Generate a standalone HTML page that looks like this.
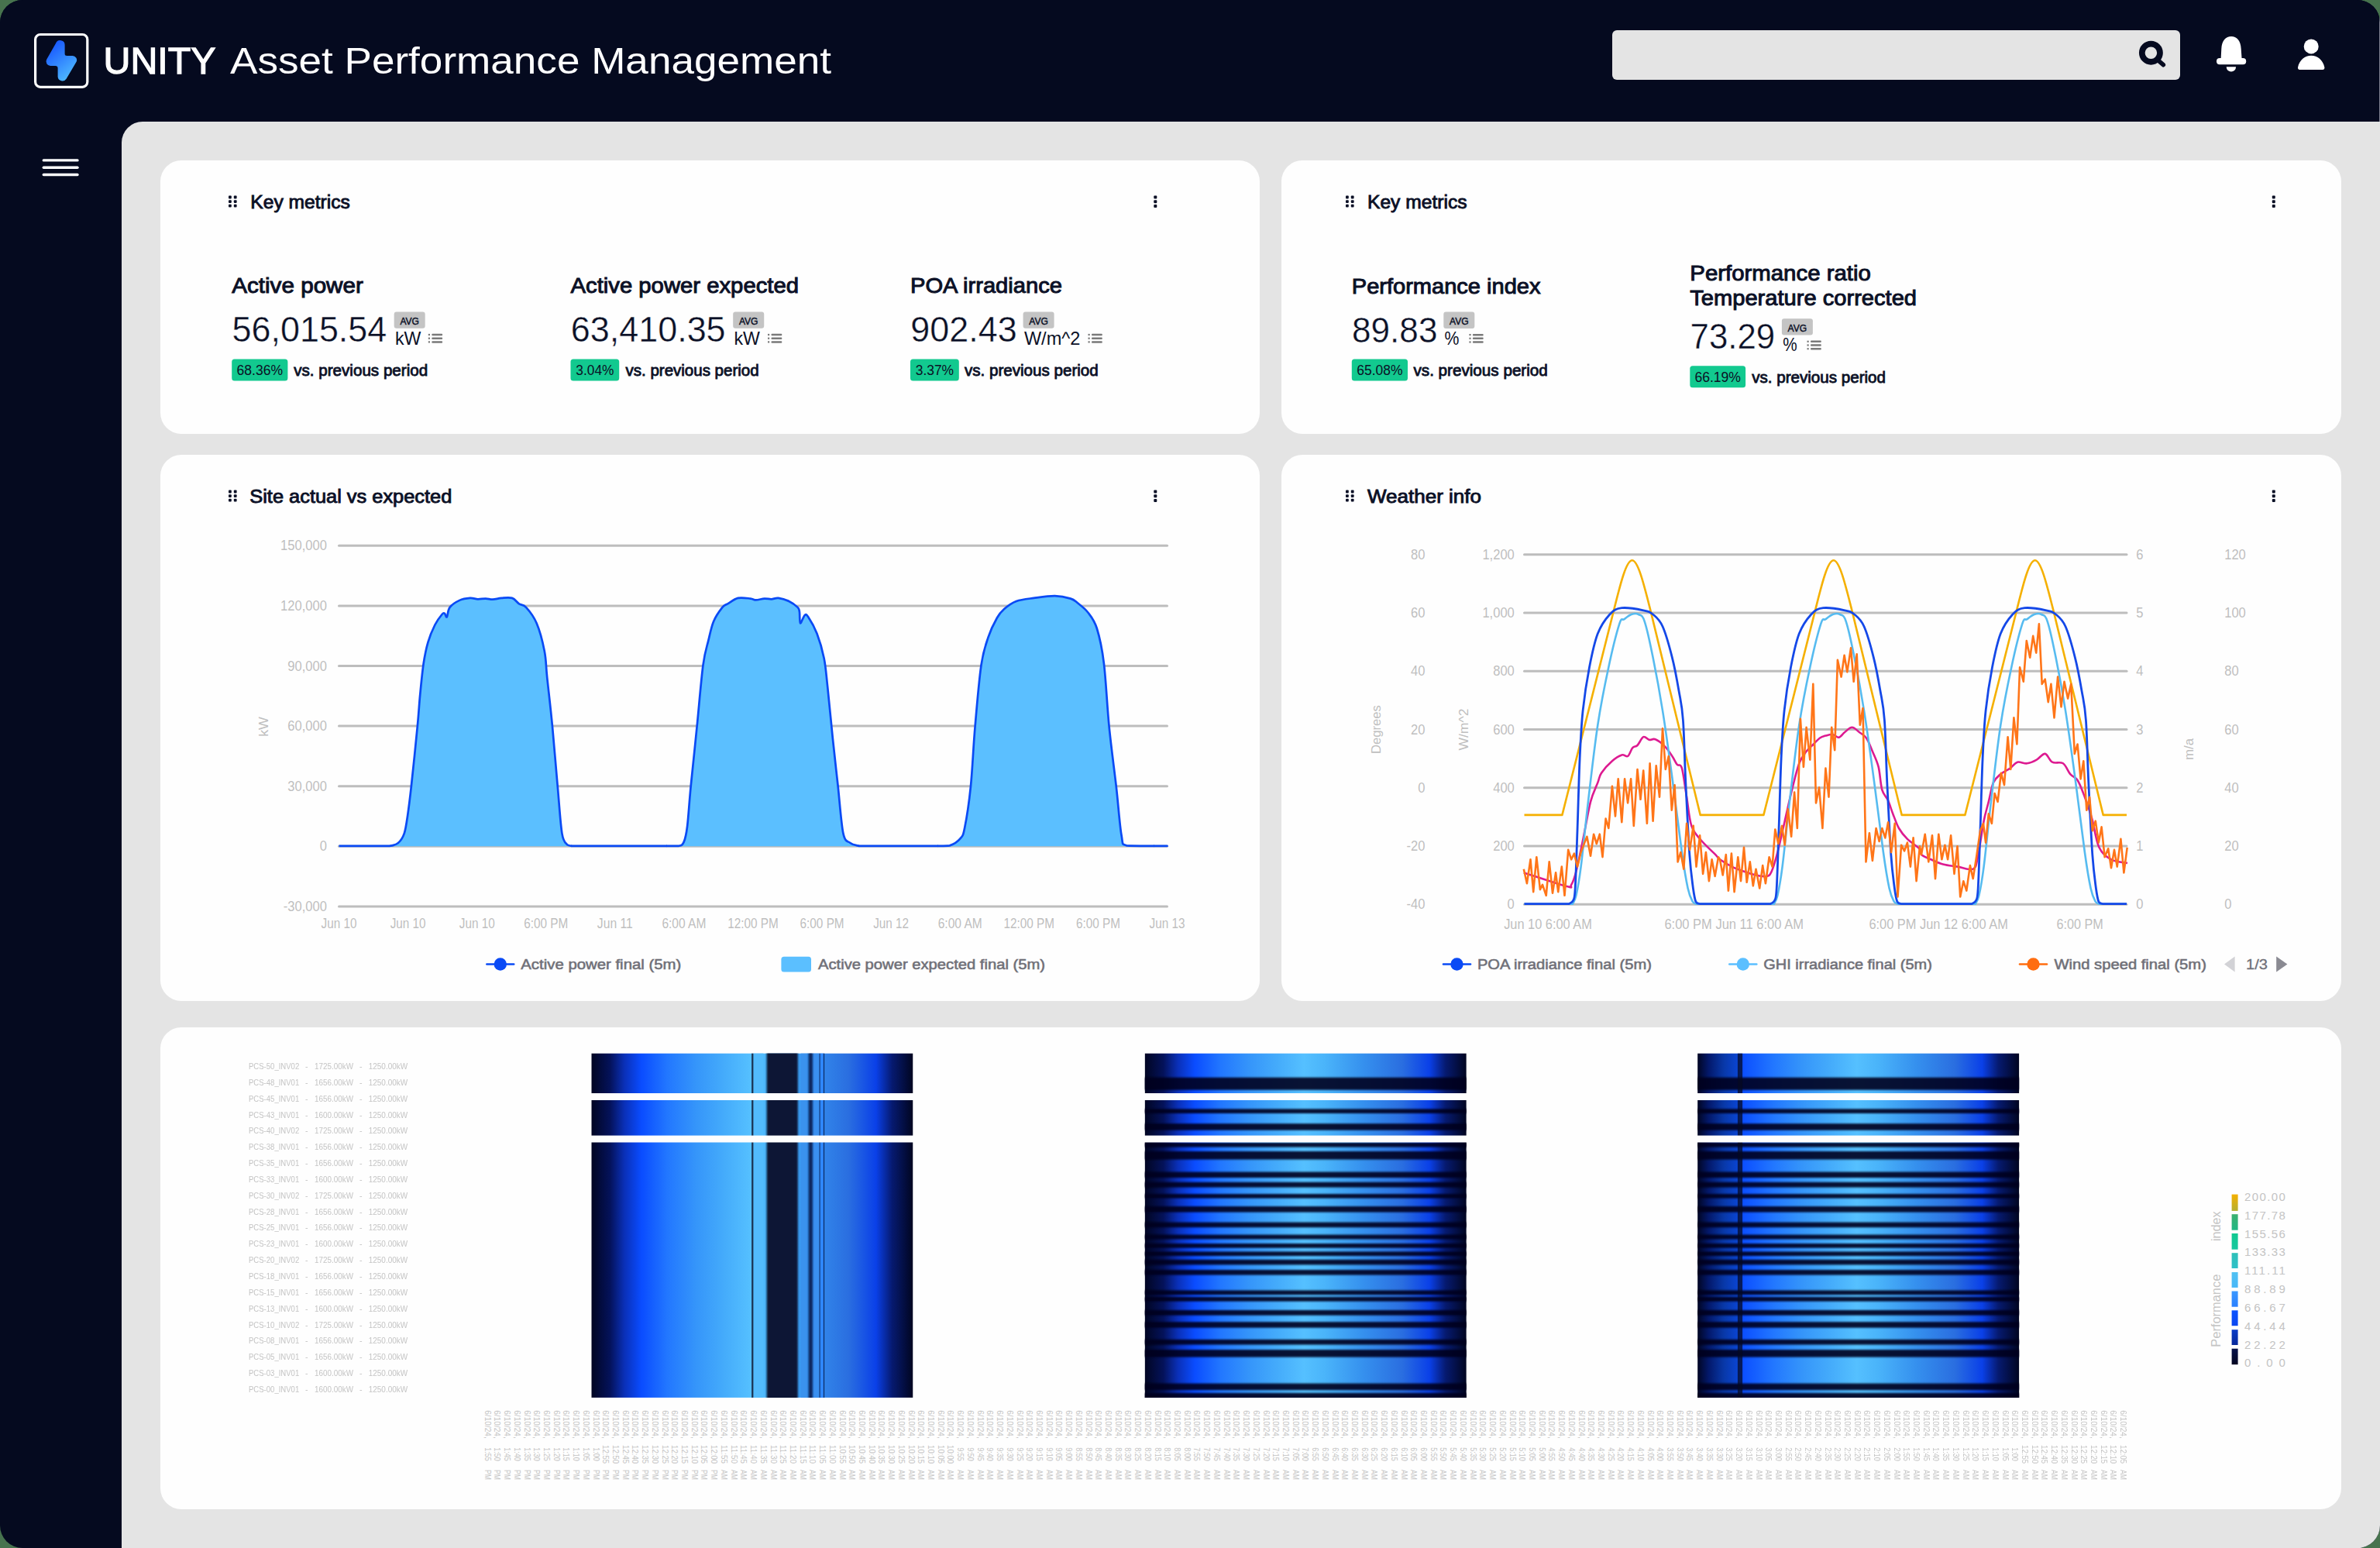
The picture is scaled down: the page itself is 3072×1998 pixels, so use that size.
<!DOCTYPE html>
<html><head><meta charset="utf-8"><title>UNITY Asset Performance Management</title>
<style>
html,body{margin:0;padding:0;width:3072px;height:1998px;overflow:hidden;background:#47734e;font-family:"Liberation Sans", sans-serif;}
.frame{position:absolute;left:0;top:0;width:3072px;height:1998px;border-radius:29px;overflow:hidden;background:#050a1f;}
.topbar{position:absolute;left:0;top:0;width:3071px;height:157px;background:#050a1f;}
.edge{position:absolute;left:3071px;top:0;width:1px;height:157px;background:#7d8090;}
.content{position:absolute;left:157px;top:157px;width:2915px;height:1841px;background:#e4e4e4;border-top-left-radius:27px;}
.card{position:absolute;background:#fefefe;border-radius:27px;}
.search{position:absolute;left:2081px;top:39px;width:733px;height:64px;background:#e4e4e4;border-radius:6px;}
svg.ov{position:absolute;left:0;top:0;}
text{font-family:"Liberation Sans", sans-serif;}
</style></head><body>
<div class="frame">
<div class="topbar"></div><div class="edge"></div>
<div class="content"></div>
<div class="card" style="left:207px;top:207px;width:1419px;height:353px"></div>
<div class="card" style="left:1654px;top:207px;width:1368px;height:353px"></div>
<div class="card" style="left:207px;top:587px;width:1419px;height:705px"></div>
<div class="card" style="left:1654px;top:587px;width:1368px;height:705px"></div>
<div class="card" style="left:207px;top:1326px;width:2815px;height:622px"></div>
<div class="search"></div>

<svg class="ov" width="3072" height="1998" viewBox="0 0 3072 1998">
<defs><linearGradient id="bolt" x1="0.2" y1="0" x2="0.8" y2="1"><stop offset="0" stop-color="#1450ff"/><stop offset="1" stop-color="#52c0ff"/></linearGradient></defs>
<rect x="45.6" y="44.5" width="67.2" height="67.8" rx="6.5" fill="none" stroke="#fff" stroke-width="3.2"/>
<path d="M72,56 A6,6 0 0 1 83.6,58.5 L83.6,69.5 Q83.6,72 86.5,72 L92.5,72 A5.6,5.6 0 0 1 98,80.8 L85.6,101.8 A6,6 0 0 1 74.6,99 L74.6,88 Q74.6,85 71.5,85 L65.5,85 A5.6,5.6 0 0 1 60.3,76.5 Z" fill="url(#bolt)"/>
<text x="133.5" y="95.0" font-size="48.5" fill="#fff" font-weight="400" text-anchor="start" textLength="145.0" lengthAdjust="spacingAndGlyphs" stroke="#fff" stroke-width="1.3">UNITY</text>
<text x="297.0" y="95.0" font-size="48.5" fill="#fff" font-weight="400" text-anchor="start" textLength="776.0" lengthAdjust="spacingAndGlyphs" >Asset Performance Management</text>
<line x1="56.3" y1="206.9" x2="100" y2="206.9" stroke="#fff" stroke-width="3.4" stroke-linecap="round"/>
<line x1="56.3" y1="216.2" x2="100" y2="216.2" stroke="#fff" stroke-width="3.4" stroke-linecap="round"/>
<line x1="56.3" y1="225.5" x2="100" y2="225.5" stroke="#fff" stroke-width="3.4" stroke-linecap="round"/>
<circle cx="2776.4" cy="68.2" r="11.6" fill="none" stroke="#050a1f" stroke-width="7.7"/>
<line x1="2785" y1="77.3" x2="2792.3" y2="83.7" stroke="#050a1f" stroke-width="5.6" stroke-linecap="round"/>
<path d="M2866.6,76 L2867.3,63 C2867.8,52.5 2873,47 2880,47 C2887,47 2892.2,52.5 2892.7,63 L2893.6,76 Z" fill="#fff"/>
<rect x="2861" y="75" width="38.2" height="8.2" rx="4" fill="#fff"/>
<path d="M2873.7,86.3 A6.2,6.2 0 0 0 2886.1,86.3 Z" fill="#fff"/>
<circle cx="2983.2" cy="59.9" r="9.5" fill="#fff"/>
<path d="M2968.5,89.9 C2966.5,89.9 2965.6,88.5 2966.1,86.5 C2968,77.5 2975,71.7 2983.2,71.7 C2991.4,71.7 2998.4,77.5 3000.3,86.5 C3000.8,88.5 2999.9,89.9 2997.9,89.9 Z" fill="#fff"/>
<rect x="295.0" y="252.6" width="3.8" height="3.8" rx="1" fill="#0b1026"/>
<rect x="295.0" y="258.2" width="3.8" height="3.8" rx="1" fill="#0b1026"/>
<rect x="295.0" y="263.8" width="3.8" height="3.8" rx="1" fill="#0b1026"/>
<rect x="301.8" y="252.6" width="3.8" height="3.8" rx="1" fill="#0b1026"/>
<rect x="301.8" y="258.2" width="3.8" height="3.8" rx="1" fill="#0b1026"/>
<rect x="301.8" y="263.8" width="3.8" height="3.8" rx="1" fill="#0b1026"/>
<text x="323.3" y="269.0" font-size="24.4" fill="#0b1026" font-weight="400" text-anchor="start" textLength="128.5" lengthAdjust="spacingAndGlyphs" stroke="#0b1026" stroke-width="0.9">Key metrics</text>
<rect x="1489.3" y="252.5" width="4" height="4" rx="1" fill="#0b1026"/>
<rect x="1489.3" y="258.3" width="4" height="4" rx="1" fill="#0b1026"/>
<rect x="1489.3" y="264.1" width="4" height="4" rx="1" fill="#0b1026"/>
<rect x="1737.0" y="252.6" width="3.8" height="3.8" rx="1" fill="#0b1026"/>
<rect x="1737.0" y="258.2" width="3.8" height="3.8" rx="1" fill="#0b1026"/>
<rect x="1737.0" y="263.8" width="3.8" height="3.8" rx="1" fill="#0b1026"/>
<rect x="1743.8" y="252.6" width="3.8" height="3.8" rx="1" fill="#0b1026"/>
<rect x="1743.8" y="258.2" width="3.8" height="3.8" rx="1" fill="#0b1026"/>
<rect x="1743.8" y="263.8" width="3.8" height="3.8" rx="1" fill="#0b1026"/>
<text x="1765.0" y="269.0" font-size="24.4" fill="#0b1026" font-weight="400" text-anchor="start" textLength="128.5" lengthAdjust="spacingAndGlyphs" stroke="#0b1026" stroke-width="0.9">Key metrics</text>
<rect x="2932.8" y="252.5" width="4" height="4" rx="1" fill="#0b1026"/>
<rect x="2932.8" y="258.3" width="4" height="4" rx="1" fill="#0b1026"/>
<rect x="2932.8" y="264.1" width="4" height="4" rx="1" fill="#0b1026"/>
<rect x="295.0" y="632.6" width="3.8" height="3.8" rx="1" fill="#0b1026"/>
<rect x="295.0" y="638.2" width="3.8" height="3.8" rx="1" fill="#0b1026"/>
<rect x="295.0" y="643.8" width="3.8" height="3.8" rx="1" fill="#0b1026"/>
<rect x="301.8" y="632.6" width="3.8" height="3.8" rx="1" fill="#0b1026"/>
<rect x="301.8" y="638.2" width="3.8" height="3.8" rx="1" fill="#0b1026"/>
<rect x="301.8" y="643.8" width="3.8" height="3.8" rx="1" fill="#0b1026"/>
<text x="322.3" y="649.0" font-size="24.4" fill="#0b1026" font-weight="400" text-anchor="start" textLength="261.0" lengthAdjust="spacingAndGlyphs" stroke="#0b1026" stroke-width="0.9">Site actual vs expected</text>
<rect x="1489.3" y="632.5" width="4" height="4" rx="1" fill="#0b1026"/>
<rect x="1489.3" y="638.3" width="4" height="4" rx="1" fill="#0b1026"/>
<rect x="1489.3" y="644.1" width="4" height="4" rx="1" fill="#0b1026"/>
<rect x="1737.0" y="632.6" width="3.8" height="3.8" rx="1" fill="#0b1026"/>
<rect x="1737.0" y="638.2" width="3.8" height="3.8" rx="1" fill="#0b1026"/>
<rect x="1737.0" y="643.8" width="3.8" height="3.8" rx="1" fill="#0b1026"/>
<rect x="1743.8" y="632.6" width="3.8" height="3.8" rx="1" fill="#0b1026"/>
<rect x="1743.8" y="638.2" width="3.8" height="3.8" rx="1" fill="#0b1026"/>
<rect x="1743.8" y="643.8" width="3.8" height="3.8" rx="1" fill="#0b1026"/>
<text x="1765.0" y="649.0" font-size="24.4" fill="#0b1026" font-weight="400" text-anchor="start" textLength="147.0" lengthAdjust="spacingAndGlyphs" stroke="#0b1026" stroke-width="0.9">Weather info</text>
<rect x="2932.8" y="632.5" width="4" height="4" rx="1" fill="#0b1026"/>
<rect x="2932.8" y="638.3" width="4" height="4" rx="1" fill="#0b1026"/>
<rect x="2932.8" y="644.1" width="4" height="4" rx="1" fill="#0b1026"/>
<text x="299.2" y="378.4" font-size="28.3" fill="#0b1026" font-weight="400" text-anchor="start" textLength="169.7" lengthAdjust="spacingAndGlyphs" stroke="#0b1026" stroke-width="1.0">Active power</text>
<text x="299.5" y="441.4" font-size="46.8" fill="#0b1026" font-weight="400" text-anchor="start" textLength="199.8" lengthAdjust="spacingAndGlyphs" stroke="#fefefe" stroke-width="0.4">56,015.54</text>
<rect x="508.7" y="402.4" width="40" height="21.4" rx="3" fill="#c4c4c4"/>
<text x="528.7" y="419.3" font-size="12.8" fill="#0b1026" font-weight="400" text-anchor="middle" textLength="24.6" lengthAdjust="spacingAndGlyphs" stroke="#0b1026" stroke-width="0.45">AVG</text>
<text x="510.0" y="444.6" font-size="23.8" fill="#0b1026" font-weight="400" text-anchor="start" textLength="33.4" lengthAdjust="spacingAndGlyphs" >kW</text>
<rect x="552.8" y="430.9" width="2.2" height="2.2" fill="#7a7a7a"/>
<rect x="557.3" y="430.8" width="13.8" height="2.5" rx="1" fill="#7a7a7a"/>
<rect x="552.8" y="435.6" width="2.2" height="2.2" fill="#7a7a7a"/>
<rect x="557.3" y="435.5" width="13.8" height="2.5" rx="1" fill="#7a7a7a"/>
<rect x="552.8" y="440.3" width="2.2" height="2.2" fill="#7a7a7a"/>
<rect x="557.3" y="440.2" width="13.8" height="2.5" rx="1" fill="#7a7a7a"/>
<rect x="299.2" y="463.5" width="72.2" height="28" rx="3.5" fill="#12c98f"/>
<text x="335.3" y="483.9" font-size="17.5" fill="#0b1026" font-weight="400" text-anchor="middle" textLength="59.4" lengthAdjust="spacingAndGlyphs" >68.36%</text>
<text x="379.2" y="484.7" font-size="20.7" fill="#0b1026" font-weight="400" text-anchor="start" textLength="173.0" lengthAdjust="spacingAndGlyphs" stroke="#0b1026" stroke-width="0.85">vs. previous period</text>
<text x="736.5" y="378.4" font-size="28.3" fill="#0b1026" font-weight="400" text-anchor="start" textLength="294.5" lengthAdjust="spacingAndGlyphs" stroke="#0b1026" stroke-width="1.0">Active power expected</text>
<text x="736.8" y="441.4" font-size="46.8" fill="#0b1026" font-weight="400" text-anchor="start" textLength="199.8" lengthAdjust="spacingAndGlyphs" stroke="#fefefe" stroke-width="0.4">63,410.35</text>
<rect x="946.2" y="402.4" width="40" height="21.4" rx="3" fill="#c4c4c4"/>
<text x="966.2" y="419.3" font-size="12.8" fill="#0b1026" font-weight="400" text-anchor="middle" textLength="24.6" lengthAdjust="spacingAndGlyphs" stroke="#0b1026" stroke-width="0.45">AVG</text>
<text x="947.5" y="444.6" font-size="23.8" fill="#0b1026" font-weight="400" text-anchor="start" textLength="33.4" lengthAdjust="spacingAndGlyphs" >kW</text>
<rect x="991.0" y="430.9" width="2.2" height="2.2" fill="#7a7a7a"/>
<rect x="995.5" y="430.8" width="13.8" height="2.5" rx="1" fill="#7a7a7a"/>
<rect x="991.0" y="435.6" width="2.2" height="2.2" fill="#7a7a7a"/>
<rect x="995.5" y="435.5" width="13.8" height="2.5" rx="1" fill="#7a7a7a"/>
<rect x="991.0" y="440.3" width="2.2" height="2.2" fill="#7a7a7a"/>
<rect x="995.5" y="440.2" width="13.8" height="2.5" rx="1" fill="#7a7a7a"/>
<rect x="736.5" y="463.5" width="62.7" height="28" rx="3.5" fill="#12c98f"/>
<text x="767.9" y="483.9" font-size="17.5" fill="#0b1026" font-weight="400" text-anchor="middle" textLength="49.1" lengthAdjust="spacingAndGlyphs" >3.04%</text>
<text x="807.5" y="484.7" font-size="20.7" fill="#0b1026" font-weight="400" text-anchor="start" textLength="172.1" lengthAdjust="spacingAndGlyphs" stroke="#0b1026" stroke-width="0.85">vs. previous period</text>
<text x="1175.0" y="378.4" font-size="28.3" fill="#0b1026" font-weight="400" text-anchor="start" textLength="196.0" lengthAdjust="spacingAndGlyphs" stroke="#0b1026" stroke-width="1.0">POA irradiance</text>
<text x="1175.3" y="441.4" font-size="46.8" fill="#0b1026" font-weight="400" text-anchor="start" textLength="137.3" lengthAdjust="spacingAndGlyphs" stroke="#fefefe" stroke-width="0.4">902.43</text>
<rect x="1320.6" y="402.4" width="40" height="21.4" rx="3" fill="#c4c4c4"/>
<text x="1340.6" y="419.3" font-size="12.8" fill="#0b1026" font-weight="400" text-anchor="middle" textLength="24.6" lengthAdjust="spacingAndGlyphs" stroke="#0b1026" stroke-width="0.45">AVG</text>
<text x="1321.9" y="444.6" font-size="23.8" fill="#0b1026" font-weight="400" text-anchor="start" textLength="72.5" lengthAdjust="spacingAndGlyphs" >W/m^2</text>
<rect x="1404.5" y="430.9" width="2.2" height="2.2" fill="#7a7a7a"/>
<rect x="1409.0" y="430.8" width="13.8" height="2.5" rx="1" fill="#7a7a7a"/>
<rect x="1404.5" y="435.6" width="2.2" height="2.2" fill="#7a7a7a"/>
<rect x="1409.0" y="435.5" width="13.8" height="2.5" rx="1" fill="#7a7a7a"/>
<rect x="1404.5" y="440.3" width="2.2" height="2.2" fill="#7a7a7a"/>
<rect x="1409.0" y="440.2" width="13.8" height="2.5" rx="1" fill="#7a7a7a"/>
<rect x="1175.0" y="463.5" width="62.8" height="28" rx="3.5" fill="#12c98f"/>
<text x="1206.4" y="483.9" font-size="17.5" fill="#0b1026" font-weight="400" text-anchor="middle" textLength="49.4" lengthAdjust="spacingAndGlyphs" >3.37%</text>
<text x="1245.0" y="484.7" font-size="20.7" fill="#0b1026" font-weight="400" text-anchor="start" textLength="172.7" lengthAdjust="spacingAndGlyphs" stroke="#0b1026" stroke-width="0.85">vs. previous period</text>
<text x="1744.8" y="378.5" font-size="28.3" fill="#0b1026" font-weight="400" text-anchor="start" textLength="243.7" lengthAdjust="spacingAndGlyphs" stroke="#0b1026" stroke-width="1.0">Performance index</text>
<text x="1745.1" y="441.5" font-size="46.8" fill="#0b1026" font-weight="400" text-anchor="start" textLength="110.3" lengthAdjust="spacingAndGlyphs" stroke="#fefefe" stroke-width="0.4">89.83</text>
<rect x="1863.3" y="402.5" width="40" height="21.4" rx="3" fill="#c4c4c4"/>
<text x="1883.3" y="419.4" font-size="12.8" fill="#0b1026" font-weight="400" text-anchor="middle" textLength="24.6" lengthAdjust="spacingAndGlyphs" stroke="#0b1026" stroke-width="0.45">AVG</text>
<text x="1864.6" y="444.7" font-size="23.8" fill="#0b1026" font-weight="400" text-anchor="start" textLength="18.9" lengthAdjust="spacingAndGlyphs" >%</text>
<rect x="1896.4" y="431.0" width="2.2" height="2.2" fill="#7a7a7a"/>
<rect x="1900.9" y="430.9" width="13.8" height="2.5" rx="1" fill="#7a7a7a"/>
<rect x="1896.4" y="435.7" width="2.2" height="2.2" fill="#7a7a7a"/>
<rect x="1900.9" y="435.6" width="13.8" height="2.5" rx="1" fill="#7a7a7a"/>
<rect x="1896.4" y="440.4" width="2.2" height="2.2" fill="#7a7a7a"/>
<rect x="1900.9" y="440.3" width="13.8" height="2.5" rx="1" fill="#7a7a7a"/>
<rect x="1744.8" y="463.6" width="72.2" height="28" rx="3.5" fill="#12c98f"/>
<text x="1780.9" y="484.0" font-size="17.5" fill="#0b1026" font-weight="400" text-anchor="middle" textLength="59.2" lengthAdjust="spacingAndGlyphs" >65.08%</text>
<text x="1824.5" y="484.8" font-size="20.7" fill="#0b1026" font-weight="400" text-anchor="start" textLength="173.3" lengthAdjust="spacingAndGlyphs" stroke="#0b1026" stroke-width="0.85">vs. previous period</text>
<text x="2181.3" y="361.6" font-size="28.3" fill="#0b1026" font-weight="400" text-anchor="start" textLength="233.5" lengthAdjust="spacingAndGlyphs" stroke="#0b1026" stroke-width="1.0">Performance ratio</text>
<text x="2181.3" y="394.3" font-size="28.3" fill="#0b1026" font-weight="400" text-anchor="start" textLength="292.7" lengthAdjust="spacingAndGlyphs" stroke="#0b1026" stroke-width="1.0">Temperature corrected</text>
<text x="2181.6" y="450.2" font-size="46.8" fill="#0b1026" font-weight="400" text-anchor="start" textLength="109.6" lengthAdjust="spacingAndGlyphs" stroke="#fefefe" stroke-width="0.4">73.29</text>
<rect x="2299.9" y="411.2" width="40" height="21.4" rx="3" fill="#c4c4c4"/>
<text x="2319.9" y="428.1" font-size="12.8" fill="#0b1026" font-weight="400" text-anchor="middle" textLength="24.6" lengthAdjust="spacingAndGlyphs" stroke="#0b1026" stroke-width="0.45">AVG</text>
<text x="2301.2" y="453.4" font-size="23.8" fill="#0b1026" font-weight="400" text-anchor="start" textLength="18.4" lengthAdjust="spacingAndGlyphs" >%</text>
<rect x="2332.5" y="439.7" width="2.2" height="2.2" fill="#7a7a7a"/>
<rect x="2337.0" y="439.6" width="13.8" height="2.5" rx="1" fill="#7a7a7a"/>
<rect x="2332.5" y="444.4" width="2.2" height="2.2" fill="#7a7a7a"/>
<rect x="2337.0" y="444.3" width="13.8" height="2.5" rx="1" fill="#7a7a7a"/>
<rect x="2332.5" y="449.1" width="2.2" height="2.2" fill="#7a7a7a"/>
<rect x="2337.0" y="449.0" width="13.8" height="2.5" rx="1" fill="#7a7a7a"/>
<rect x="2181.3" y="472.3" width="71.8" height="28" rx="3.5" fill="#12c98f"/>
<text x="2217.2" y="492.7" font-size="17.5" fill="#0b1026" font-weight="400" text-anchor="middle" textLength="59.6" lengthAdjust="spacingAndGlyphs" >66.19%</text>
<text x="2261.2" y="493.5" font-size="20.7" fill="#0b1026" font-weight="400" text-anchor="start" textLength="172.8" lengthAdjust="spacingAndGlyphs" stroke="#0b1026" stroke-width="0.85">vs. previous period</text>
<line x1="437.5" y1="704.3" x2="1506.5" y2="704.3" stroke="#bdbdbd" stroke-width="3" stroke-linecap="round"/>
<line x1="437.5" y1="781.9" x2="1506.5" y2="781.9" stroke="#bdbdbd" stroke-width="3" stroke-linecap="round"/>
<line x1="437.5" y1="859.5" x2="1506.5" y2="859.5" stroke="#bdbdbd" stroke-width="3" stroke-linecap="round"/>
<line x1="437.5" y1="937.1" x2="1506.5" y2="937.1" stroke="#bdbdbd" stroke-width="3" stroke-linecap="round"/>
<line x1="437.5" y1="1014.7" x2="1506.5" y2="1014.7" stroke="#bdbdbd" stroke-width="3" stroke-linecap="round"/>
<line x1="437.5" y1="1092.3" x2="1506.5" y2="1092.3" stroke="#bdbdbd" stroke-width="3" stroke-linecap="round"/>
<line x1="437.5" y1="1169.9" x2="1506.5" y2="1169.9" stroke="#bdbdbd" stroke-width="3" stroke-linecap="round"/>
<text x="421.9" y="710.4" font-size="17.9" fill="#bfbfbf" font-weight="400" text-anchor="end" textLength="59.8" lengthAdjust="spacingAndGlyphs" >150,000</text>
<text x="421.9" y="788.0" font-size="17.9" fill="#bfbfbf" font-weight="400" text-anchor="end" textLength="59.8" lengthAdjust="spacingAndGlyphs" >120,000</text>
<text x="421.9" y="865.6" font-size="17.9" fill="#bfbfbf" font-weight="400" text-anchor="end" textLength="50.6" lengthAdjust="spacingAndGlyphs" >90,000</text>
<text x="421.9" y="943.2" font-size="17.9" fill="#bfbfbf" font-weight="400" text-anchor="end" textLength="50.6" lengthAdjust="spacingAndGlyphs" >60,000</text>
<text x="421.9" y="1020.8" font-size="17.9" fill="#bfbfbf" font-weight="400" text-anchor="end" textLength="50.6" lengthAdjust="spacingAndGlyphs" >30,000</text>
<text x="421.9" y="1098.4" font-size="17.9" fill="#bfbfbf" font-weight="400" text-anchor="end" textLength="9.2" lengthAdjust="spacingAndGlyphs" >0</text>
<text x="421.9" y="1176.0" font-size="17.9" fill="#bfbfbf" font-weight="400" text-anchor="end" textLength="56.1" lengthAdjust="spacingAndGlyphs" >-30,000</text>
<text x="437.5" y="1198.1" font-size="18" fill="#bfbfbf" font-weight="400" text-anchor="middle" textLength="45.9" lengthAdjust="spacingAndGlyphs" >Jun 10</text>
<text x="526.6" y="1198.1" font-size="18" fill="#bfbfbf" font-weight="400" text-anchor="middle" textLength="45.9" lengthAdjust="spacingAndGlyphs" >Jun 10</text>
<text x="615.7" y="1198.1" font-size="18" fill="#bfbfbf" font-weight="400" text-anchor="middle" textLength="45.9" lengthAdjust="spacingAndGlyphs" >Jun 10</text>
<text x="704.7" y="1198.1" font-size="18" fill="#bfbfbf" font-weight="400" text-anchor="middle" textLength="57.0" lengthAdjust="spacingAndGlyphs" >6:00 PM</text>
<text x="793.8" y="1198.1" font-size="18" fill="#bfbfbf" font-weight="400" text-anchor="middle" textLength="45.9" lengthAdjust="spacingAndGlyphs" >Jun 11</text>
<text x="882.9" y="1198.1" font-size="18" fill="#bfbfbf" font-weight="400" text-anchor="middle" textLength="57.0" lengthAdjust="spacingAndGlyphs" >6:00 AM</text>
<text x="972.0" y="1198.1" font-size="18" fill="#bfbfbf" font-weight="400" text-anchor="middle" textLength="65.5" lengthAdjust="spacingAndGlyphs" >12:00 PM</text>
<text x="1061.1" y="1198.1" font-size="18" fill="#bfbfbf" font-weight="400" text-anchor="middle" textLength="57.0" lengthAdjust="spacingAndGlyphs" >6:00 PM</text>
<text x="1150.1" y="1198.1" font-size="18" fill="#bfbfbf" font-weight="400" text-anchor="middle" textLength="45.9" lengthAdjust="spacingAndGlyphs" >Jun 12</text>
<text x="1239.2" y="1198.1" font-size="18" fill="#bfbfbf" font-weight="400" text-anchor="middle" textLength="57.0" lengthAdjust="spacingAndGlyphs" >6:00 AM</text>
<text x="1328.3" y="1198.1" font-size="18" fill="#bfbfbf" font-weight="400" text-anchor="middle" textLength="65.5" lengthAdjust="spacingAndGlyphs" >12:00 PM</text>
<text x="1417.4" y="1198.1" font-size="18" fill="#bfbfbf" font-weight="400" text-anchor="middle" textLength="57.0" lengthAdjust="spacingAndGlyphs" >6:00 PM</text>
<text x="1506.5" y="1198.1" font-size="18" fill="#bfbfbf" font-weight="400" text-anchor="middle" textLength="45.9" lengthAdjust="spacingAndGlyphs" >Jun 13</text>
<text x="0" y="0" font-size="17" fill="#bfbfbf" text-anchor="middle" transform="translate(345.5,938) rotate(-90)" textLength="25.6" lengthAdjust="spacingAndGlyphs">kW</text>
<path d="M480.0,1091.9 C483.8,1091.9 497.0,1091.9 502.6,1091.9 C508.2,1091.2 510.7,1090.7 513.9,1088.0 C517.1,1085.3 519.7,1081.8 521.8,1075.6 C523.9,1069.4 524.9,1060.9 526.4,1050.7 C527.9,1040.5 528.8,1033.3 530.9,1014.5 C533.0,995.7 536.9,957.3 538.8,937.7 C540.7,918.1 540.9,910.6 542.2,897.0 C543.5,883.4 545.0,867.6 546.7,856.3 C548.4,845.0 550.0,837.4 552.4,829.1 C554.8,820.8 558.4,812.5 561.4,806.5 C564.4,800.5 568.4,795.5 570.5,793.0 C572.6,790.5 572.9,791.2 573.9,791.8 C574.9,792.3 575.7,797.6 576.8,796.3 C577.9,795.0 577.9,787.5 580.6,783.9 C583.3,780.3 588.8,776.9 593.1,774.9 C597.5,772.9 602.8,772.2 606.7,771.9 C610.7,771.6 613.4,773.2 616.8,773.3 C620.2,773.4 623.8,772.5 627.0,772.6 C630.2,772.7 632.7,773.8 636.1,773.7 C639.5,773.6 643.2,772.2 647.4,771.9 C651.5,771.6 657.2,770.6 661.0,771.9 C664.8,773.1 667.0,777.4 670.0,779.4 C673.0,781.4 675.2,779.8 679.0,783.9 C682.8,788.0 688.6,794.9 692.6,804.3 C696.6,813.7 700.5,828.7 702.8,840.4 C705.1,852.1 704.5,858.2 706.2,874.4 C707.9,890.6 710.8,914.4 713.0,937.7 C715.2,961.1 717.6,991.5 719.7,1014.5 C721.8,1037.5 723.3,1063.0 725.4,1075.6 C727.5,1088.2 730.1,1087.6 732.2,1090.3 C734.3,1091.9 736.9,1091.6 737.8,1091.9 L737.8,1092.3 L480,1092.3 Z" fill="#5bbfff"/>
<path d="M860.0,1091.9 C862.6,1091.9 872.0,1091.9 875.8,1091.9 C879.6,1091.1 880.7,1091.1 882.6,1086.9 C884.5,1082.7 885.6,1078.6 887.1,1066.5 C888.6,1054.4 889.6,1036.0 891.7,1014.5 C893.8,993.0 897.0,963.7 899.6,937.7 C902.2,911.7 905.0,877.0 907.5,858.5 C910.0,840.0 912.0,836.3 914.3,826.9 C916.6,817.5 918.1,809.2 921.1,802.0 C924.1,794.8 929.4,787.7 932.4,783.9 C935.4,780.1 935.8,781.4 939.2,779.4 C942.6,777.4 947.8,773.0 952.7,771.9 C957.6,770.8 964.8,772.2 968.6,772.6 C972.5,773.0 972.8,774.4 975.8,774.4 C978.8,774.4 983.4,772.8 986.7,772.6 C990.0,772.4 992.7,773.4 995.7,773.3 C998.7,773.2 1001.0,771.4 1004.8,771.9 C1008.6,772.4 1014.2,774.0 1018.3,776.0 C1022.4,778.0 1027.3,781.6 1029.6,783.9 C1031.9,786.2 1031.3,786.2 1031.9,789.6 C1032.5,793.0 1031.9,803.5 1033.0,804.3 C1034.1,805.0 1037.0,795.4 1038.7,794.1 C1040.4,792.8 1040.6,792.3 1043.2,796.3 C1045.8,800.2 1051.1,808.9 1054.5,817.8 C1057.9,826.7 1061.3,838.2 1063.6,849.5 C1065.9,860.8 1066.2,868.4 1068.1,885.7 C1070.0,903.0 1072.7,932.0 1074.9,953.5 C1077.2,975.0 1079.3,994.1 1081.6,1014.5 C1083.8,1034.8 1085.8,1063.3 1088.4,1075.6 C1091.1,1087.8 1094.1,1085.3 1097.5,1088.0 C1100.9,1090.7 1106.9,1091.2 1108.8,1091.9 L1108.8,1092.3 L860,1092.3 Z" fill="#5bbfff"/>
<path d="M1210.0,1091.9 C1212.6,1091.8 1220.9,1091.9 1225.8,1091.4 C1230.7,1089.8 1236.2,1086.2 1239.4,1082.4 C1242.6,1078.6 1242.8,1080.1 1245.1,1068.8 C1247.4,1057.5 1250.8,1036.3 1253.0,1014.5 C1255.2,992.6 1256.3,963.7 1258.6,937.7 C1260.8,911.7 1263.7,877.7 1266.5,858.5 C1269.3,839.3 1272.2,832.6 1275.6,822.4 C1279.0,812.2 1283.5,803.5 1286.9,797.5 C1290.3,791.5 1291.8,789.8 1295.9,786.2 C1300.1,782.6 1305.4,778.4 1311.8,776.0 C1318.2,773.6 1326.1,773.0 1334.4,771.9 C1342.7,770.8 1353.6,769.1 1361.5,769.2 C1369.4,769.3 1377.0,771.1 1381.9,772.6 C1386.8,774.1 1387.1,775.3 1390.9,778.3 C1394.7,781.3 1400.3,785.2 1404.5,790.7 C1408.7,796.2 1412.4,800.1 1415.8,811.0 C1419.2,821.9 1422.3,835.2 1424.9,856.3 C1427.5,877.4 1429.0,911.3 1431.6,937.7 C1434.2,964.1 1438.0,991.1 1440.7,1014.5 C1443.4,1037.8 1445.2,1065.0 1447.5,1077.8 C1449.8,1090.6 1447.2,1089.1 1454.3,1091.4 C1461.4,1091.9 1484.0,1091.8 1490.0,1091.9 L1490,1092.3 L1210,1092.3 Z" fill="#5bbfff"/>
<path d="M437.5,1091.9 L480,1091.9" stroke="#0a4af5" stroke-width="2.7" fill="none"/>
<path d="M737.8,1091.9 L860,1091.9 M1108.8,1091.9 L1210,1091.9 M1490,1091.9 L1506.5,1091.9" stroke="#0a4af5" stroke-width="2.7" fill="none" stroke-linecap="round"/>
<path d="M480.0,1091.9 C483.8,1091.9 497.0,1091.9 502.6,1091.9 C508.2,1091.2 510.7,1090.7 513.9,1088.0 C517.1,1085.3 519.7,1081.8 521.8,1075.6 C523.9,1069.4 524.9,1060.9 526.4,1050.7 C527.9,1040.5 528.8,1033.3 530.9,1014.5 C533.0,995.7 536.9,957.3 538.8,937.7 C540.7,918.1 540.9,910.6 542.2,897.0 C543.5,883.4 545.0,867.6 546.7,856.3 C548.4,845.0 550.0,837.4 552.4,829.1 C554.8,820.8 558.4,812.5 561.4,806.5 C564.4,800.5 568.4,795.5 570.5,793.0 C572.6,790.5 572.9,791.2 573.9,791.8 C574.9,792.3 575.7,797.6 576.8,796.3 C577.9,795.0 577.9,787.5 580.6,783.9 C583.3,780.3 588.8,776.9 593.1,774.9 C597.5,772.9 602.8,772.2 606.7,771.9 C610.7,771.6 613.4,773.2 616.8,773.3 C620.2,773.4 623.8,772.5 627.0,772.6 C630.2,772.7 632.7,773.8 636.1,773.7 C639.5,773.6 643.2,772.2 647.4,771.9 C651.5,771.6 657.2,770.6 661.0,771.9 C664.8,773.1 667.0,777.4 670.0,779.4 C673.0,781.4 675.2,779.8 679.0,783.9 C682.8,788.0 688.6,794.9 692.6,804.3 C696.6,813.7 700.5,828.7 702.8,840.4 C705.1,852.1 704.5,858.2 706.2,874.4 C707.9,890.6 710.8,914.4 713.0,937.7 C715.2,961.1 717.6,991.5 719.7,1014.5 C721.8,1037.5 723.3,1063.0 725.4,1075.6 C727.5,1088.2 730.1,1087.6 732.2,1090.3 C734.3,1091.9 736.9,1091.6 737.8,1091.9" stroke="#0a4af5" stroke-width="2.7" fill="none" stroke-linejoin="round"/>
<path d="M860.0,1091.9 C862.6,1091.9 872.0,1091.9 875.8,1091.9 C879.6,1091.1 880.7,1091.1 882.6,1086.9 C884.5,1082.7 885.6,1078.6 887.1,1066.5 C888.6,1054.4 889.6,1036.0 891.7,1014.5 C893.8,993.0 897.0,963.7 899.6,937.7 C902.2,911.7 905.0,877.0 907.5,858.5 C910.0,840.0 912.0,836.3 914.3,826.9 C916.6,817.5 918.1,809.2 921.1,802.0 C924.1,794.8 929.4,787.7 932.4,783.9 C935.4,780.1 935.8,781.4 939.2,779.4 C942.6,777.4 947.8,773.0 952.7,771.9 C957.6,770.8 964.8,772.2 968.6,772.6 C972.5,773.0 972.8,774.4 975.8,774.4 C978.8,774.4 983.4,772.8 986.7,772.6 C990.0,772.4 992.7,773.4 995.7,773.3 C998.7,773.2 1001.0,771.4 1004.8,771.9 C1008.6,772.4 1014.2,774.0 1018.3,776.0 C1022.4,778.0 1027.3,781.6 1029.6,783.9 C1031.9,786.2 1031.3,786.2 1031.9,789.6 C1032.5,793.0 1031.9,803.5 1033.0,804.3 C1034.1,805.0 1037.0,795.4 1038.7,794.1 C1040.4,792.8 1040.6,792.3 1043.2,796.3 C1045.8,800.2 1051.1,808.9 1054.5,817.8 C1057.9,826.7 1061.3,838.2 1063.6,849.5 C1065.9,860.8 1066.2,868.4 1068.1,885.7 C1070.0,903.0 1072.7,932.0 1074.9,953.5 C1077.2,975.0 1079.3,994.1 1081.6,1014.5 C1083.8,1034.8 1085.8,1063.3 1088.4,1075.6 C1091.1,1087.8 1094.1,1085.3 1097.5,1088.0 C1100.9,1090.7 1106.9,1091.2 1108.8,1091.9" stroke="#0a4af5" stroke-width="2.7" fill="none" stroke-linejoin="round"/>
<path d="M1210.0,1091.9 C1212.6,1091.8 1220.9,1091.9 1225.8,1091.4 C1230.7,1089.8 1236.2,1086.2 1239.4,1082.4 C1242.6,1078.6 1242.8,1080.1 1245.1,1068.8 C1247.4,1057.5 1250.8,1036.3 1253.0,1014.5 C1255.2,992.6 1256.3,963.7 1258.6,937.7 C1260.8,911.7 1263.7,877.7 1266.5,858.5 C1269.3,839.3 1272.2,832.6 1275.6,822.4 C1279.0,812.2 1283.5,803.5 1286.9,797.5 C1290.3,791.5 1291.8,789.8 1295.9,786.2 C1300.1,782.6 1305.4,778.4 1311.8,776.0 C1318.2,773.6 1326.1,773.0 1334.4,771.9 C1342.7,770.8 1353.6,769.1 1361.5,769.2 C1369.4,769.3 1377.0,771.1 1381.9,772.6 C1386.8,774.1 1387.1,775.3 1390.9,778.3 C1394.7,781.3 1400.3,785.2 1404.5,790.7 C1408.7,796.2 1412.4,800.1 1415.8,811.0 C1419.2,821.9 1422.3,835.2 1424.9,856.3 C1427.5,877.4 1429.0,911.3 1431.6,937.7 C1434.2,964.1 1438.0,991.1 1440.7,1014.5 C1443.4,1037.8 1445.2,1065.0 1447.5,1077.8 C1449.8,1090.6 1447.2,1089.1 1454.3,1091.4 C1461.4,1091.9 1484.0,1091.8 1490.0,1091.9" stroke="#0a4af5" stroke-width="2.7" fill="none" stroke-linejoin="round"/>
<line x1="628.4" y1="1244.5" x2="663.2" y2="1244.5" stroke="#0a4af5" stroke-width="2.6" stroke-linecap="round"/>
<circle cx="645.8" cy="1244.5" r="8.2" fill="#0a4af5"/>
<text x="672.3" y="1251.0" font-size="18" fill="#707078" font-weight="400" text-anchor="start" textLength="207.0" lengthAdjust="spacingAndGlyphs" stroke="#707078" stroke-width="0.55">Active power final (5m)</text>
<rect x="1008.4" y="1234.8" width="38.6" height="19.8" rx="3.5" fill="#5bbfff"/>
<text x="1056.0" y="1251.0" font-size="18" fill="#707078" font-weight="400" text-anchor="start" textLength="293.0" lengthAdjust="spacingAndGlyphs" stroke="#707078" stroke-width="0.55">Active power expected final (5m)</text>
<line x1="1967.5" y1="715.7" x2="2745" y2="715.7" stroke="#bdbdbd" stroke-width="3" stroke-linecap="round"/>
<line x1="1967.5" y1="791.0" x2="2745" y2="791.0" stroke="#bdbdbd" stroke-width="3" stroke-linecap="round"/>
<line x1="1967.5" y1="866.2" x2="2745" y2="866.2" stroke="#bdbdbd" stroke-width="3" stroke-linecap="round"/>
<line x1="1967.5" y1="941.5" x2="2745" y2="941.5" stroke="#bdbdbd" stroke-width="3" stroke-linecap="round"/>
<line x1="1967.5" y1="1016.7" x2="2745" y2="1016.7" stroke="#bdbdbd" stroke-width="3" stroke-linecap="round"/>
<line x1="1967.5" y1="1092.0" x2="2745" y2="1092.0" stroke="#bdbdbd" stroke-width="3" stroke-linecap="round"/>
<line x1="1967.5" y1="1167.2" x2="2745" y2="1167.2" stroke="#bdbdbd" stroke-width="3" stroke-linecap="round"/>
<text x="1839.4" y="721.8" font-size="17.9" fill="#bfbfbf" font-weight="400" text-anchor="end" textLength="18.4" lengthAdjust="spacingAndGlyphs" >80</text>
<text x="1954.8" y="721.8" font-size="17.9" fill="#bfbfbf" font-weight="400" text-anchor="end" textLength="41.4" lengthAdjust="spacingAndGlyphs" >1,200</text>
<text x="2757.2" y="721.8" font-size="17.9" fill="#bfbfbf" font-weight="400" text-anchor="start" textLength="9.2" lengthAdjust="spacingAndGlyphs" >6</text>
<text x="2871.2" y="721.8" font-size="17.9" fill="#bfbfbf" font-weight="400" text-anchor="start" textLength="27.6" lengthAdjust="spacingAndGlyphs" >120</text>
<text x="1839.4" y="797.1" font-size="17.9" fill="#bfbfbf" font-weight="400" text-anchor="end" textLength="18.4" lengthAdjust="spacingAndGlyphs" >60</text>
<text x="1954.8" y="797.1" font-size="17.9" fill="#bfbfbf" font-weight="400" text-anchor="end" textLength="41.4" lengthAdjust="spacingAndGlyphs" >1,000</text>
<text x="2757.2" y="797.1" font-size="17.9" fill="#bfbfbf" font-weight="400" text-anchor="start" textLength="9.2" lengthAdjust="spacingAndGlyphs" >5</text>
<text x="2871.2" y="797.1" font-size="17.9" fill="#bfbfbf" font-weight="400" text-anchor="start" textLength="27.6" lengthAdjust="spacingAndGlyphs" >100</text>
<text x="1839.4" y="872.3" font-size="17.9" fill="#bfbfbf" font-weight="400" text-anchor="end" textLength="18.4" lengthAdjust="spacingAndGlyphs" >40</text>
<text x="1954.8" y="872.3" font-size="17.9" fill="#bfbfbf" font-weight="400" text-anchor="end" textLength="27.6" lengthAdjust="spacingAndGlyphs" >800</text>
<text x="2757.2" y="872.3" font-size="17.9" fill="#bfbfbf" font-weight="400" text-anchor="start" textLength="9.2" lengthAdjust="spacingAndGlyphs" >4</text>
<text x="2871.2" y="872.3" font-size="17.9" fill="#bfbfbf" font-weight="400" text-anchor="start" textLength="18.4" lengthAdjust="spacingAndGlyphs" >80</text>
<text x="1839.4" y="947.6" font-size="17.9" fill="#bfbfbf" font-weight="400" text-anchor="end" textLength="18.4" lengthAdjust="spacingAndGlyphs" >20</text>
<text x="1954.8" y="947.6" font-size="17.9" fill="#bfbfbf" font-weight="400" text-anchor="end" textLength="27.6" lengthAdjust="spacingAndGlyphs" >600</text>
<text x="2757.2" y="947.6" font-size="17.9" fill="#bfbfbf" font-weight="400" text-anchor="start" textLength="9.2" lengthAdjust="spacingAndGlyphs" >3</text>
<text x="2871.2" y="947.6" font-size="17.9" fill="#bfbfbf" font-weight="400" text-anchor="start" textLength="18.4" lengthAdjust="spacingAndGlyphs" >60</text>
<text x="1839.4" y="1022.8" font-size="17.9" fill="#bfbfbf" font-weight="400" text-anchor="end" textLength="9.2" lengthAdjust="spacingAndGlyphs" >0</text>
<text x="1954.8" y="1022.8" font-size="17.9" fill="#bfbfbf" font-weight="400" text-anchor="end" textLength="27.6" lengthAdjust="spacingAndGlyphs" >400</text>
<text x="2757.2" y="1022.8" font-size="17.9" fill="#bfbfbf" font-weight="400" text-anchor="start" textLength="9.2" lengthAdjust="spacingAndGlyphs" >2</text>
<text x="2871.2" y="1022.8" font-size="17.9" fill="#bfbfbf" font-weight="400" text-anchor="start" textLength="18.4" lengthAdjust="spacingAndGlyphs" >40</text>
<text x="1839.4" y="1098.0" font-size="17.9" fill="#bfbfbf" font-weight="400" text-anchor="end" textLength="23.9" lengthAdjust="spacingAndGlyphs" >-20</text>
<text x="1954.8" y="1098.0" font-size="17.9" fill="#bfbfbf" font-weight="400" text-anchor="end" textLength="27.6" lengthAdjust="spacingAndGlyphs" >200</text>
<text x="2757.2" y="1098.0" font-size="17.9" fill="#bfbfbf" font-weight="400" text-anchor="start" textLength="9.2" lengthAdjust="spacingAndGlyphs" >1</text>
<text x="2871.2" y="1098.0" font-size="17.9" fill="#bfbfbf" font-weight="400" text-anchor="start" textLength="18.4" lengthAdjust="spacingAndGlyphs" >20</text>
<text x="1839.4" y="1173.3" font-size="17.9" fill="#bfbfbf" font-weight="400" text-anchor="end" textLength="23.9" lengthAdjust="spacingAndGlyphs" >-40</text>
<text x="1954.8" y="1173.3" font-size="17.9" fill="#bfbfbf" font-weight="400" text-anchor="end" textLength="9.2" lengthAdjust="spacingAndGlyphs" >0</text>
<text x="2757.2" y="1173.3" font-size="17.9" fill="#bfbfbf" font-weight="400" text-anchor="start" textLength="9.2" lengthAdjust="spacingAndGlyphs" >0</text>
<text x="2871.2" y="1173.3" font-size="17.9" fill="#bfbfbf" font-weight="400" text-anchor="start" textLength="9.2" lengthAdjust="spacingAndGlyphs" >0</text>
<text x="0" y="0" font-size="17" fill="#bfbfbf" text-anchor="middle" transform="translate(1781.5,941.6) rotate(-90)" textLength="63.0" lengthAdjust="spacingAndGlyphs">Degrees</text>
<text x="0" y="0" font-size="17" fill="#bfbfbf" text-anchor="middle" transform="translate(1894.5,941.6) rotate(-90)" textLength="54.0" lengthAdjust="spacingAndGlyphs">W/m^2</text>
<text x="0" y="0" font-size="17" fill="#bfbfbf" text-anchor="middle" transform="translate(2830.5,967) rotate(-90)" textLength="28.0" lengthAdjust="spacingAndGlyphs">m/a</text>
<text x="1941.2" y="1198.8" font-size="18" fill="#bfbfbf" font-weight="400" text-anchor="start" textLength="113.7" lengthAdjust="spacingAndGlyphs" >Jun 10 6:00 AM</text>
<text x="2148.4" y="1198.8" font-size="18" fill="#bfbfbf" font-weight="400" text-anchor="start" textLength="179.5" lengthAdjust="spacingAndGlyphs" >6:00 PM Jun 11 6:00 AM</text>
<text x="2412.4" y="1198.8" font-size="18" fill="#bfbfbf" font-weight="400" text-anchor="start" textLength="179.4" lengthAdjust="spacingAndGlyphs" >6:00 PM Jun 12 6:00 AM</text>
<text x="2654.4" y="1198.8" font-size="18" fill="#bfbfbf" font-weight="400" text-anchor="start" textLength="60.3" lengthAdjust="spacingAndGlyphs" >6:00 PM</text>
<path d="M1967.5,1051.9 L2016.4,1051.9 L2082.5,789.9 C2090.5,758.0 2098.6,723.3 2106.7,723.3 C2114.7,723.3 2122.8,758.0 2130.9,789.9 L2194.7,1051.9 L2276.4,1051.9 L2342.5,789.9 C2350.5,758.0 2358.6,723.3 2366.7,723.3 C2374.7,723.3 2382.8,758.0 2390.9,789.9 L2454.7,1051.9 L2536.4,1051.9 L2602.5,789.9 C2610.5,758.0 2618.6,723.3 2626.7,723.3 C2634.7,723.3 2642.8,758.0 2650.9,789.9 L2714.7,1051.9 L2745,1051.9" stroke="#f5b000" stroke-width="2.6" fill="none" stroke-linejoin="round"/>
<path d="M1966.8,1126.4 C1976.0,1129.3 2011.8,1141.4 2022.0,1144.0 C2032.2,1146.6 2026.1,1145.1 2028.2,1141.9 C2030.3,1138.7 2031.8,1134.9 2034.4,1124.8 C2037.0,1114.7 2040.6,1096.4 2043.7,1081.4 C2046.8,1066.4 2049.9,1046.8 2053.0,1034.9 C2056.1,1023.0 2060.0,1016.3 2062.3,1010.1 C2064.7,1003.9 2063.9,1002.3 2067.0,997.7 C2070.1,993.0 2076.5,986.0 2080.9,982.2 C2085.3,978.3 2090.0,975.5 2093.3,974.4 C2096.7,973.4 2098.8,977.5 2101.1,976.0 C2103.4,974.4 2105.2,967.4 2107.3,965.1 C2109.4,962.8 2111.2,964.3 2113.5,962.0 C2115.8,959.7 2118.7,952.4 2121.2,951.2 C2123.8,950.0 2126.4,954.4 2129.0,954.9 C2131.6,955.4 2133.4,952.8 2136.7,954.3 C2140.1,955.7 2145.5,959.9 2149.1,963.6 C2152.8,967.2 2155.9,972.1 2158.4,976.0 C2161.0,979.8 2162.6,984.2 2164.7,986.8 C2166.7,989.4 2168.8,984.5 2170.9,991.5 C2172.9,998.4 2175.0,1016.3 2177.1,1028.7 C2179.1,1041.1 2180.2,1056.6 2183.3,1065.9 C2186.4,1075.2 2190.5,1078.3 2195.7,1084.5 C2200.8,1090.7 2210.2,1099.0 2214.3,1103.1 C2218.3,1107.2 2216.5,1106.7 2220.0,1109.3 C2223.5,1111.9 2230.3,1116.0 2235.5,1118.6 C2240.7,1121.2 2245.8,1123.0 2251.0,1124.8 C2256.2,1126.6 2261.6,1128.4 2266.5,1129.5 C2271.4,1130.5 2277.1,1131.8 2280.5,1131.0 C2283.8,1130.2 2284.3,1130.0 2286.7,1124.8 C2289.0,1119.6 2291.6,1110.9 2294.4,1100.0 C2297.3,1089.1 2300.6,1073.1 2303.7,1059.7 C2306.8,1046.3 2309.9,1031.8 2313.0,1019.4 C2316.1,1007.0 2319.2,993.5 2322.3,985.3 C2325.4,977.0 2328.5,973.9 2331.6,969.8 C2334.7,965.6 2338.1,963.3 2340.9,960.5 C2343.8,957.6 2346.1,954.5 2348.7,952.7 C2351.3,950.9 2353.6,950.4 2356.4,949.6 C2359.3,948.8 2362.9,947.7 2365.7,948.1 C2368.6,948.4 2370.9,952.3 2373.5,951.8 C2376.1,951.3 2378.4,947.1 2381.2,945.0 C2384.1,942.8 2387.4,938.8 2390.5,938.8 C2393.6,938.8 2396.7,942.6 2399.8,945.0 C2402.9,947.3 2406.3,948.6 2409.1,952.7 C2412.0,956.8 2414.3,963.6 2416.9,969.8 C2419.5,976.0 2422.6,981.7 2424.7,989.9 C2426.7,998.2 2427.2,1012.1 2429.3,1019.4 C2431.4,1026.6 2434.7,1028.2 2437.1,1033.3 C2439.4,1038.5 2440.9,1044.4 2443.3,1050.4 C2445.6,1056.3 2447.9,1063.6 2451.0,1069.0 C2454.1,1074.4 2457.5,1078.6 2461.9,1082.9 C2466.3,1087.3 2474.3,1092.0 2477.4,1095.3 C2480.4,1098.7 2477.5,1100.8 2480.0,1103.1 C2482.5,1105.4 2487.8,1107.2 2492.4,1109.3 C2497.1,1111.4 2502.2,1114.0 2507.9,1115.5 C2513.6,1117.1 2520.1,1117.6 2526.5,1118.6 C2533.0,1119.6 2542.3,1123.8 2546.7,1121.7 C2551.1,1119.6 2550.5,1116.5 2552.9,1106.2 C2555.2,1095.9 2558.3,1071.6 2560.6,1059.7 C2562.9,1047.8 2564.8,1043.2 2566.8,1034.9 C2568.9,1026.6 2570.4,1016.0 2573.0,1010.1 C2575.6,1004.1 2578.7,1002.3 2582.3,999.2 C2585.9,996.1 2591.1,994.1 2594.7,991.5 C2598.3,988.9 2600.4,984.8 2604.0,983.7 C2607.6,982.7 2612.3,985.8 2616.4,985.3 C2620.6,984.8 2625.0,982.7 2628.8,980.6 C2632.7,978.6 2636.3,972.4 2639.7,972.9 C2643.0,973.4 2645.1,981.7 2649.0,983.7 C2652.9,985.8 2659.1,982.7 2662.9,985.3 C2666.8,987.9 2669.1,995.6 2672.2,999.2 C2675.3,1002.8 2678.4,1002.1 2681.6,1007.0 C2684.7,1011.9 2687.8,1020.4 2690.9,1028.7 C2694.0,1037.0 2697.1,1045.7 2700.2,1056.6 C2703.3,1067.4 2705.3,1085.0 2709.5,1093.8 C2713.6,1102.6 2718.9,1105.9 2725.0,1109.3 C2731.1,1112.7 2742.5,1113.2 2746.0,1114.0" stroke="#dd1a90" stroke-width="2.6" fill="none"/>
<path d="M1967.5,1166.7 L2029.8,1166.7 C2030.5,1164.9 2032.6,1163.8 2034.4,1155.8 C2036.2,1147.8 2038.0,1138.8 2040.6,1118.6 C2043.2,1098.4 2046.3,1065.4 2049.9,1034.9 C2053.5,1004.4 2057.9,964.6 2062.3,935.7 C2066.7,906.7 2071.6,882.9 2076.3,861.2 C2080.9,839.5 2086.9,815.8 2090.2,805.4 C2093.6,795.1 2093.9,801.3 2096.4,799.2 C2099.0,797.2 2102.6,794.1 2105.7,793.0 C2108.8,792.0 2112.2,791.5 2115.0,793.0 C2117.9,794.6 2119.7,793.0 2122.8,802.3 C2125.9,811.6 2129.8,829.7 2133.6,848.8 C2137.5,868.0 2141.9,891.2 2146.0,917.1 C2150.2,942.9 2154.3,973.4 2158.4,1003.9 C2162.6,1034.4 2167.5,1076.2 2170.9,1100.0 C2174.2,1123.8 2176.3,1135.9 2178.6,1146.5 C2180.9,1157.1 2183.0,1160.2 2184.8,1163.6 C2186.6,1166.7 2188.7,1166.1 2189.5,1166.7 L2289.8,1166.7 C2290.5,1164.9 2292.6,1163.8 2294.4,1155.8 C2296.2,1147.8 2298.0,1138.8 2300.6,1118.6 C2303.2,1098.4 2306.3,1065.4 2309.9,1034.9 C2313.5,1004.4 2317.9,964.6 2322.3,935.7 C2326.7,906.7 2331.6,882.9 2336.3,861.2 C2340.9,839.5 2346.9,815.8 2350.2,805.4 C2353.6,795.1 2353.9,801.3 2356.4,799.2 C2359.0,797.2 2362.6,794.1 2365.7,793.0 C2368.8,792.0 2372.2,791.5 2375.0,793.0 C2377.9,794.6 2379.7,793.0 2382.8,802.3 C2385.9,811.6 2389.8,829.7 2393.6,848.8 C2397.5,868.0 2401.9,891.2 2406.0,917.1 C2410.2,942.9 2414.3,973.4 2418.4,1003.9 C2422.6,1034.4 2427.5,1076.2 2430.9,1100.0 C2434.2,1123.8 2436.3,1135.9 2438.6,1146.5 C2440.9,1157.1 2443.0,1160.2 2444.8,1163.6 C2446.6,1166.7 2448.7,1166.1 2449.5,1166.7 L2549.8,1166.7 C2550.5,1164.9 2552.6,1163.8 2554.4,1155.8 C2556.2,1147.8 2558.0,1138.8 2560.6,1118.6 C2563.2,1098.4 2566.3,1065.4 2569.9,1034.9 C2573.5,1004.4 2577.9,964.6 2582.3,935.7 C2586.7,906.7 2591.6,882.9 2596.3,861.2 C2600.9,839.5 2606.9,815.8 2610.2,805.4 C2613.6,795.1 2613.9,801.3 2616.4,799.2 C2619.0,797.2 2622.6,794.1 2625.7,793.0 C2628.8,792.0 2632.2,791.5 2635.0,793.0 C2637.9,794.6 2639.7,793.0 2642.8,802.3 C2645.9,811.6 2649.8,829.7 2653.6,848.8 C2657.5,868.0 2661.9,891.2 2666.0,917.1 C2670.2,942.9 2674.3,973.4 2678.4,1003.9 C2682.6,1034.4 2687.5,1076.2 2690.9,1100.0 C2694.2,1123.8 2696.3,1135.9 2698.6,1146.5 C2700.9,1157.1 2703.0,1160.2 2704.8,1163.6 C2706.6,1166.7 2708.7,1166.1 2709.5,1166.7 L2745,1166.7" stroke="#56bbf0" stroke-width="2.6" fill="none"/>
<path d="M1967.5,1166.7 L2025.1,1166.7 C2026.0,1165.9 2029.4,1165.4 2030.7,1162.0 C2032.0,1158.7 2032.3,1161.5 2033.2,1146.5 C2034.1,1131.5 2035.0,1100.0 2036.0,1072.1 C2037.0,1044.2 2037.9,1004.9 2039.1,979.1 C2040.3,953.2 2041.0,936.7 2043.1,917.1 C2045.2,897.4 2048.3,877.8 2051.5,861.2 C2054.7,844.7 2057.9,829.2 2062.3,817.8 C2066.7,806.5 2072.7,798.6 2077.8,793.0 C2083.0,787.5 2086.1,785.5 2093.3,784.7 C2100.6,783.8 2114.5,786.4 2121.2,787.8 C2128.0,789.1 2129.5,789.6 2133.6,793.0 C2137.8,796.5 2141.9,799.2 2146.0,808.5 C2150.2,817.8 2154.9,834.9 2158.4,848.8 C2162.0,862.8 2164.8,878.8 2167.1,892.2 C2169.5,905.7 2171.0,909.8 2172.4,929.5 C2173.9,949.1 2174.4,981.1 2175.8,1010.1 C2177.2,1039.0 2179.2,1080.4 2180.8,1103.1 C2182.4,1125.8 2184.1,1136.4 2185.4,1146.5 C2186.8,1156.6 2187.4,1160.2 2188.8,1163.6 C2190.3,1166.7 2193.2,1166.1 2194.1,1166.7 L2285.1,1166.7 C2286.0,1165.9 2289.4,1165.4 2290.7,1162.0 C2292.0,1158.7 2292.3,1161.5 2293.2,1146.5 C2294.1,1131.5 2295.0,1100.0 2296.0,1072.1 C2297.0,1044.2 2297.9,1004.9 2299.1,979.1 C2300.3,953.2 2301.0,936.7 2303.1,917.1 C2305.2,897.4 2308.3,877.8 2311.5,861.2 C2314.7,844.7 2317.9,829.2 2322.3,817.8 C2326.7,806.5 2332.7,798.6 2337.8,793.0 C2343.0,787.5 2346.1,785.5 2353.3,784.7 C2360.6,783.8 2374.5,786.4 2381.2,787.8 C2388.0,789.1 2389.5,789.6 2393.6,793.0 C2397.8,796.5 2401.9,799.2 2406.0,808.5 C2410.2,817.8 2414.9,834.9 2418.4,848.8 C2422.0,862.8 2424.8,878.8 2427.1,892.2 C2429.5,905.7 2431.0,909.8 2432.4,929.5 C2433.9,949.1 2434.4,981.1 2435.8,1010.1 C2437.2,1039.0 2439.2,1080.4 2440.8,1103.1 C2442.4,1125.8 2444.1,1136.4 2445.4,1146.5 C2446.8,1156.6 2447.4,1160.2 2448.8,1163.6 C2450.3,1166.7 2453.2,1166.1 2454.1,1166.7 L2545.1,1166.7 C2546.0,1165.9 2549.4,1165.4 2550.7,1162.0 C2552.0,1158.7 2552.3,1161.5 2553.2,1146.5 C2554.1,1131.5 2555.0,1100.0 2556.0,1072.1 C2557.0,1044.2 2557.9,1004.9 2559.1,979.1 C2560.3,953.2 2561.0,936.7 2563.1,917.1 C2565.2,897.4 2568.3,877.8 2571.5,861.2 C2574.7,844.7 2577.9,829.2 2582.3,817.8 C2586.7,806.5 2592.7,798.6 2597.8,793.0 C2603.0,787.5 2606.1,785.5 2613.3,784.7 C2620.6,783.8 2634.5,786.4 2641.2,787.8 C2648.0,789.1 2649.5,789.6 2653.6,793.0 C2657.8,796.5 2661.9,799.2 2666.0,808.5 C2670.2,817.8 2674.9,834.9 2678.4,848.8 C2682.0,862.8 2684.8,878.8 2687.1,892.2 C2689.5,905.7 2691.0,909.8 2692.4,929.5 C2693.9,949.1 2694.4,981.1 2695.8,1010.1 C2697.2,1039.0 2699.2,1080.4 2700.8,1103.1 C2702.4,1125.8 2704.1,1136.4 2705.4,1146.5 C2706.8,1156.6 2707.4,1160.2 2708.8,1163.6 C2710.3,1166.7 2713.2,1166.1 2714.1,1166.7 L2745,1166.7" stroke="#1448e8" stroke-width="2.8" fill="none"/>
<path d="M1966.8,1121.7 L1970.9,1140.3 L1975.5,1109.3 L1979.2,1151.2 L1983.3,1106.2 L1987.9,1148.1 L1991.0,1141.9 L1995.7,1155.8 L1999.7,1112.4 L2004.0,1152.7 L2008.1,1126.4 L2011.2,1151.2 L2015.8,1118.6 L2019.5,1155.8 L2024.2,1096.9 L2028.2,1109.3 L2031.9,1101.6 L2036.0,1118.6 L2040.6,1100.0 L2045.3,1087.6 L2048.4,1079.8 L2053.0,1104.7 L2057.1,1076.7 L2060.8,1089.1 L2064.8,1076.7 L2068.5,1106.2 L2072.6,1056.6 L2076.3,1069.0 L2080.9,1014.7 L2085.0,1053.5 L2088.7,1005.4 L2093.3,1061.2 L2097.1,1005.4 L2101.1,1036.4 L2105.1,1005.4 L2108.8,1065.9 L2113.5,993.0 L2117.5,1031.8 L2121.2,994.6 L2125.9,1062.8 L2129.6,985.3 L2133.6,1059.7 L2137.7,988.4 L2142.0,1028.7 L2146.0,940.3 L2149.8,993.0 L2153.8,976.0 L2157.8,1045.7 L2161.6,1013.2 L2165.6,1112.4 L2169.3,1100.0 L2173.3,1121.7 L2177.1,1062.8 L2181.1,1096.9 L2185.7,1065.9 L2189.5,1118.6 L2194.1,1078.3 L2198.1,1127.9 L2201.9,1100.0 L2205.9,1137.2 L2209.6,1109.3 L2213.6,1131.0 L2218.0,1106.2 L2220.0,1109.3 L2223.7,1129.5 L2227.8,1103.1 L2230.9,1149.6 L2234.9,1101.6 L2238.6,1151.2 L2243.3,1106.2 L2247.0,1137.2 L2251.0,1093.8 L2254.7,1138.8 L2258.8,1112.4 L2262.8,1143.4 L2266.5,1121.7 L2271.2,1146.5 L2275.2,1117.1 L2278.9,1140.3 L2283.6,1106.2 L2287.6,1118.6 L2291.3,1070.5 L2295.3,1089.1 L2300.0,1065.9 L2303.7,1090.7 L2307.8,1044.2 L2312.1,1079.8 L2316.1,1022.5 L2319.8,1069.0 L2323.9,927.9 L2327.9,989.9 L2331.6,938.8 L2336.3,980.6 L2340.3,882.9 L2344.0,1036.4 L2348.1,1016.3 L2352.4,1069.0 L2356.4,991.5 L2360.5,1028.7 L2364.2,938.8 L2368.2,968.2 L2371.9,851.9 L2376.6,873.6 L2380.6,845.7 L2384.3,867.4 L2389.0,836.4 L2392.7,879.8 L2396.7,844.2 L2400.8,935.7 L2404.5,914.0 L2408.5,1112.4 L2412.9,1075.2 L2416.9,1110.9 L2421.6,1069.0 L2425.6,1086.0 L2429.3,1069.0 L2433.3,1081.4 L2437.1,1061.2 L2441.1,1100.0 L2445.7,1062.8 L2449.5,1157.4 L2454.1,1090.7 L2458.1,1098.4 L2461.9,1087.6 L2465.9,1118.6 L2469.6,1081.4 L2473.6,1137.2 L2478.0,1092.2 L2480.0,1103.1 L2484.7,1076.7 L2489.3,1112.4 L2494.0,1078.3 L2498.0,1134.1 L2502.3,1076.7 L2506.4,1109.3 L2510.4,1090.7 L2514.1,1109.3 L2518.1,1078.3 L2522.5,1127.9 L2526.5,1092.2 L2530.2,1157.4 L2534.3,1137.2 L2538.3,1149.6 L2542.9,1117.1 L2546.7,1134.1 L2551.3,1104.7 L2556.0,1072.1 L2560.0,1062.8 L2563.1,1087.6 L2566.8,1050.4 L2570.9,1062.8 L2574.6,1024.0 L2578.6,1034.9 L2582.9,997.7 L2587.0,1013.2 L2591.6,951.2 L2595.3,993.0 L2599.4,926.4 L2603.4,960.5 L2607.1,861.2 L2611.8,879.8 L2615.8,827.1 L2620.2,848.8 L2624.2,820.9 L2628.2,842.6 L2631.9,805.4 L2635.7,882.9 L2639.7,876.7 L2643.7,906.2 L2647.4,882.9 L2651.5,926.4 L2656.1,873.6 L2660.5,912.4 L2664.5,879.8 L2669.1,901.6 L2673.2,882.9 L2677.8,972.9 L2681.6,960.5 L2685.6,1005.4 L2689.3,982.2 L2693.3,1045.7 L2697.1,1028.7 L2700.8,1072.1 L2704.8,1059.7 L2708.8,1087.6 L2712.6,1067.4 L2716.6,1106.2 L2721.2,1095.3 L2725.0,1120.2 L2729.0,1096.9 L2732.7,1118.6 L2737.4,1082.9 L2741.4,1126.4 L2745.7,1093.8" stroke="#ff7518" stroke-width="2.6" fill="none" stroke-linejoin="round"/>
<line x1="1863" y1="1244.5" x2="1898" y2="1244.5" stroke="#0a4af5" stroke-width="2.6" stroke-linecap="round"/>
<circle cx="1880.5" cy="1244.5" r="8.2" fill="#0a4af5"/>
<text x="1906.9" y="1250.6" font-size="18" fill="#707078" font-weight="400" text-anchor="start" textLength="225.0" lengthAdjust="spacingAndGlyphs" stroke="#707078" stroke-width="0.55">POA irradiance final (5m)</text>
<line x1="2232.3" y1="1244.5" x2="2267.3" y2="1244.5" stroke="#5bbfff" stroke-width="2.6" stroke-linecap="round"/>
<circle cx="2249.8" cy="1244.5" r="8.2" fill="#5bbfff"/>
<text x="2276.3" y="1250.6" font-size="18" fill="#707078" font-weight="400" text-anchor="start" textLength="217.5" lengthAdjust="spacingAndGlyphs" stroke="#707078" stroke-width="0.55">GHI irradiance final (5m)</text>
<line x1="2607" y1="1244.5" x2="2642" y2="1244.5" stroke="#ff6d10" stroke-width="2.6" stroke-linecap="round"/>
<circle cx="2624.5" cy="1244.5" r="8.2" fill="#ff6d10"/>
<text x="2651.5" y="1250.6" font-size="18" fill="#707078" font-weight="400" text-anchor="start" textLength="196.4" lengthAdjust="spacingAndGlyphs" stroke="#707078" stroke-width="0.55">Wind speed final (5m)</text>
<path d="M2884.6,1234.6 L2884.6,1254.4 L2871,1244.5 Z" fill="#d2d2d6"/>
<text x="2913.0" y="1250.6" font-size="18" fill="#707078" font-weight="400" text-anchor="middle" textLength="28.0" lengthAdjust="spacingAndGlyphs" stroke="#707078" stroke-width="0.3">1/3</text>
<path d="M2938.2,1234.6 L2938.2,1254.4 L2952.4,1244.5 Z" fill="#8a8a92"/>
<defs>
<linearGradient id="hg" x1="0" y1="0" x2="1" y2="0"><stop offset="0" stop-color="#010522"/><stop offset="0.058" stop-color="#04125a"/><stop offset="0.103" stop-color="#0a30b8"/><stop offset="0.155" stop-color="#0a4cff"/><stop offset="0.236" stop-color="#2277ff"/><stop offset="0.325" stop-color="#3595fa"/><stop offset="0.415" stop-color="#45acfb"/><stop offset="0.495" stop-color="#55c0ff"/><stop offset="0.56" stop-color="#4ab4fa"/><stop offset="0.68" stop-color="#3590ee"/><stop offset="0.8" stop-color="#2a6ee0"/><stop offset="0.885" stop-color="#0a40e8"/><stop offset="0.935" stop-color="#061a70"/><stop offset="1" stop-color="#010520"/></linearGradient>
<linearGradient id="hg3" x1="0" y1="0" x2="1" y2="0"><stop offset="0" stop-color="#010522"/><stop offset="0.034" stop-color="#03186a"/><stop offset="0.082" stop-color="#0838a8"/><stop offset="0.123" stop-color="#0a44d0"/><stop offset="0.135" stop-color="#0a4cff"/><stop offset="0.236" stop-color="#2277ff"/><stop offset="0.325" stop-color="#3595fa"/><stop offset="0.415" stop-color="#45acfb"/><stop offset="0.495" stop-color="#55c0ff"/><stop offset="0.56" stop-color="#4ab4fa"/><stop offset="0.68" stop-color="#3590ee"/><stop offset="0.8" stop-color="#2a6ee0"/><stop offset="0.885" stop-color="#0a40e8"/><stop offset="0.935" stop-color="#061a70"/><stop offset="1" stop-color="#010520"/></linearGradient>
<filter id="bl" x="-5%" y="-50%" width="110%" height="200%"><feGaussianBlur stdDeviation="0 1.3"/></filter>
<filter id="blx" x="-50%" y="-5%" width="200%" height="110%"><feGaussianBlur stdDeviation="1.2 0"/></filter>
<clipPath id="hc0"><rect x="763.3" y="1359.4" width="415.2" height="444.5"/></clipPath>
<clipPath id="hc1"><rect x="1477.6" y="1359.4" width="415.2" height="444.5"/></clipPath>
<clipPath id="hc2"><rect x="2191.1" y="1359.4" width="415.2" height="444.5"/></clipPath>
</defs>
<g clip-path="url(#hc0)">
<rect x="763.3" y="1359.4" width="415.2" height="444.5" fill="url(#hg)"/>
<rect x="972.4" y="1359.4" width="13" height="444.5" fill="#52bbfc"/>
<rect x="1033.7" y="1359.4" width="9.5" height="444.5" fill="#3a92ee"/>
<rect x="1049.3" y="1359.4" width="8.1" height="444.5" fill="#3a90f0"/>
<rect x="1058.9" y="1359.4" width="4" height="444.5" fill="#2f88ff"/>
<g filter="url(#blx)">
<rect x="989.6" y="1349.4" width="40.19999999999993" height="464.5" fill="#0b1634"/>
<rect x="1043.6" y="1349.4" width="5.400000000000091" height="464.5" fill="#10285e"/>
</g>
<rect x="970.1" y="1359.4" width="2.3" height="444.5" fill="#1b3554"/>
<rect x="1057.4" y="1359.4" width="1.5" height="444.5" fill="#1a4a90"/>
<rect x="1062.9" y="1359.4" width="1.2" height="444.5" fill="#0a2a60"/>
</g>
<g clip-path="url(#hc1)">
<rect x="1477.6" y="1359.4" width="415.2" height="444.5" fill="url(#hg)"/>
<g filter="url(#bl)">
<rect x="1477.6" y="1390.7" width="415.2" height="16.0" fill="#04061c" opacity="0.9"/>
<rect x="1477.6" y="1431.3" width="415.2" height="5.7" fill="#04061c" opacity="0.9"/>
<rect x="1477.6" y="1450.2" width="415.2" height="8.5" fill="#04061c" opacity="0.9"/>
<rect x="1477.6" y="1474.8" width="415.2" height="5.7" fill="#04061c" opacity="0.9"/>
<rect x="1477.6" y="1486.0" width="415.2" height="10.5" fill="#04061c" opacity="0.9"/>
<rect x="1477.6" y="1512.6" width="415.2" height="7.4" fill="#04061c" opacity="0.9"/>
<rect x="1477.6" y="1525.8" width="415.2" height="6.7" fill="#04061c" opacity="0.9"/>
<rect x="1477.6" y="1541.0" width="415.2" height="5.6" fill="#04061c" opacity="0.9"/>
<rect x="1477.6" y="1557.0" width="415.2" height="7.6" fill="#04061c" opacity="0.9"/>
<rect x="1477.6" y="1577.6" width="415.2" height="6.6" fill="#04061c" opacity="0.9"/>
<rect x="1477.6" y="1593.6" width="415.2" height="5.7" fill="#04061c" opacity="0.9"/>
<rect x="1477.6" y="1605.0" width="415.2" height="5.7" fill="#04061c" opacity="0.9"/>
<rect x="1477.6" y="1615.4" width="415.2" height="5.6" fill="#04061c" opacity="0.9"/>
<rect x="1477.6" y="1625.8" width="415.2" height="6.6" fill="#04061c" opacity="0.9"/>
<rect x="1477.6" y="1639.0" width="415.2" height="6.6" fill="#04061c" opacity="0.9"/>
<rect x="1477.6" y="1665.5" width="415.2" height="5.7" fill="#04061c" opacity="0.9"/>
<rect x="1477.6" y="1674.0" width="415.2" height="5.7" fill="#04061c" opacity="0.9"/>
<rect x="1477.6" y="1691.0" width="415.2" height="6.7" fill="#04061c" opacity="0.9"/>
<rect x="1477.6" y="1706.2" width="415.2" height="7.5" fill="#04061c" opacity="0.9"/>
<rect x="1477.6" y="1728.9" width="415.2" height="6.6" fill="#04061c" opacity="0.9"/>
<rect x="1477.6" y="1742.1" width="415.2" height="9.5" fill="#04061c" opacity="0.9"/>
<rect x="1477.6" y="1785.6" width="415.2" height="8.5" fill="#04061c" opacity="0.9"/>
<rect x="1477.6" y="1797.9" width="415.2" height="8.1" fill="#04061c" opacity="0.9"/>
</g>
</g>
<g clip-path="url(#hc2)">
<rect x="2191.1" y="1359.4" width="415.2" height="444.5" fill="url(#hg3)"/>
<g filter="url(#bl)">
<rect x="2191.1" y="1390.7" width="415.2" height="16.0" fill="#04061c" opacity="0.9"/>
<rect x="2191.1" y="1431.3" width="415.2" height="5.7" fill="#04061c" opacity="0.9"/>
<rect x="2191.1" y="1450.2" width="415.2" height="8.5" fill="#04061c" opacity="0.9"/>
<rect x="2191.1" y="1474.8" width="415.2" height="5.7" fill="#04061c" opacity="0.9"/>
<rect x="2191.1" y="1486.0" width="415.2" height="10.5" fill="#04061c" opacity="0.9"/>
<rect x="2191.1" y="1512.6" width="415.2" height="7.4" fill="#04061c" opacity="0.9"/>
<rect x="2191.1" y="1525.8" width="415.2" height="6.7" fill="#04061c" opacity="0.9"/>
<rect x="2191.1" y="1541.0" width="415.2" height="5.6" fill="#04061c" opacity="0.9"/>
<rect x="2191.1" y="1557.0" width="415.2" height="7.6" fill="#04061c" opacity="0.9"/>
<rect x="2191.1" y="1577.6" width="415.2" height="6.6" fill="#04061c" opacity="0.9"/>
<rect x="2191.1" y="1593.6" width="415.2" height="5.7" fill="#04061c" opacity="0.9"/>
<rect x="2191.1" y="1605.0" width="415.2" height="5.7" fill="#04061c" opacity="0.9"/>
<rect x="2191.1" y="1615.4" width="415.2" height="5.6" fill="#04061c" opacity="0.9"/>
<rect x="2191.1" y="1625.8" width="415.2" height="6.6" fill="#04061c" opacity="0.9"/>
<rect x="2191.1" y="1639.0" width="415.2" height="6.6" fill="#04061c" opacity="0.9"/>
<rect x="2191.1" y="1665.5" width="415.2" height="5.7" fill="#04061c" opacity="0.9"/>
<rect x="2191.1" y="1674.0" width="415.2" height="5.7" fill="#04061c" opacity="0.9"/>
<rect x="2191.1" y="1691.0" width="415.2" height="6.7" fill="#04061c" opacity="0.9"/>
<rect x="2191.1" y="1706.2" width="415.2" height="7.5" fill="#04061c" opacity="0.9"/>
<rect x="2191.1" y="1728.9" width="415.2" height="6.6" fill="#04061c" opacity="0.9"/>
<rect x="2191.1" y="1742.1" width="415.2" height="9.5" fill="#04061c" opacity="0.9"/>
<rect x="2191.1" y="1785.6" width="415.2" height="8.5" fill="#04061c" opacity="0.9"/>
<rect x="2191.1" y="1797.9" width="415.2" height="8.1" fill="#04061c" opacity="0.9"/>
</g>
<rect x="2242.9" y="1359.4" width="6.2" height="444.5" fill="#050a20" opacity="0.75"/>
</g>
<rect x="762.3" y="1411" width="417.2" height="9" fill="#fefefe"/>
<rect x="762.3" y="1465.6" width="417.2" height="8.9" fill="#fefefe"/>
<rect x="1476.6" y="1411" width="417.2" height="9" fill="#fefefe"/>
<rect x="1476.6" y="1465.6" width="417.2" height="8.9" fill="#fefefe"/>
<rect x="2190.1" y="1411" width="417.2" height="9" fill="#fefefe"/>
<rect x="2190.1" y="1465.6" width="417.2" height="8.9" fill="#fefefe"/>
<text x="321.0" y="1379.9" font-size="10.7" fill="#c4c4c4" font-weight="400" text-anchor="start" textLength="65.2" lengthAdjust="spacingAndGlyphs" >PCS-50_INV02</text>
<text x="395.7" y="1379.9" font-size="10.7" fill="#c4c4c4" font-weight="400" text-anchor="middle" >-</text>
<text x="406.0" y="1379.9" font-size="10.7" fill="#c4c4c4" font-weight="400" text-anchor="start" textLength="50.0" lengthAdjust="spacingAndGlyphs" >1725.00kW</text>
<text x="465.8" y="1379.9" font-size="10.7" fill="#c4c4c4" font-weight="400" text-anchor="middle" >-</text>
<text x="475.7" y="1379.9" font-size="10.7" fill="#c4c4c4" font-weight="400" text-anchor="start" textLength="50.5" lengthAdjust="spacingAndGlyphs" >1250.00kW</text>
<text x="321.0" y="1400.8" font-size="10.7" fill="#c4c4c4" font-weight="400" text-anchor="start" textLength="65.2" lengthAdjust="spacingAndGlyphs" >PCS-48_INV01</text>
<text x="395.7" y="1400.8" font-size="10.7" fill="#c4c4c4" font-weight="400" text-anchor="middle" >-</text>
<text x="406.0" y="1400.8" font-size="10.7" fill="#c4c4c4" font-weight="400" text-anchor="start" textLength="50.0" lengthAdjust="spacingAndGlyphs" >1656.00kW</text>
<text x="465.8" y="1400.8" font-size="10.7" fill="#c4c4c4" font-weight="400" text-anchor="middle" >-</text>
<text x="475.7" y="1400.8" font-size="10.7" fill="#c4c4c4" font-weight="400" text-anchor="start" textLength="50.5" lengthAdjust="spacingAndGlyphs" >1250.00kW</text>
<text x="321.0" y="1421.6" font-size="10.7" fill="#c4c4c4" font-weight="400" text-anchor="start" textLength="65.2" lengthAdjust="spacingAndGlyphs" >PCS-45_INV01</text>
<text x="395.7" y="1421.6" font-size="10.7" fill="#c4c4c4" font-weight="400" text-anchor="middle" >-</text>
<text x="406.0" y="1421.6" font-size="10.7" fill="#c4c4c4" font-weight="400" text-anchor="start" textLength="50.0" lengthAdjust="spacingAndGlyphs" >1656.00kW</text>
<text x="465.8" y="1421.6" font-size="10.7" fill="#c4c4c4" font-weight="400" text-anchor="middle" >-</text>
<text x="475.7" y="1421.6" font-size="10.7" fill="#c4c4c4" font-weight="400" text-anchor="start" textLength="50.5" lengthAdjust="spacingAndGlyphs" >1250.00kW</text>
<text x="321.0" y="1442.5" font-size="10.7" fill="#c4c4c4" font-weight="400" text-anchor="start" textLength="65.2" lengthAdjust="spacingAndGlyphs" >PCS-43_INV01</text>
<text x="395.7" y="1442.5" font-size="10.7" fill="#c4c4c4" font-weight="400" text-anchor="middle" >-</text>
<text x="406.0" y="1442.5" font-size="10.7" fill="#c4c4c4" font-weight="400" text-anchor="start" textLength="50.0" lengthAdjust="spacingAndGlyphs" >1600.00kW</text>
<text x="465.8" y="1442.5" font-size="10.7" fill="#c4c4c4" font-weight="400" text-anchor="middle" >-</text>
<text x="475.7" y="1442.5" font-size="10.7" fill="#c4c4c4" font-weight="400" text-anchor="start" textLength="50.5" lengthAdjust="spacingAndGlyphs" >1250.00kW</text>
<text x="321.0" y="1463.3" font-size="10.7" fill="#c4c4c4" font-weight="400" text-anchor="start" textLength="65.2" lengthAdjust="spacingAndGlyphs" >PCS-40_INV02</text>
<text x="395.7" y="1463.3" font-size="10.7" fill="#c4c4c4" font-weight="400" text-anchor="middle" >-</text>
<text x="406.0" y="1463.3" font-size="10.7" fill="#c4c4c4" font-weight="400" text-anchor="start" textLength="50.0" lengthAdjust="spacingAndGlyphs" >1725.00kW</text>
<text x="465.8" y="1463.3" font-size="10.7" fill="#c4c4c4" font-weight="400" text-anchor="middle" >-</text>
<text x="475.7" y="1463.3" font-size="10.7" fill="#c4c4c4" font-weight="400" text-anchor="start" textLength="50.5" lengthAdjust="spacingAndGlyphs" >1250.00kW</text>
<text x="321.0" y="1484.2" font-size="10.7" fill="#c4c4c4" font-weight="400" text-anchor="start" textLength="65.2" lengthAdjust="spacingAndGlyphs" >PCS-38_INV01</text>
<text x="395.7" y="1484.2" font-size="10.7" fill="#c4c4c4" font-weight="400" text-anchor="middle" >-</text>
<text x="406.0" y="1484.2" font-size="10.7" fill="#c4c4c4" font-weight="400" text-anchor="start" textLength="50.0" lengthAdjust="spacingAndGlyphs" >1656.00kW</text>
<text x="465.8" y="1484.2" font-size="10.7" fill="#c4c4c4" font-weight="400" text-anchor="middle" >-</text>
<text x="475.7" y="1484.2" font-size="10.7" fill="#c4c4c4" font-weight="400" text-anchor="start" textLength="50.5" lengthAdjust="spacingAndGlyphs" >1250.00kW</text>
<text x="321.0" y="1505.0" font-size="10.7" fill="#c4c4c4" font-weight="400" text-anchor="start" textLength="65.2" lengthAdjust="spacingAndGlyphs" >PCS-35_INV01</text>
<text x="395.7" y="1505.0" font-size="10.7" fill="#c4c4c4" font-weight="400" text-anchor="middle" >-</text>
<text x="406.0" y="1505.0" font-size="10.7" fill="#c4c4c4" font-weight="400" text-anchor="start" textLength="50.0" lengthAdjust="spacingAndGlyphs" >1656.00kW</text>
<text x="465.8" y="1505.0" font-size="10.7" fill="#c4c4c4" font-weight="400" text-anchor="middle" >-</text>
<text x="475.7" y="1505.0" font-size="10.7" fill="#c4c4c4" font-weight="400" text-anchor="start" textLength="50.5" lengthAdjust="spacingAndGlyphs" >1250.00kW</text>
<text x="321.0" y="1525.9" font-size="10.7" fill="#c4c4c4" font-weight="400" text-anchor="start" textLength="65.2" lengthAdjust="spacingAndGlyphs" >PCS-33_INV01</text>
<text x="395.7" y="1525.9" font-size="10.7" fill="#c4c4c4" font-weight="400" text-anchor="middle" >-</text>
<text x="406.0" y="1525.9" font-size="10.7" fill="#c4c4c4" font-weight="400" text-anchor="start" textLength="50.0" lengthAdjust="spacingAndGlyphs" >1600.00kW</text>
<text x="465.8" y="1525.9" font-size="10.7" fill="#c4c4c4" font-weight="400" text-anchor="middle" >-</text>
<text x="475.7" y="1525.9" font-size="10.7" fill="#c4c4c4" font-weight="400" text-anchor="start" textLength="50.5" lengthAdjust="spacingAndGlyphs" >1250.00kW</text>
<text x="321.0" y="1546.7" font-size="10.7" fill="#c4c4c4" font-weight="400" text-anchor="start" textLength="65.2" lengthAdjust="spacingAndGlyphs" >PCS-30_INV02</text>
<text x="395.7" y="1546.7" font-size="10.7" fill="#c4c4c4" font-weight="400" text-anchor="middle" >-</text>
<text x="406.0" y="1546.7" font-size="10.7" fill="#c4c4c4" font-weight="400" text-anchor="start" textLength="50.0" lengthAdjust="spacingAndGlyphs" >1725.00kW</text>
<text x="465.8" y="1546.7" font-size="10.7" fill="#c4c4c4" font-weight="400" text-anchor="middle" >-</text>
<text x="475.7" y="1546.7" font-size="10.7" fill="#c4c4c4" font-weight="400" text-anchor="start" textLength="50.5" lengthAdjust="spacingAndGlyphs" >1250.00kW</text>
<text x="321.0" y="1567.6" font-size="10.7" fill="#c4c4c4" font-weight="400" text-anchor="start" textLength="65.2" lengthAdjust="spacingAndGlyphs" >PCS-28_INV01</text>
<text x="395.7" y="1567.6" font-size="10.7" fill="#c4c4c4" font-weight="400" text-anchor="middle" >-</text>
<text x="406.0" y="1567.6" font-size="10.7" fill="#c4c4c4" font-weight="400" text-anchor="start" textLength="50.0" lengthAdjust="spacingAndGlyphs" >1656.00kW</text>
<text x="465.8" y="1567.6" font-size="10.7" fill="#c4c4c4" font-weight="400" text-anchor="middle" >-</text>
<text x="475.7" y="1567.6" font-size="10.7" fill="#c4c4c4" font-weight="400" text-anchor="start" textLength="50.5" lengthAdjust="spacingAndGlyphs" >1250.00kW</text>
<text x="321.0" y="1588.4" font-size="10.7" fill="#c4c4c4" font-weight="400" text-anchor="start" textLength="65.2" lengthAdjust="spacingAndGlyphs" >PCS-25_INV01</text>
<text x="395.7" y="1588.4" font-size="10.7" fill="#c4c4c4" font-weight="400" text-anchor="middle" >-</text>
<text x="406.0" y="1588.4" font-size="10.7" fill="#c4c4c4" font-weight="400" text-anchor="start" textLength="50.0" lengthAdjust="spacingAndGlyphs" >1656.00kW</text>
<text x="465.8" y="1588.4" font-size="10.7" fill="#c4c4c4" font-weight="400" text-anchor="middle" >-</text>
<text x="475.7" y="1588.4" font-size="10.7" fill="#c4c4c4" font-weight="400" text-anchor="start" textLength="50.5" lengthAdjust="spacingAndGlyphs" >1250.00kW</text>
<text x="321.0" y="1609.2" font-size="10.7" fill="#c4c4c4" font-weight="400" text-anchor="start" textLength="65.2" lengthAdjust="spacingAndGlyphs" >PCS-23_INV01</text>
<text x="395.7" y="1609.2" font-size="10.7" fill="#c4c4c4" font-weight="400" text-anchor="middle" >-</text>
<text x="406.0" y="1609.2" font-size="10.7" fill="#c4c4c4" font-weight="400" text-anchor="start" textLength="50.0" lengthAdjust="spacingAndGlyphs" >1600.00kW</text>
<text x="465.8" y="1609.2" font-size="10.7" fill="#c4c4c4" font-weight="400" text-anchor="middle" >-</text>
<text x="475.7" y="1609.2" font-size="10.7" fill="#c4c4c4" font-weight="400" text-anchor="start" textLength="50.5" lengthAdjust="spacingAndGlyphs" >1250.00kW</text>
<text x="321.0" y="1630.1" font-size="10.7" fill="#c4c4c4" font-weight="400" text-anchor="start" textLength="65.2" lengthAdjust="spacingAndGlyphs" >PCS-20_INV02</text>
<text x="395.7" y="1630.1" font-size="10.7" fill="#c4c4c4" font-weight="400" text-anchor="middle" >-</text>
<text x="406.0" y="1630.1" font-size="10.7" fill="#c4c4c4" font-weight="400" text-anchor="start" textLength="50.0" lengthAdjust="spacingAndGlyphs" >1725.00kW</text>
<text x="465.8" y="1630.1" font-size="10.7" fill="#c4c4c4" font-weight="400" text-anchor="middle" >-</text>
<text x="475.7" y="1630.1" font-size="10.7" fill="#c4c4c4" font-weight="400" text-anchor="start" textLength="50.5" lengthAdjust="spacingAndGlyphs" >1250.00kW</text>
<text x="321.0" y="1651.0" font-size="10.7" fill="#c4c4c4" font-weight="400" text-anchor="start" textLength="65.2" lengthAdjust="spacingAndGlyphs" >PCS-18_INV01</text>
<text x="395.7" y="1651.0" font-size="10.7" fill="#c4c4c4" font-weight="400" text-anchor="middle" >-</text>
<text x="406.0" y="1651.0" font-size="10.7" fill="#c4c4c4" font-weight="400" text-anchor="start" textLength="50.0" lengthAdjust="spacingAndGlyphs" >1656.00kW</text>
<text x="465.8" y="1651.0" font-size="10.7" fill="#c4c4c4" font-weight="400" text-anchor="middle" >-</text>
<text x="475.7" y="1651.0" font-size="10.7" fill="#c4c4c4" font-weight="400" text-anchor="start" textLength="50.5" lengthAdjust="spacingAndGlyphs" >1250.00kW</text>
<text x="321.0" y="1671.8" font-size="10.7" fill="#c4c4c4" font-weight="400" text-anchor="start" textLength="65.2" lengthAdjust="spacingAndGlyphs" >PCS-15_INV01</text>
<text x="395.7" y="1671.8" font-size="10.7" fill="#c4c4c4" font-weight="400" text-anchor="middle" >-</text>
<text x="406.0" y="1671.8" font-size="10.7" fill="#c4c4c4" font-weight="400" text-anchor="start" textLength="50.0" lengthAdjust="spacingAndGlyphs" >1656.00kW</text>
<text x="465.8" y="1671.8" font-size="10.7" fill="#c4c4c4" font-weight="400" text-anchor="middle" >-</text>
<text x="475.7" y="1671.8" font-size="10.7" fill="#c4c4c4" font-weight="400" text-anchor="start" textLength="50.5" lengthAdjust="spacingAndGlyphs" >1250.00kW</text>
<text x="321.0" y="1692.7" font-size="10.7" fill="#c4c4c4" font-weight="400" text-anchor="start" textLength="65.2" lengthAdjust="spacingAndGlyphs" >PCS-13_INV01</text>
<text x="395.7" y="1692.7" font-size="10.7" fill="#c4c4c4" font-weight="400" text-anchor="middle" >-</text>
<text x="406.0" y="1692.7" font-size="10.7" fill="#c4c4c4" font-weight="400" text-anchor="start" textLength="50.0" lengthAdjust="spacingAndGlyphs" >1600.00kW</text>
<text x="465.8" y="1692.7" font-size="10.7" fill="#c4c4c4" font-weight="400" text-anchor="middle" >-</text>
<text x="475.7" y="1692.7" font-size="10.7" fill="#c4c4c4" font-weight="400" text-anchor="start" textLength="50.5" lengthAdjust="spacingAndGlyphs" >1250.00kW</text>
<text x="321.0" y="1713.5" font-size="10.7" fill="#c4c4c4" font-weight="400" text-anchor="start" textLength="65.2" lengthAdjust="spacingAndGlyphs" >PCS-10_INV02</text>
<text x="395.7" y="1713.5" font-size="10.7" fill="#c4c4c4" font-weight="400" text-anchor="middle" >-</text>
<text x="406.0" y="1713.5" font-size="10.7" fill="#c4c4c4" font-weight="400" text-anchor="start" textLength="50.0" lengthAdjust="spacingAndGlyphs" >1725.00kW</text>
<text x="465.8" y="1713.5" font-size="10.7" fill="#c4c4c4" font-weight="400" text-anchor="middle" >-</text>
<text x="475.7" y="1713.5" font-size="10.7" fill="#c4c4c4" font-weight="400" text-anchor="start" textLength="50.5" lengthAdjust="spacingAndGlyphs" >1250.00kW</text>
<text x="321.0" y="1734.4" font-size="10.7" fill="#c4c4c4" font-weight="400" text-anchor="start" textLength="65.2" lengthAdjust="spacingAndGlyphs" >PCS-08_INV01</text>
<text x="395.7" y="1734.4" font-size="10.7" fill="#c4c4c4" font-weight="400" text-anchor="middle" >-</text>
<text x="406.0" y="1734.4" font-size="10.7" fill="#c4c4c4" font-weight="400" text-anchor="start" textLength="50.0" lengthAdjust="spacingAndGlyphs" >1656.00kW</text>
<text x="465.8" y="1734.4" font-size="10.7" fill="#c4c4c4" font-weight="400" text-anchor="middle" >-</text>
<text x="475.7" y="1734.4" font-size="10.7" fill="#c4c4c4" font-weight="400" text-anchor="start" textLength="50.5" lengthAdjust="spacingAndGlyphs" >1250.00kW</text>
<text x="321.0" y="1755.2" font-size="10.7" fill="#c4c4c4" font-weight="400" text-anchor="start" textLength="65.2" lengthAdjust="spacingAndGlyphs" >PCS-05_INV01</text>
<text x="395.7" y="1755.2" font-size="10.7" fill="#c4c4c4" font-weight="400" text-anchor="middle" >-</text>
<text x="406.0" y="1755.2" font-size="10.7" fill="#c4c4c4" font-weight="400" text-anchor="start" textLength="50.0" lengthAdjust="spacingAndGlyphs" >1656.00kW</text>
<text x="465.8" y="1755.2" font-size="10.7" fill="#c4c4c4" font-weight="400" text-anchor="middle" >-</text>
<text x="475.7" y="1755.2" font-size="10.7" fill="#c4c4c4" font-weight="400" text-anchor="start" textLength="50.5" lengthAdjust="spacingAndGlyphs" >1250.00kW</text>
<text x="321.0" y="1776.1" font-size="10.7" fill="#c4c4c4" font-weight="400" text-anchor="start" textLength="65.2" lengthAdjust="spacingAndGlyphs" >PCS-03_INV01</text>
<text x="395.7" y="1776.1" font-size="10.7" fill="#c4c4c4" font-weight="400" text-anchor="middle" >-</text>
<text x="406.0" y="1776.1" font-size="10.7" fill="#c4c4c4" font-weight="400" text-anchor="start" textLength="50.0" lengthAdjust="spacingAndGlyphs" >1600.00kW</text>
<text x="465.8" y="1776.1" font-size="10.7" fill="#c4c4c4" font-weight="400" text-anchor="middle" >-</text>
<text x="475.7" y="1776.1" font-size="10.7" fill="#c4c4c4" font-weight="400" text-anchor="start" textLength="50.5" lengthAdjust="spacingAndGlyphs" >1250.00kW</text>
<text x="321.0" y="1796.9" font-size="10.7" fill="#c4c4c4" font-weight="400" text-anchor="start" textLength="65.2" lengthAdjust="spacingAndGlyphs" >PCS-00_INV01</text>
<text x="395.7" y="1796.9" font-size="10.7" fill="#c4c4c4" font-weight="400" text-anchor="middle" >-</text>
<text x="406.0" y="1796.9" font-size="10.7" fill="#c4c4c4" font-weight="400" text-anchor="start" textLength="50.0" lengthAdjust="spacingAndGlyphs" >1600.00kW</text>
<text x="465.8" y="1796.9" font-size="10.7" fill="#c4c4c4" font-weight="400" text-anchor="middle" >-</text>
<text x="475.7" y="1796.9" font-size="10.7" fill="#c4c4c4" font-weight="400" text-anchor="start" textLength="50.5" lengthAdjust="spacingAndGlyphs" >1250.00kW</text>
<g transform="translate(625.6,0) rotate(90)">
<text x="1820.2" y="0" font-size="11.3" fill="#c4c4c4" textLength="36.6" lengthAdjust="spacingAndGlyphs">6/10/24,</text>
<text x="1877.1" y="0" font-size="11.3" fill="#c4c4c4" text-anchor="middle" textLength="17.6" lengthAdjust="spacingAndGlyphs">1:55</text>
<text x="1897" y="0" font-size="11.3" fill="#c4c4c4" textLength="12.9" lengthAdjust="spacingAndGlyphs">PM</text>
</g>
<g transform="translate(638.3,0) rotate(90)">
<text x="1820.2" y="0" font-size="11.3" fill="#c4c4c4" textLength="36.6" lengthAdjust="spacingAndGlyphs">6/10/24,</text>
<text x="1877.1" y="0" font-size="11.3" fill="#c4c4c4" text-anchor="middle" textLength="17.6" lengthAdjust="spacingAndGlyphs">1:50</text>
<text x="1897" y="0" font-size="11.3" fill="#c4c4c4" textLength="12.9" lengthAdjust="spacingAndGlyphs">PM</text>
</g>
<g transform="translate(651.0,0) rotate(90)">
<text x="1820.2" y="0" font-size="11.3" fill="#c4c4c4" textLength="36.6" lengthAdjust="spacingAndGlyphs">6/10/24,</text>
<text x="1877.1" y="0" font-size="11.3" fill="#c4c4c4" text-anchor="middle" textLength="17.6" lengthAdjust="spacingAndGlyphs">1:45</text>
<text x="1897" y="0" font-size="11.3" fill="#c4c4c4" textLength="12.9" lengthAdjust="spacingAndGlyphs">PM</text>
</g>
<g transform="translate(663.8,0) rotate(90)">
<text x="1820.2" y="0" font-size="11.3" fill="#c4c4c4" textLength="36.6" lengthAdjust="spacingAndGlyphs">6/10/24,</text>
<text x="1877.1" y="0" font-size="11.3" fill="#c4c4c4" text-anchor="middle" textLength="17.6" lengthAdjust="spacingAndGlyphs">1:40</text>
<text x="1897" y="0" font-size="11.3" fill="#c4c4c4" textLength="12.9" lengthAdjust="spacingAndGlyphs">PM</text>
</g>
<g transform="translate(676.5,0) rotate(90)">
<text x="1820.2" y="0" font-size="11.3" fill="#c4c4c4" textLength="36.6" lengthAdjust="spacingAndGlyphs">6/10/24,</text>
<text x="1877.1" y="0" font-size="11.3" fill="#c4c4c4" text-anchor="middle" textLength="17.6" lengthAdjust="spacingAndGlyphs">1:35</text>
<text x="1897" y="0" font-size="11.3" fill="#c4c4c4" textLength="12.9" lengthAdjust="spacingAndGlyphs">PM</text>
</g>
<g transform="translate(689.2,0) rotate(90)">
<text x="1820.2" y="0" font-size="11.3" fill="#c4c4c4" textLength="36.6" lengthAdjust="spacingAndGlyphs">6/10/24,</text>
<text x="1877.1" y="0" font-size="11.3" fill="#c4c4c4" text-anchor="middle" textLength="17.6" lengthAdjust="spacingAndGlyphs">1:30</text>
<text x="1897" y="0" font-size="11.3" fill="#c4c4c4" textLength="12.9" lengthAdjust="spacingAndGlyphs">PM</text>
</g>
<g transform="translate(701.9,0) rotate(90)">
<text x="1820.2" y="0" font-size="11.3" fill="#c4c4c4" textLength="36.6" lengthAdjust="spacingAndGlyphs">6/10/24,</text>
<text x="1877.1" y="0" font-size="11.3" fill="#c4c4c4" text-anchor="middle" textLength="17.6" lengthAdjust="spacingAndGlyphs">1:25</text>
<text x="1897" y="0" font-size="11.3" fill="#c4c4c4" textLength="12.9" lengthAdjust="spacingAndGlyphs">PM</text>
</g>
<g transform="translate(714.6,0) rotate(90)">
<text x="1820.2" y="0" font-size="11.3" fill="#c4c4c4" textLength="36.6" lengthAdjust="spacingAndGlyphs">6/10/24,</text>
<text x="1877.1" y="0" font-size="11.3" fill="#c4c4c4" text-anchor="middle" textLength="17.6" lengthAdjust="spacingAndGlyphs">1:20</text>
<text x="1897" y="0" font-size="11.3" fill="#c4c4c4" textLength="12.9" lengthAdjust="spacingAndGlyphs">PM</text>
</g>
<g transform="translate(727.4,0) rotate(90)">
<text x="1820.2" y="0" font-size="11.3" fill="#c4c4c4" textLength="36.6" lengthAdjust="spacingAndGlyphs">6/10/24,</text>
<text x="1877.1" y="0" font-size="11.3" fill="#c4c4c4" text-anchor="middle" textLength="17.6" lengthAdjust="spacingAndGlyphs">1:15</text>
<text x="1897" y="0" font-size="11.3" fill="#c4c4c4" textLength="12.9" lengthAdjust="spacingAndGlyphs">PM</text>
</g>
<g transform="translate(740.1,0) rotate(90)">
<text x="1820.2" y="0" font-size="11.3" fill="#c4c4c4" textLength="36.6" lengthAdjust="spacingAndGlyphs">6/10/24,</text>
<text x="1877.1" y="0" font-size="11.3" fill="#c4c4c4" text-anchor="middle" textLength="17.6" lengthAdjust="spacingAndGlyphs">1:10</text>
<text x="1897" y="0" font-size="11.3" fill="#c4c4c4" textLength="12.9" lengthAdjust="spacingAndGlyphs">PM</text>
</g>
<g transform="translate(752.8,0) rotate(90)">
<text x="1820.2" y="0" font-size="11.3" fill="#c4c4c4" textLength="36.6" lengthAdjust="spacingAndGlyphs">6/10/24,</text>
<text x="1877.1" y="0" font-size="11.3" fill="#c4c4c4" text-anchor="middle" textLength="17.6" lengthAdjust="spacingAndGlyphs">1:05</text>
<text x="1897" y="0" font-size="11.3" fill="#c4c4c4" textLength="12.9" lengthAdjust="spacingAndGlyphs">PM</text>
</g>
<g transform="translate(765.5,0) rotate(90)">
<text x="1820.2" y="0" font-size="11.3" fill="#c4c4c4" textLength="36.6" lengthAdjust="spacingAndGlyphs">6/10/24,</text>
<text x="1877.1" y="0" font-size="11.3" fill="#c4c4c4" text-anchor="middle" textLength="17.6" lengthAdjust="spacingAndGlyphs">1:00</text>
<text x="1897" y="0" font-size="11.3" fill="#c4c4c4" textLength="12.9" lengthAdjust="spacingAndGlyphs">PM</text>
</g>
<g transform="translate(778.2,0) rotate(90)">
<text x="1820.2" y="0" font-size="11.3" fill="#c4c4c4" textLength="36.6" lengthAdjust="spacingAndGlyphs">6/10/24,</text>
<text x="1877.1" y="0" font-size="11.3" fill="#c4c4c4" text-anchor="middle" textLength="24.1" lengthAdjust="spacingAndGlyphs">12:55</text>
<text x="1897" y="0" font-size="11.3" fill="#c4c4c4" textLength="12.9" lengthAdjust="spacingAndGlyphs">PM</text>
</g>
<g transform="translate(791.0,0) rotate(90)">
<text x="1820.2" y="0" font-size="11.3" fill="#c4c4c4" textLength="36.6" lengthAdjust="spacingAndGlyphs">6/10/24,</text>
<text x="1877.1" y="0" font-size="11.3" fill="#c4c4c4" text-anchor="middle" textLength="24.1" lengthAdjust="spacingAndGlyphs">12:50</text>
<text x="1897" y="0" font-size="11.3" fill="#c4c4c4" textLength="12.9" lengthAdjust="spacingAndGlyphs">PM</text>
</g>
<g transform="translate(803.7,0) rotate(90)">
<text x="1820.2" y="0" font-size="11.3" fill="#c4c4c4" textLength="36.6" lengthAdjust="spacingAndGlyphs">6/10/24,</text>
<text x="1877.1" y="0" font-size="11.3" fill="#c4c4c4" text-anchor="middle" textLength="24.1" lengthAdjust="spacingAndGlyphs">12:45</text>
<text x="1897" y="0" font-size="11.3" fill="#c4c4c4" textLength="12.9" lengthAdjust="spacingAndGlyphs">PM</text>
</g>
<g transform="translate(816.4,0) rotate(90)">
<text x="1820.2" y="0" font-size="11.3" fill="#c4c4c4" textLength="36.6" lengthAdjust="spacingAndGlyphs">6/10/24,</text>
<text x="1877.1" y="0" font-size="11.3" fill="#c4c4c4" text-anchor="middle" textLength="24.1" lengthAdjust="spacingAndGlyphs">12:40</text>
<text x="1897" y="0" font-size="11.3" fill="#c4c4c4" textLength="12.9" lengthAdjust="spacingAndGlyphs">PM</text>
</g>
<g transform="translate(829.1,0) rotate(90)">
<text x="1820.2" y="0" font-size="11.3" fill="#c4c4c4" textLength="36.6" lengthAdjust="spacingAndGlyphs">6/10/24,</text>
<text x="1877.1" y="0" font-size="11.3" fill="#c4c4c4" text-anchor="middle" textLength="24.1" lengthAdjust="spacingAndGlyphs">12:35</text>
<text x="1897" y="0" font-size="11.3" fill="#c4c4c4" textLength="12.9" lengthAdjust="spacingAndGlyphs">PM</text>
</g>
<g transform="translate(841.8,0) rotate(90)">
<text x="1820.2" y="0" font-size="11.3" fill="#c4c4c4" textLength="36.6" lengthAdjust="spacingAndGlyphs">6/10/24,</text>
<text x="1877.1" y="0" font-size="11.3" fill="#c4c4c4" text-anchor="middle" textLength="24.1" lengthAdjust="spacingAndGlyphs">12:30</text>
<text x="1897" y="0" font-size="11.3" fill="#c4c4c4" textLength="12.9" lengthAdjust="spacingAndGlyphs">PM</text>
</g>
<g transform="translate(854.6,0) rotate(90)">
<text x="1820.2" y="0" font-size="11.3" fill="#c4c4c4" textLength="36.6" lengthAdjust="spacingAndGlyphs">6/10/24,</text>
<text x="1877.1" y="0" font-size="11.3" fill="#c4c4c4" text-anchor="middle" textLength="24.1" lengthAdjust="spacingAndGlyphs">12:25</text>
<text x="1897" y="0" font-size="11.3" fill="#c4c4c4" textLength="12.9" lengthAdjust="spacingAndGlyphs">PM</text>
</g>
<g transform="translate(867.3,0) rotate(90)">
<text x="1820.2" y="0" font-size="11.3" fill="#c4c4c4" textLength="36.6" lengthAdjust="spacingAndGlyphs">6/10/24,</text>
<text x="1877.1" y="0" font-size="11.3" fill="#c4c4c4" text-anchor="middle" textLength="24.1" lengthAdjust="spacingAndGlyphs">12:20</text>
<text x="1897" y="0" font-size="11.3" fill="#c4c4c4" textLength="12.9" lengthAdjust="spacingAndGlyphs">PM</text>
</g>
<g transform="translate(880.0,0) rotate(90)">
<text x="1820.2" y="0" font-size="11.3" fill="#c4c4c4" textLength="36.6" lengthAdjust="spacingAndGlyphs">6/10/24,</text>
<text x="1877.1" y="0" font-size="11.3" fill="#c4c4c4" text-anchor="middle" textLength="24.1" lengthAdjust="spacingAndGlyphs">12:15</text>
<text x="1897" y="0" font-size="11.3" fill="#c4c4c4" textLength="12.9" lengthAdjust="spacingAndGlyphs">PM</text>
</g>
<g transform="translate(892.7,0) rotate(90)">
<text x="1820.2" y="0" font-size="11.3" fill="#c4c4c4" textLength="36.6" lengthAdjust="spacingAndGlyphs">6/10/24,</text>
<text x="1877.1" y="0" font-size="11.3" fill="#c4c4c4" text-anchor="middle" textLength="24.1" lengthAdjust="spacingAndGlyphs">12:10</text>
<text x="1897" y="0" font-size="11.3" fill="#c4c4c4" textLength="12.9" lengthAdjust="spacingAndGlyphs">PM</text>
</g>
<g transform="translate(905.4,0) rotate(90)">
<text x="1820.2" y="0" font-size="11.3" fill="#c4c4c4" textLength="36.6" lengthAdjust="spacingAndGlyphs">6/10/24,</text>
<text x="1877.1" y="0" font-size="11.3" fill="#c4c4c4" text-anchor="middle" textLength="24.1" lengthAdjust="spacingAndGlyphs">12:05</text>
<text x="1897" y="0" font-size="11.3" fill="#c4c4c4" textLength="12.9" lengthAdjust="spacingAndGlyphs">PM</text>
</g>
<g transform="translate(918.2,0) rotate(90)">
<text x="1820.2" y="0" font-size="11.3" fill="#c4c4c4" textLength="36.6" lengthAdjust="spacingAndGlyphs">6/10/24,</text>
<text x="1877.1" y="0" font-size="11.3" fill="#c4c4c4" text-anchor="middle" textLength="24.1" lengthAdjust="spacingAndGlyphs">12:00</text>
<text x="1897" y="0" font-size="11.3" fill="#c4c4c4" textLength="12.9" lengthAdjust="spacingAndGlyphs">PM</text>
</g>
<g transform="translate(930.9,0) rotate(90)">
<text x="1820.2" y="0" font-size="11.3" fill="#c4c4c4" textLength="36.6" lengthAdjust="spacingAndGlyphs">6/10/24,</text>
<text x="1877.1" y="0" font-size="11.3" fill="#c4c4c4" text-anchor="middle" textLength="24.1" lengthAdjust="spacingAndGlyphs">11:55</text>
<text x="1897" y="0" font-size="11.3" fill="#c4c4c4" textLength="12.9" lengthAdjust="spacingAndGlyphs">AM</text>
</g>
<g transform="translate(943.6,0) rotate(90)">
<text x="1820.2" y="0" font-size="11.3" fill="#c4c4c4" textLength="36.6" lengthAdjust="spacingAndGlyphs">6/10/24,</text>
<text x="1877.1" y="0" font-size="11.3" fill="#c4c4c4" text-anchor="middle" textLength="24.1" lengthAdjust="spacingAndGlyphs">11:50</text>
<text x="1897" y="0" font-size="11.3" fill="#c4c4c4" textLength="12.9" lengthAdjust="spacingAndGlyphs">AM</text>
</g>
<g transform="translate(956.3,0) rotate(90)">
<text x="1820.2" y="0" font-size="11.3" fill="#c4c4c4" textLength="36.6" lengthAdjust="spacingAndGlyphs">6/10/24,</text>
<text x="1877.1" y="0" font-size="11.3" fill="#c4c4c4" text-anchor="middle" textLength="24.1" lengthAdjust="spacingAndGlyphs">11:45</text>
<text x="1897" y="0" font-size="11.3" fill="#c4c4c4" textLength="12.9" lengthAdjust="spacingAndGlyphs">AM</text>
</g>
<g transform="translate(969.0,0) rotate(90)">
<text x="1820.2" y="0" font-size="11.3" fill="#c4c4c4" textLength="36.6" lengthAdjust="spacingAndGlyphs">6/10/24,</text>
<text x="1877.1" y="0" font-size="11.3" fill="#c4c4c4" text-anchor="middle" textLength="24.1" lengthAdjust="spacingAndGlyphs">11:40</text>
<text x="1897" y="0" font-size="11.3" fill="#c4c4c4" textLength="12.9" lengthAdjust="spacingAndGlyphs">AM</text>
</g>
<g transform="translate(981.8,0) rotate(90)">
<text x="1820.2" y="0" font-size="11.3" fill="#c4c4c4" textLength="36.6" lengthAdjust="spacingAndGlyphs">6/10/24,</text>
<text x="1877.1" y="0" font-size="11.3" fill="#c4c4c4" text-anchor="middle" textLength="24.1" lengthAdjust="spacingAndGlyphs">11:35</text>
<text x="1897" y="0" font-size="11.3" fill="#c4c4c4" textLength="12.9" lengthAdjust="spacingAndGlyphs">AM</text>
</g>
<g transform="translate(994.5,0) rotate(90)">
<text x="1820.2" y="0" font-size="11.3" fill="#c4c4c4" textLength="36.6" lengthAdjust="spacingAndGlyphs">6/10/24,</text>
<text x="1877.1" y="0" font-size="11.3" fill="#c4c4c4" text-anchor="middle" textLength="24.1" lengthAdjust="spacingAndGlyphs">11:30</text>
<text x="1897" y="0" font-size="11.3" fill="#c4c4c4" textLength="12.9" lengthAdjust="spacingAndGlyphs">AM</text>
</g>
<g transform="translate(1007.2,0) rotate(90)">
<text x="1820.2" y="0" font-size="11.3" fill="#c4c4c4" textLength="36.6" lengthAdjust="spacingAndGlyphs">6/10/24,</text>
<text x="1877.1" y="0" font-size="11.3" fill="#c4c4c4" text-anchor="middle" textLength="24.1" lengthAdjust="spacingAndGlyphs">11:25</text>
<text x="1897" y="0" font-size="11.3" fill="#c4c4c4" textLength="12.9" lengthAdjust="spacingAndGlyphs">AM</text>
</g>
<g transform="translate(1019.9,0) rotate(90)">
<text x="1820.2" y="0" font-size="11.3" fill="#c4c4c4" textLength="36.6" lengthAdjust="spacingAndGlyphs">6/10/24,</text>
<text x="1877.1" y="0" font-size="11.3" fill="#c4c4c4" text-anchor="middle" textLength="24.1" lengthAdjust="spacingAndGlyphs">11:20</text>
<text x="1897" y="0" font-size="11.3" fill="#c4c4c4" textLength="12.9" lengthAdjust="spacingAndGlyphs">AM</text>
</g>
<g transform="translate(1032.6,0) rotate(90)">
<text x="1820.2" y="0" font-size="11.3" fill="#c4c4c4" textLength="36.6" lengthAdjust="spacingAndGlyphs">6/10/24,</text>
<text x="1877.1" y="0" font-size="11.3" fill="#c4c4c4" text-anchor="middle" textLength="24.1" lengthAdjust="spacingAndGlyphs">11:15</text>
<text x="1897" y="0" font-size="11.3" fill="#c4c4c4" textLength="12.9" lengthAdjust="spacingAndGlyphs">AM</text>
</g>
<g transform="translate(1045.4,0) rotate(90)">
<text x="1820.2" y="0" font-size="11.3" fill="#c4c4c4" textLength="36.6" lengthAdjust="spacingAndGlyphs">6/10/24,</text>
<text x="1877.1" y="0" font-size="11.3" fill="#c4c4c4" text-anchor="middle" textLength="24.1" lengthAdjust="spacingAndGlyphs">11:10</text>
<text x="1897" y="0" font-size="11.3" fill="#c4c4c4" textLength="12.9" lengthAdjust="spacingAndGlyphs">AM</text>
</g>
<g transform="translate(1058.1,0) rotate(90)">
<text x="1820.2" y="0" font-size="11.3" fill="#c4c4c4" textLength="36.6" lengthAdjust="spacingAndGlyphs">6/10/24,</text>
<text x="1877.1" y="0" font-size="11.3" fill="#c4c4c4" text-anchor="middle" textLength="24.1" lengthAdjust="spacingAndGlyphs">11:05</text>
<text x="1897" y="0" font-size="11.3" fill="#c4c4c4" textLength="12.9" lengthAdjust="spacingAndGlyphs">AM</text>
</g>
<g transform="translate(1070.8,0) rotate(90)">
<text x="1820.2" y="0" font-size="11.3" fill="#c4c4c4" textLength="36.6" lengthAdjust="spacingAndGlyphs">6/10/24,</text>
<text x="1877.1" y="0" font-size="11.3" fill="#c4c4c4" text-anchor="middle" textLength="24.1" lengthAdjust="spacingAndGlyphs">11:00</text>
<text x="1897" y="0" font-size="11.3" fill="#c4c4c4" textLength="12.9" lengthAdjust="spacingAndGlyphs">AM</text>
</g>
<g transform="translate(1083.5,0) rotate(90)">
<text x="1820.2" y="0" font-size="11.3" fill="#c4c4c4" textLength="36.6" lengthAdjust="spacingAndGlyphs">6/10/24,</text>
<text x="1877.1" y="0" font-size="11.3" fill="#c4c4c4" text-anchor="middle" textLength="24.1" lengthAdjust="spacingAndGlyphs">10:55</text>
<text x="1897" y="0" font-size="11.3" fill="#c4c4c4" textLength="12.9" lengthAdjust="spacingAndGlyphs">AM</text>
</g>
<g transform="translate(1096.2,0) rotate(90)">
<text x="1820.2" y="0" font-size="11.3" fill="#c4c4c4" textLength="36.6" lengthAdjust="spacingAndGlyphs">6/10/24,</text>
<text x="1877.1" y="0" font-size="11.3" fill="#c4c4c4" text-anchor="middle" textLength="24.1" lengthAdjust="spacingAndGlyphs">10:50</text>
<text x="1897" y="0" font-size="11.3" fill="#c4c4c4" textLength="12.9" lengthAdjust="spacingAndGlyphs">AM</text>
</g>
<g transform="translate(1109.0,0) rotate(90)">
<text x="1820.2" y="0" font-size="11.3" fill="#c4c4c4" textLength="36.6" lengthAdjust="spacingAndGlyphs">6/10/24,</text>
<text x="1877.1" y="0" font-size="11.3" fill="#c4c4c4" text-anchor="middle" textLength="24.1" lengthAdjust="spacingAndGlyphs">10:45</text>
<text x="1897" y="0" font-size="11.3" fill="#c4c4c4" textLength="12.9" lengthAdjust="spacingAndGlyphs">AM</text>
</g>
<g transform="translate(1121.7,0) rotate(90)">
<text x="1820.2" y="0" font-size="11.3" fill="#c4c4c4" textLength="36.6" lengthAdjust="spacingAndGlyphs">6/10/24,</text>
<text x="1877.1" y="0" font-size="11.3" fill="#c4c4c4" text-anchor="middle" textLength="24.1" lengthAdjust="spacingAndGlyphs">10:40</text>
<text x="1897" y="0" font-size="11.3" fill="#c4c4c4" textLength="12.9" lengthAdjust="spacingAndGlyphs">AM</text>
</g>
<g transform="translate(1134.4,0) rotate(90)">
<text x="1820.2" y="0" font-size="11.3" fill="#c4c4c4" textLength="36.6" lengthAdjust="spacingAndGlyphs">6/10/24,</text>
<text x="1877.1" y="0" font-size="11.3" fill="#c4c4c4" text-anchor="middle" textLength="24.1" lengthAdjust="spacingAndGlyphs">10:35</text>
<text x="1897" y="0" font-size="11.3" fill="#c4c4c4" textLength="12.9" lengthAdjust="spacingAndGlyphs">AM</text>
</g>
<g transform="translate(1147.1,0) rotate(90)">
<text x="1820.2" y="0" font-size="11.3" fill="#c4c4c4" textLength="36.6" lengthAdjust="spacingAndGlyphs">6/10/24,</text>
<text x="1877.1" y="0" font-size="11.3" fill="#c4c4c4" text-anchor="middle" textLength="24.1" lengthAdjust="spacingAndGlyphs">10:30</text>
<text x="1897" y="0" font-size="11.3" fill="#c4c4c4" textLength="12.9" lengthAdjust="spacingAndGlyphs">AM</text>
</g>
<g transform="translate(1159.8,0) rotate(90)">
<text x="1820.2" y="0" font-size="11.3" fill="#c4c4c4" textLength="36.6" lengthAdjust="spacingAndGlyphs">6/10/24,</text>
<text x="1877.1" y="0" font-size="11.3" fill="#c4c4c4" text-anchor="middle" textLength="24.1" lengthAdjust="spacingAndGlyphs">10:25</text>
<text x="1897" y="0" font-size="11.3" fill="#c4c4c4" textLength="12.9" lengthAdjust="spacingAndGlyphs">AM</text>
</g>
<g transform="translate(1172.6,0) rotate(90)">
<text x="1820.2" y="0" font-size="11.3" fill="#c4c4c4" textLength="36.6" lengthAdjust="spacingAndGlyphs">6/10/24,</text>
<text x="1877.1" y="0" font-size="11.3" fill="#c4c4c4" text-anchor="middle" textLength="24.1" lengthAdjust="spacingAndGlyphs">10:20</text>
<text x="1897" y="0" font-size="11.3" fill="#c4c4c4" textLength="12.9" lengthAdjust="spacingAndGlyphs">AM</text>
</g>
<g transform="translate(1185.3,0) rotate(90)">
<text x="1820.2" y="0" font-size="11.3" fill="#c4c4c4" textLength="36.6" lengthAdjust="spacingAndGlyphs">6/10/24,</text>
<text x="1877.1" y="0" font-size="11.3" fill="#c4c4c4" text-anchor="middle" textLength="24.1" lengthAdjust="spacingAndGlyphs">10:15</text>
<text x="1897" y="0" font-size="11.3" fill="#c4c4c4" textLength="12.9" lengthAdjust="spacingAndGlyphs">AM</text>
</g>
<g transform="translate(1198.0,0) rotate(90)">
<text x="1820.2" y="0" font-size="11.3" fill="#c4c4c4" textLength="36.6" lengthAdjust="spacingAndGlyphs">6/10/24,</text>
<text x="1877.1" y="0" font-size="11.3" fill="#c4c4c4" text-anchor="middle" textLength="24.1" lengthAdjust="spacingAndGlyphs">10:10</text>
<text x="1897" y="0" font-size="11.3" fill="#c4c4c4" textLength="12.9" lengthAdjust="spacingAndGlyphs">AM</text>
</g>
<g transform="translate(1210.7,0) rotate(90)">
<text x="1820.2" y="0" font-size="11.3" fill="#c4c4c4" textLength="36.6" lengthAdjust="spacingAndGlyphs">6/10/24,</text>
<text x="1877.1" y="0" font-size="11.3" fill="#c4c4c4" text-anchor="middle" textLength="24.1" lengthAdjust="spacingAndGlyphs">10:05</text>
<text x="1897" y="0" font-size="11.3" fill="#c4c4c4" textLength="12.9" lengthAdjust="spacingAndGlyphs">AM</text>
</g>
<g transform="translate(1223.4,0) rotate(90)">
<text x="1820.2" y="0" font-size="11.3" fill="#c4c4c4" textLength="36.6" lengthAdjust="spacingAndGlyphs">6/10/24,</text>
<text x="1877.1" y="0" font-size="11.3" fill="#c4c4c4" text-anchor="middle" textLength="24.1" lengthAdjust="spacingAndGlyphs">10:00</text>
<text x="1897" y="0" font-size="11.3" fill="#c4c4c4" textLength="12.9" lengthAdjust="spacingAndGlyphs">AM</text>
</g>
<g transform="translate(1236.2,0) rotate(90)">
<text x="1820.2" y="0" font-size="11.3" fill="#c4c4c4" textLength="36.6" lengthAdjust="spacingAndGlyphs">6/10/24,</text>
<text x="1877.1" y="0" font-size="11.3" fill="#c4c4c4" text-anchor="middle" textLength="17.6" lengthAdjust="spacingAndGlyphs">9:55</text>
<text x="1897" y="0" font-size="11.3" fill="#c4c4c4" textLength="12.9" lengthAdjust="spacingAndGlyphs">AM</text>
</g>
<g transform="translate(1248.9,0) rotate(90)">
<text x="1820.2" y="0" font-size="11.3" fill="#c4c4c4" textLength="36.6" lengthAdjust="spacingAndGlyphs">6/10/24,</text>
<text x="1877.1" y="0" font-size="11.3" fill="#c4c4c4" text-anchor="middle" textLength="17.6" lengthAdjust="spacingAndGlyphs">9:50</text>
<text x="1897" y="0" font-size="11.3" fill="#c4c4c4" textLength="12.9" lengthAdjust="spacingAndGlyphs">AM</text>
</g>
<g transform="translate(1261.6,0) rotate(90)">
<text x="1820.2" y="0" font-size="11.3" fill="#c4c4c4" textLength="36.6" lengthAdjust="spacingAndGlyphs">6/10/24,</text>
<text x="1877.1" y="0" font-size="11.3" fill="#c4c4c4" text-anchor="middle" textLength="17.6" lengthAdjust="spacingAndGlyphs">9:45</text>
<text x="1897" y="0" font-size="11.3" fill="#c4c4c4" textLength="12.9" lengthAdjust="spacingAndGlyphs">AM</text>
</g>
<g transform="translate(1274.3,0) rotate(90)">
<text x="1820.2" y="0" font-size="11.3" fill="#c4c4c4" textLength="36.6" lengthAdjust="spacingAndGlyphs">6/10/24,</text>
<text x="1877.1" y="0" font-size="11.3" fill="#c4c4c4" text-anchor="middle" textLength="17.6" lengthAdjust="spacingAndGlyphs">9:40</text>
<text x="1897" y="0" font-size="11.3" fill="#c4c4c4" textLength="12.9" lengthAdjust="spacingAndGlyphs">AM</text>
</g>
<g transform="translate(1287.0,0) rotate(90)">
<text x="1820.2" y="0" font-size="11.3" fill="#c4c4c4" textLength="36.6" lengthAdjust="spacingAndGlyphs">6/10/24,</text>
<text x="1877.1" y="0" font-size="11.3" fill="#c4c4c4" text-anchor="middle" textLength="17.6" lengthAdjust="spacingAndGlyphs">9:35</text>
<text x="1897" y="0" font-size="11.3" fill="#c4c4c4" textLength="12.9" lengthAdjust="spacingAndGlyphs">AM</text>
</g>
<g transform="translate(1299.8,0) rotate(90)">
<text x="1820.2" y="0" font-size="11.3" fill="#c4c4c4" textLength="36.6" lengthAdjust="spacingAndGlyphs">6/10/24,</text>
<text x="1877.1" y="0" font-size="11.3" fill="#c4c4c4" text-anchor="middle" textLength="17.6" lengthAdjust="spacingAndGlyphs">9:30</text>
<text x="1897" y="0" font-size="11.3" fill="#c4c4c4" textLength="12.9" lengthAdjust="spacingAndGlyphs">AM</text>
</g>
<g transform="translate(1312.5,0) rotate(90)">
<text x="1820.2" y="0" font-size="11.3" fill="#c4c4c4" textLength="36.6" lengthAdjust="spacingAndGlyphs">6/10/24,</text>
<text x="1877.1" y="0" font-size="11.3" fill="#c4c4c4" text-anchor="middle" textLength="17.6" lengthAdjust="spacingAndGlyphs">9:25</text>
<text x="1897" y="0" font-size="11.3" fill="#c4c4c4" textLength="12.9" lengthAdjust="spacingAndGlyphs">AM</text>
</g>
<g transform="translate(1325.2,0) rotate(90)">
<text x="1820.2" y="0" font-size="11.3" fill="#c4c4c4" textLength="36.6" lengthAdjust="spacingAndGlyphs">6/10/24,</text>
<text x="1877.1" y="0" font-size="11.3" fill="#c4c4c4" text-anchor="middle" textLength="17.6" lengthAdjust="spacingAndGlyphs">9:20</text>
<text x="1897" y="0" font-size="11.3" fill="#c4c4c4" textLength="12.9" lengthAdjust="spacingAndGlyphs">AM</text>
</g>
<g transform="translate(1337.9,0) rotate(90)">
<text x="1820.2" y="0" font-size="11.3" fill="#c4c4c4" textLength="36.6" lengthAdjust="spacingAndGlyphs">6/10/24,</text>
<text x="1877.1" y="0" font-size="11.3" fill="#c4c4c4" text-anchor="middle" textLength="17.6" lengthAdjust="spacingAndGlyphs">9:15</text>
<text x="1897" y="0" font-size="11.3" fill="#c4c4c4" textLength="12.9" lengthAdjust="spacingAndGlyphs">AM</text>
</g>
<g transform="translate(1350.6,0) rotate(90)">
<text x="1820.2" y="0" font-size="11.3" fill="#c4c4c4" textLength="36.6" lengthAdjust="spacingAndGlyphs">6/10/24,</text>
<text x="1877.1" y="0" font-size="11.3" fill="#c4c4c4" text-anchor="middle" textLength="17.6" lengthAdjust="spacingAndGlyphs">9:10</text>
<text x="1897" y="0" font-size="11.3" fill="#c4c4c4" textLength="12.9" lengthAdjust="spacingAndGlyphs">AM</text>
</g>
<g transform="translate(1363.4,0) rotate(90)">
<text x="1820.2" y="0" font-size="11.3" fill="#c4c4c4" textLength="36.6" lengthAdjust="spacingAndGlyphs">6/10/24,</text>
<text x="1877.1" y="0" font-size="11.3" fill="#c4c4c4" text-anchor="middle" textLength="17.6" lengthAdjust="spacingAndGlyphs">9:05</text>
<text x="1897" y="0" font-size="11.3" fill="#c4c4c4" textLength="12.9" lengthAdjust="spacingAndGlyphs">AM</text>
</g>
<g transform="translate(1376.1,0) rotate(90)">
<text x="1820.2" y="0" font-size="11.3" fill="#c4c4c4" textLength="36.6" lengthAdjust="spacingAndGlyphs">6/10/24,</text>
<text x="1877.1" y="0" font-size="11.3" fill="#c4c4c4" text-anchor="middle" textLength="17.6" lengthAdjust="spacingAndGlyphs">9:00</text>
<text x="1897" y="0" font-size="11.3" fill="#c4c4c4" textLength="12.9" lengthAdjust="spacingAndGlyphs">AM</text>
</g>
<g transform="translate(1388.8,0) rotate(90)">
<text x="1820.2" y="0" font-size="11.3" fill="#c4c4c4" textLength="36.6" lengthAdjust="spacingAndGlyphs">6/10/24,</text>
<text x="1877.1" y="0" font-size="11.3" fill="#c4c4c4" text-anchor="middle" textLength="17.6" lengthAdjust="spacingAndGlyphs">8:55</text>
<text x="1897" y="0" font-size="11.3" fill="#c4c4c4" textLength="12.9" lengthAdjust="spacingAndGlyphs">AM</text>
</g>
<g transform="translate(1401.5,0) rotate(90)">
<text x="1820.2" y="0" font-size="11.3" fill="#c4c4c4" textLength="36.6" lengthAdjust="spacingAndGlyphs">6/10/24,</text>
<text x="1877.1" y="0" font-size="11.3" fill="#c4c4c4" text-anchor="middle" textLength="17.6" lengthAdjust="spacingAndGlyphs">8:50</text>
<text x="1897" y="0" font-size="11.3" fill="#c4c4c4" textLength="12.9" lengthAdjust="spacingAndGlyphs">AM</text>
</g>
<g transform="translate(1414.2,0) rotate(90)">
<text x="1820.2" y="0" font-size="11.3" fill="#c4c4c4" textLength="36.6" lengthAdjust="spacingAndGlyphs">6/10/24,</text>
<text x="1877.1" y="0" font-size="11.3" fill="#c4c4c4" text-anchor="middle" textLength="17.6" lengthAdjust="spacingAndGlyphs">8:45</text>
<text x="1897" y="0" font-size="11.3" fill="#c4c4c4" textLength="12.9" lengthAdjust="spacingAndGlyphs">AM</text>
</g>
<g transform="translate(1427.0,0) rotate(90)">
<text x="1820.2" y="0" font-size="11.3" fill="#c4c4c4" textLength="36.6" lengthAdjust="spacingAndGlyphs">6/10/24,</text>
<text x="1877.1" y="0" font-size="11.3" fill="#c4c4c4" text-anchor="middle" textLength="17.6" lengthAdjust="spacingAndGlyphs">8:40</text>
<text x="1897" y="0" font-size="11.3" fill="#c4c4c4" textLength="12.9" lengthAdjust="spacingAndGlyphs">AM</text>
</g>
<g transform="translate(1439.7,0) rotate(90)">
<text x="1820.2" y="0" font-size="11.3" fill="#c4c4c4" textLength="36.6" lengthAdjust="spacingAndGlyphs">6/10/24,</text>
<text x="1877.1" y="0" font-size="11.3" fill="#c4c4c4" text-anchor="middle" textLength="17.6" lengthAdjust="spacingAndGlyphs">8:35</text>
<text x="1897" y="0" font-size="11.3" fill="#c4c4c4" textLength="12.9" lengthAdjust="spacingAndGlyphs">AM</text>
</g>
<g transform="translate(1452.4,0) rotate(90)">
<text x="1820.2" y="0" font-size="11.3" fill="#c4c4c4" textLength="36.6" lengthAdjust="spacingAndGlyphs">6/10/24,</text>
<text x="1877.1" y="0" font-size="11.3" fill="#c4c4c4" text-anchor="middle" textLength="17.6" lengthAdjust="spacingAndGlyphs">8:30</text>
<text x="1897" y="0" font-size="11.3" fill="#c4c4c4" textLength="12.9" lengthAdjust="spacingAndGlyphs">AM</text>
</g>
<g transform="translate(1465.1,0) rotate(90)">
<text x="1820.2" y="0" font-size="11.3" fill="#c4c4c4" textLength="36.6" lengthAdjust="spacingAndGlyphs">6/10/24,</text>
<text x="1877.1" y="0" font-size="11.3" fill="#c4c4c4" text-anchor="middle" textLength="17.6" lengthAdjust="spacingAndGlyphs">8:25</text>
<text x="1897" y="0" font-size="11.3" fill="#c4c4c4" textLength="12.9" lengthAdjust="spacingAndGlyphs">AM</text>
</g>
<g transform="translate(1477.8,0) rotate(90)">
<text x="1820.2" y="0" font-size="11.3" fill="#c4c4c4" textLength="36.6" lengthAdjust="spacingAndGlyphs">6/10/24,</text>
<text x="1877.1" y="0" font-size="11.3" fill="#c4c4c4" text-anchor="middle" textLength="17.6" lengthAdjust="spacingAndGlyphs">8:20</text>
<text x="1897" y="0" font-size="11.3" fill="#c4c4c4" textLength="12.9" lengthAdjust="spacingAndGlyphs">AM</text>
</g>
<g transform="translate(1490.6,0) rotate(90)">
<text x="1820.2" y="0" font-size="11.3" fill="#c4c4c4" textLength="36.6" lengthAdjust="spacingAndGlyphs">6/10/24,</text>
<text x="1877.1" y="0" font-size="11.3" fill="#c4c4c4" text-anchor="middle" textLength="17.6" lengthAdjust="spacingAndGlyphs">8:15</text>
<text x="1897" y="0" font-size="11.3" fill="#c4c4c4" textLength="12.9" lengthAdjust="spacingAndGlyphs">AM</text>
</g>
<g transform="translate(1503.3,0) rotate(90)">
<text x="1820.2" y="0" font-size="11.3" fill="#c4c4c4" textLength="36.6" lengthAdjust="spacingAndGlyphs">6/10/24,</text>
<text x="1877.1" y="0" font-size="11.3" fill="#c4c4c4" text-anchor="middle" textLength="17.6" lengthAdjust="spacingAndGlyphs">8:10</text>
<text x="1897" y="0" font-size="11.3" fill="#c4c4c4" textLength="12.9" lengthAdjust="spacingAndGlyphs">AM</text>
</g>
<g transform="translate(1516.0,0) rotate(90)">
<text x="1820.2" y="0" font-size="11.3" fill="#c4c4c4" textLength="36.6" lengthAdjust="spacingAndGlyphs">6/10/24,</text>
<text x="1877.1" y="0" font-size="11.3" fill="#c4c4c4" text-anchor="middle" textLength="17.6" lengthAdjust="spacingAndGlyphs">8:05</text>
<text x="1897" y="0" font-size="11.3" fill="#c4c4c4" textLength="12.9" lengthAdjust="spacingAndGlyphs">AM</text>
</g>
<g transform="translate(1528.7,0) rotate(90)">
<text x="1820.2" y="0" font-size="11.3" fill="#c4c4c4" textLength="36.6" lengthAdjust="spacingAndGlyphs">6/10/24,</text>
<text x="1877.1" y="0" font-size="11.3" fill="#c4c4c4" text-anchor="middle" textLength="17.6" lengthAdjust="spacingAndGlyphs">8:00</text>
<text x="1897" y="0" font-size="11.3" fill="#c4c4c4" textLength="12.9" lengthAdjust="spacingAndGlyphs">AM</text>
</g>
<g transform="translate(1541.4,0) rotate(90)">
<text x="1820.2" y="0" font-size="11.3" fill="#c4c4c4" textLength="36.6" lengthAdjust="spacingAndGlyphs">6/10/24,</text>
<text x="1877.1" y="0" font-size="11.3" fill="#c4c4c4" text-anchor="middle" textLength="17.6" lengthAdjust="spacingAndGlyphs">7:55</text>
<text x="1897" y="0" font-size="11.3" fill="#c4c4c4" textLength="12.9" lengthAdjust="spacingAndGlyphs">AM</text>
</g>
<g transform="translate(1554.2,0) rotate(90)">
<text x="1820.2" y="0" font-size="11.3" fill="#c4c4c4" textLength="36.6" lengthAdjust="spacingAndGlyphs">6/10/24,</text>
<text x="1877.1" y="0" font-size="11.3" fill="#c4c4c4" text-anchor="middle" textLength="17.6" lengthAdjust="spacingAndGlyphs">7:50</text>
<text x="1897" y="0" font-size="11.3" fill="#c4c4c4" textLength="12.9" lengthAdjust="spacingAndGlyphs">AM</text>
</g>
<g transform="translate(1566.9,0) rotate(90)">
<text x="1820.2" y="0" font-size="11.3" fill="#c4c4c4" textLength="36.6" lengthAdjust="spacingAndGlyphs">6/10/24,</text>
<text x="1877.1" y="0" font-size="11.3" fill="#c4c4c4" text-anchor="middle" textLength="17.6" lengthAdjust="spacingAndGlyphs">7:45</text>
<text x="1897" y="0" font-size="11.3" fill="#c4c4c4" textLength="12.9" lengthAdjust="spacingAndGlyphs">AM</text>
</g>
<g transform="translate(1579.6,0) rotate(90)">
<text x="1820.2" y="0" font-size="11.3" fill="#c4c4c4" textLength="36.6" lengthAdjust="spacingAndGlyphs">6/10/24,</text>
<text x="1877.1" y="0" font-size="11.3" fill="#c4c4c4" text-anchor="middle" textLength="17.6" lengthAdjust="spacingAndGlyphs">7:40</text>
<text x="1897" y="0" font-size="11.3" fill="#c4c4c4" textLength="12.9" lengthAdjust="spacingAndGlyphs">AM</text>
</g>
<g transform="translate(1592.3,0) rotate(90)">
<text x="1820.2" y="0" font-size="11.3" fill="#c4c4c4" textLength="36.6" lengthAdjust="spacingAndGlyphs">6/10/24,</text>
<text x="1877.1" y="0" font-size="11.3" fill="#c4c4c4" text-anchor="middle" textLength="17.6" lengthAdjust="spacingAndGlyphs">7:35</text>
<text x="1897" y="0" font-size="11.3" fill="#c4c4c4" textLength="12.9" lengthAdjust="spacingAndGlyphs">AM</text>
</g>
<g transform="translate(1605.0,0) rotate(90)">
<text x="1820.2" y="0" font-size="11.3" fill="#c4c4c4" textLength="36.6" lengthAdjust="spacingAndGlyphs">6/10/24,</text>
<text x="1877.1" y="0" font-size="11.3" fill="#c4c4c4" text-anchor="middle" textLength="17.6" lengthAdjust="spacingAndGlyphs">7:30</text>
<text x="1897" y="0" font-size="11.3" fill="#c4c4c4" textLength="12.9" lengthAdjust="spacingAndGlyphs">AM</text>
</g>
<g transform="translate(1617.8,0) rotate(90)">
<text x="1820.2" y="0" font-size="11.3" fill="#c4c4c4" textLength="36.6" lengthAdjust="spacingAndGlyphs">6/10/24,</text>
<text x="1877.1" y="0" font-size="11.3" fill="#c4c4c4" text-anchor="middle" textLength="17.6" lengthAdjust="spacingAndGlyphs">7:25</text>
<text x="1897" y="0" font-size="11.3" fill="#c4c4c4" textLength="12.9" lengthAdjust="spacingAndGlyphs">AM</text>
</g>
<g transform="translate(1630.5,0) rotate(90)">
<text x="1820.2" y="0" font-size="11.3" fill="#c4c4c4" textLength="36.6" lengthAdjust="spacingAndGlyphs">6/10/24,</text>
<text x="1877.1" y="0" font-size="11.3" fill="#c4c4c4" text-anchor="middle" textLength="17.6" lengthAdjust="spacingAndGlyphs">7:20</text>
<text x="1897" y="0" font-size="11.3" fill="#c4c4c4" textLength="12.9" lengthAdjust="spacingAndGlyphs">AM</text>
</g>
<g transform="translate(1643.2,0) rotate(90)">
<text x="1820.2" y="0" font-size="11.3" fill="#c4c4c4" textLength="36.6" lengthAdjust="spacingAndGlyphs">6/10/24,</text>
<text x="1877.1" y="0" font-size="11.3" fill="#c4c4c4" text-anchor="middle" textLength="17.6" lengthAdjust="spacingAndGlyphs">7:15</text>
<text x="1897" y="0" font-size="11.3" fill="#c4c4c4" textLength="12.9" lengthAdjust="spacingAndGlyphs">AM</text>
</g>
<g transform="translate(1655.9,0) rotate(90)">
<text x="1820.2" y="0" font-size="11.3" fill="#c4c4c4" textLength="36.6" lengthAdjust="spacingAndGlyphs">6/10/24,</text>
<text x="1877.1" y="0" font-size="11.3" fill="#c4c4c4" text-anchor="middle" textLength="17.6" lengthAdjust="spacingAndGlyphs">7:10</text>
<text x="1897" y="0" font-size="11.3" fill="#c4c4c4" textLength="12.9" lengthAdjust="spacingAndGlyphs">AM</text>
</g>
<g transform="translate(1668.6,0) rotate(90)">
<text x="1820.2" y="0" font-size="11.3" fill="#c4c4c4" textLength="36.6" lengthAdjust="spacingAndGlyphs">6/10/24,</text>
<text x="1877.1" y="0" font-size="11.3" fill="#c4c4c4" text-anchor="middle" textLength="17.6" lengthAdjust="spacingAndGlyphs">7:05</text>
<text x="1897" y="0" font-size="11.3" fill="#c4c4c4" textLength="12.9" lengthAdjust="spacingAndGlyphs">AM</text>
</g>
<g transform="translate(1681.4,0) rotate(90)">
<text x="1820.2" y="0" font-size="11.3" fill="#c4c4c4" textLength="36.6" lengthAdjust="spacingAndGlyphs">6/10/24,</text>
<text x="1877.1" y="0" font-size="11.3" fill="#c4c4c4" text-anchor="middle" textLength="17.6" lengthAdjust="spacingAndGlyphs">7:00</text>
<text x="1897" y="0" font-size="11.3" fill="#c4c4c4" textLength="12.9" lengthAdjust="spacingAndGlyphs">AM</text>
</g>
<g transform="translate(1694.1,0) rotate(90)">
<text x="1820.2" y="0" font-size="11.3" fill="#c4c4c4" textLength="36.6" lengthAdjust="spacingAndGlyphs">6/10/24,</text>
<text x="1877.1" y="0" font-size="11.3" fill="#c4c4c4" text-anchor="middle" textLength="17.6" lengthAdjust="spacingAndGlyphs">6:55</text>
<text x="1897" y="0" font-size="11.3" fill="#c4c4c4" textLength="12.9" lengthAdjust="spacingAndGlyphs">AM</text>
</g>
<g transform="translate(1706.8,0) rotate(90)">
<text x="1820.2" y="0" font-size="11.3" fill="#c4c4c4" textLength="36.6" lengthAdjust="spacingAndGlyphs">6/10/24,</text>
<text x="1877.1" y="0" font-size="11.3" fill="#c4c4c4" text-anchor="middle" textLength="17.6" lengthAdjust="spacingAndGlyphs">6:50</text>
<text x="1897" y="0" font-size="11.3" fill="#c4c4c4" textLength="12.9" lengthAdjust="spacingAndGlyphs">AM</text>
</g>
<g transform="translate(1719.5,0) rotate(90)">
<text x="1820.2" y="0" font-size="11.3" fill="#c4c4c4" textLength="36.6" lengthAdjust="spacingAndGlyphs">6/10/24,</text>
<text x="1877.1" y="0" font-size="11.3" fill="#c4c4c4" text-anchor="middle" textLength="17.6" lengthAdjust="spacingAndGlyphs">6:45</text>
<text x="1897" y="0" font-size="11.3" fill="#c4c4c4" textLength="12.9" lengthAdjust="spacingAndGlyphs">AM</text>
</g>
<g transform="translate(1732.2,0) rotate(90)">
<text x="1820.2" y="0" font-size="11.3" fill="#c4c4c4" textLength="36.6" lengthAdjust="spacingAndGlyphs">6/10/24,</text>
<text x="1877.1" y="0" font-size="11.3" fill="#c4c4c4" text-anchor="middle" textLength="17.6" lengthAdjust="spacingAndGlyphs">6:40</text>
<text x="1897" y="0" font-size="11.3" fill="#c4c4c4" textLength="12.9" lengthAdjust="spacingAndGlyphs">AM</text>
</g>
<g transform="translate(1745.0,0) rotate(90)">
<text x="1820.2" y="0" font-size="11.3" fill="#c4c4c4" textLength="36.6" lengthAdjust="spacingAndGlyphs">6/10/24,</text>
<text x="1877.1" y="0" font-size="11.3" fill="#c4c4c4" text-anchor="middle" textLength="17.6" lengthAdjust="spacingAndGlyphs">6:35</text>
<text x="1897" y="0" font-size="11.3" fill="#c4c4c4" textLength="12.9" lengthAdjust="spacingAndGlyphs">AM</text>
</g>
<g transform="translate(1757.7,0) rotate(90)">
<text x="1820.2" y="0" font-size="11.3" fill="#c4c4c4" textLength="36.6" lengthAdjust="spacingAndGlyphs">6/10/24,</text>
<text x="1877.1" y="0" font-size="11.3" fill="#c4c4c4" text-anchor="middle" textLength="17.6" lengthAdjust="spacingAndGlyphs">6:30</text>
<text x="1897" y="0" font-size="11.3" fill="#c4c4c4" textLength="12.9" lengthAdjust="spacingAndGlyphs">AM</text>
</g>
<g transform="translate(1770.4,0) rotate(90)">
<text x="1820.2" y="0" font-size="11.3" fill="#c4c4c4" textLength="36.6" lengthAdjust="spacingAndGlyphs">6/10/24,</text>
<text x="1877.1" y="0" font-size="11.3" fill="#c4c4c4" text-anchor="middle" textLength="17.6" lengthAdjust="spacingAndGlyphs">6:25</text>
<text x="1897" y="0" font-size="11.3" fill="#c4c4c4" textLength="12.9" lengthAdjust="spacingAndGlyphs">AM</text>
</g>
<g transform="translate(1783.1,0) rotate(90)">
<text x="1820.2" y="0" font-size="11.3" fill="#c4c4c4" textLength="36.6" lengthAdjust="spacingAndGlyphs">6/10/24,</text>
<text x="1877.1" y="0" font-size="11.3" fill="#c4c4c4" text-anchor="middle" textLength="17.6" lengthAdjust="spacingAndGlyphs">6:20</text>
<text x="1897" y="0" font-size="11.3" fill="#c4c4c4" textLength="12.9" lengthAdjust="spacingAndGlyphs">AM</text>
</g>
<g transform="translate(1795.8,0) rotate(90)">
<text x="1820.2" y="0" font-size="11.3" fill="#c4c4c4" textLength="36.6" lengthAdjust="spacingAndGlyphs">6/10/24,</text>
<text x="1877.1" y="0" font-size="11.3" fill="#c4c4c4" text-anchor="middle" textLength="17.6" lengthAdjust="spacingAndGlyphs">6:15</text>
<text x="1897" y="0" font-size="11.3" fill="#c4c4c4" textLength="12.9" lengthAdjust="spacingAndGlyphs">AM</text>
</g>
<g transform="translate(1808.6,0) rotate(90)">
<text x="1820.2" y="0" font-size="11.3" fill="#c4c4c4" textLength="36.6" lengthAdjust="spacingAndGlyphs">6/10/24,</text>
<text x="1877.1" y="0" font-size="11.3" fill="#c4c4c4" text-anchor="middle" textLength="17.6" lengthAdjust="spacingAndGlyphs">6:10</text>
<text x="1897" y="0" font-size="11.3" fill="#c4c4c4" textLength="12.9" lengthAdjust="spacingAndGlyphs">AM</text>
</g>
<g transform="translate(1821.3,0) rotate(90)">
<text x="1820.2" y="0" font-size="11.3" fill="#c4c4c4" textLength="36.6" lengthAdjust="spacingAndGlyphs">6/10/24,</text>
<text x="1877.1" y="0" font-size="11.3" fill="#c4c4c4" text-anchor="middle" textLength="17.6" lengthAdjust="spacingAndGlyphs">6:05</text>
<text x="1897" y="0" font-size="11.3" fill="#c4c4c4" textLength="12.9" lengthAdjust="spacingAndGlyphs">AM</text>
</g>
<g transform="translate(1834.0,0) rotate(90)">
<text x="1820.2" y="0" font-size="11.3" fill="#c4c4c4" textLength="36.6" lengthAdjust="spacingAndGlyphs">6/10/24,</text>
<text x="1877.1" y="0" font-size="11.3" fill="#c4c4c4" text-anchor="middle" textLength="17.6" lengthAdjust="spacingAndGlyphs">6:00</text>
<text x="1897" y="0" font-size="11.3" fill="#c4c4c4" textLength="12.9" lengthAdjust="spacingAndGlyphs">AM</text>
</g>
<g transform="translate(1846.7,0) rotate(90)">
<text x="1820.2" y="0" font-size="11.3" fill="#c4c4c4" textLength="36.6" lengthAdjust="spacingAndGlyphs">6/10/24,</text>
<text x="1877.1" y="0" font-size="11.3" fill="#c4c4c4" text-anchor="middle" textLength="17.6" lengthAdjust="spacingAndGlyphs">5:55</text>
<text x="1897" y="0" font-size="11.3" fill="#c4c4c4" textLength="12.9" lengthAdjust="spacingAndGlyphs">AM</text>
</g>
<g transform="translate(1859.4,0) rotate(90)">
<text x="1820.2" y="0" font-size="11.3" fill="#c4c4c4" textLength="36.6" lengthAdjust="spacingAndGlyphs">6/10/24,</text>
<text x="1877.1" y="0" font-size="11.3" fill="#c4c4c4" text-anchor="middle" textLength="17.6" lengthAdjust="spacingAndGlyphs">5:50</text>
<text x="1897" y="0" font-size="11.3" fill="#c4c4c4" textLength="12.9" lengthAdjust="spacingAndGlyphs">AM</text>
</g>
<g transform="translate(1872.2,0) rotate(90)">
<text x="1820.2" y="0" font-size="11.3" fill="#c4c4c4" textLength="36.6" lengthAdjust="spacingAndGlyphs">6/10/24,</text>
<text x="1877.1" y="0" font-size="11.3" fill="#c4c4c4" text-anchor="middle" textLength="17.6" lengthAdjust="spacingAndGlyphs">5:45</text>
<text x="1897" y="0" font-size="11.3" fill="#c4c4c4" textLength="12.9" lengthAdjust="spacingAndGlyphs">AM</text>
</g>
<g transform="translate(1884.9,0) rotate(90)">
<text x="1820.2" y="0" font-size="11.3" fill="#c4c4c4" textLength="36.6" lengthAdjust="spacingAndGlyphs">6/10/24,</text>
<text x="1877.1" y="0" font-size="11.3" fill="#c4c4c4" text-anchor="middle" textLength="17.6" lengthAdjust="spacingAndGlyphs">5:40</text>
<text x="1897" y="0" font-size="11.3" fill="#c4c4c4" textLength="12.9" lengthAdjust="spacingAndGlyphs">AM</text>
</g>
<g transform="translate(1897.6,0) rotate(90)">
<text x="1820.2" y="0" font-size="11.3" fill="#c4c4c4" textLength="36.6" lengthAdjust="spacingAndGlyphs">6/10/24,</text>
<text x="1877.1" y="0" font-size="11.3" fill="#c4c4c4" text-anchor="middle" textLength="17.6" lengthAdjust="spacingAndGlyphs">5:35</text>
<text x="1897" y="0" font-size="11.3" fill="#c4c4c4" textLength="12.9" lengthAdjust="spacingAndGlyphs">AM</text>
</g>
<g transform="translate(1910.3,0) rotate(90)">
<text x="1820.2" y="0" font-size="11.3" fill="#c4c4c4" textLength="36.6" lengthAdjust="spacingAndGlyphs">6/10/24,</text>
<text x="1877.1" y="0" font-size="11.3" fill="#c4c4c4" text-anchor="middle" textLength="17.6" lengthAdjust="spacingAndGlyphs">5:30</text>
<text x="1897" y="0" font-size="11.3" fill="#c4c4c4" textLength="12.9" lengthAdjust="spacingAndGlyphs">AM</text>
</g>
<g transform="translate(1923.0,0) rotate(90)">
<text x="1820.2" y="0" font-size="11.3" fill="#c4c4c4" textLength="36.6" lengthAdjust="spacingAndGlyphs">6/10/24,</text>
<text x="1877.1" y="0" font-size="11.3" fill="#c4c4c4" text-anchor="middle" textLength="17.6" lengthAdjust="spacingAndGlyphs">5:25</text>
<text x="1897" y="0" font-size="11.3" fill="#c4c4c4" textLength="12.9" lengthAdjust="spacingAndGlyphs">AM</text>
</g>
<g transform="translate(1935.8,0) rotate(90)">
<text x="1820.2" y="0" font-size="11.3" fill="#c4c4c4" textLength="36.6" lengthAdjust="spacingAndGlyphs">6/10/24,</text>
<text x="1877.1" y="0" font-size="11.3" fill="#c4c4c4" text-anchor="middle" textLength="17.6" lengthAdjust="spacingAndGlyphs">5:20</text>
<text x="1897" y="0" font-size="11.3" fill="#c4c4c4" textLength="12.9" lengthAdjust="spacingAndGlyphs">AM</text>
</g>
<g transform="translate(1948.5,0) rotate(90)">
<text x="1820.2" y="0" font-size="11.3" fill="#c4c4c4" textLength="36.6" lengthAdjust="spacingAndGlyphs">6/10/24,</text>
<text x="1877.1" y="0" font-size="11.3" fill="#c4c4c4" text-anchor="middle" textLength="17.6" lengthAdjust="spacingAndGlyphs">5:15</text>
<text x="1897" y="0" font-size="11.3" fill="#c4c4c4" textLength="12.9" lengthAdjust="spacingAndGlyphs">AM</text>
</g>
<g transform="translate(1961.2,0) rotate(90)">
<text x="1820.2" y="0" font-size="11.3" fill="#c4c4c4" textLength="36.6" lengthAdjust="spacingAndGlyphs">6/10/24,</text>
<text x="1877.1" y="0" font-size="11.3" fill="#c4c4c4" text-anchor="middle" textLength="17.6" lengthAdjust="spacingAndGlyphs">5:10</text>
<text x="1897" y="0" font-size="11.3" fill="#c4c4c4" textLength="12.9" lengthAdjust="spacingAndGlyphs">AM</text>
</g>
<g transform="translate(1973.9,0) rotate(90)">
<text x="1820.2" y="0" font-size="11.3" fill="#c4c4c4" textLength="36.6" lengthAdjust="spacingAndGlyphs">6/10/24,</text>
<text x="1877.1" y="0" font-size="11.3" fill="#c4c4c4" text-anchor="middle" textLength="17.6" lengthAdjust="spacingAndGlyphs">5:05</text>
<text x="1897" y="0" font-size="11.3" fill="#c4c4c4" textLength="12.9" lengthAdjust="spacingAndGlyphs">AM</text>
</g>
<g transform="translate(1986.6,0) rotate(90)">
<text x="1820.2" y="0" font-size="11.3" fill="#c4c4c4" textLength="36.6" lengthAdjust="spacingAndGlyphs">6/10/24,</text>
<text x="1877.1" y="0" font-size="11.3" fill="#c4c4c4" text-anchor="middle" textLength="17.6" lengthAdjust="spacingAndGlyphs">5:00</text>
<text x="1897" y="0" font-size="11.3" fill="#c4c4c4" textLength="12.9" lengthAdjust="spacingAndGlyphs">AM</text>
</g>
<g transform="translate(1999.4,0) rotate(90)">
<text x="1820.2" y="0" font-size="11.3" fill="#c4c4c4" textLength="36.6" lengthAdjust="spacingAndGlyphs">6/10/24,</text>
<text x="1877.1" y="0" font-size="11.3" fill="#c4c4c4" text-anchor="middle" textLength="17.6" lengthAdjust="spacingAndGlyphs">4:55</text>
<text x="1897" y="0" font-size="11.3" fill="#c4c4c4" textLength="12.9" lengthAdjust="spacingAndGlyphs">AM</text>
</g>
<g transform="translate(2012.1,0) rotate(90)">
<text x="1820.2" y="0" font-size="11.3" fill="#c4c4c4" textLength="36.6" lengthAdjust="spacingAndGlyphs">6/10/24,</text>
<text x="1877.1" y="0" font-size="11.3" fill="#c4c4c4" text-anchor="middle" textLength="17.6" lengthAdjust="spacingAndGlyphs">4:50</text>
<text x="1897" y="0" font-size="11.3" fill="#c4c4c4" textLength="12.9" lengthAdjust="spacingAndGlyphs">AM</text>
</g>
<g transform="translate(2024.8,0) rotate(90)">
<text x="1820.2" y="0" font-size="11.3" fill="#c4c4c4" textLength="36.6" lengthAdjust="spacingAndGlyphs">6/10/24,</text>
<text x="1877.1" y="0" font-size="11.3" fill="#c4c4c4" text-anchor="middle" textLength="17.6" lengthAdjust="spacingAndGlyphs">4:45</text>
<text x="1897" y="0" font-size="11.3" fill="#c4c4c4" textLength="12.9" lengthAdjust="spacingAndGlyphs">AM</text>
</g>
<g transform="translate(2037.5,0) rotate(90)">
<text x="1820.2" y="0" font-size="11.3" fill="#c4c4c4" textLength="36.6" lengthAdjust="spacingAndGlyphs">6/10/24,</text>
<text x="1877.1" y="0" font-size="11.3" fill="#c4c4c4" text-anchor="middle" textLength="17.6" lengthAdjust="spacingAndGlyphs">4:40</text>
<text x="1897" y="0" font-size="11.3" fill="#c4c4c4" textLength="12.9" lengthAdjust="spacingAndGlyphs">AM</text>
</g>
<g transform="translate(2050.2,0) rotate(90)">
<text x="1820.2" y="0" font-size="11.3" fill="#c4c4c4" textLength="36.6" lengthAdjust="spacingAndGlyphs">6/10/24,</text>
<text x="1877.1" y="0" font-size="11.3" fill="#c4c4c4" text-anchor="middle" textLength="17.6" lengthAdjust="spacingAndGlyphs">4:35</text>
<text x="1897" y="0" font-size="11.3" fill="#c4c4c4" textLength="12.9" lengthAdjust="spacingAndGlyphs">AM</text>
</g>
<g transform="translate(2063.0,0) rotate(90)">
<text x="1820.2" y="0" font-size="11.3" fill="#c4c4c4" textLength="36.6" lengthAdjust="spacingAndGlyphs">6/10/24,</text>
<text x="1877.1" y="0" font-size="11.3" fill="#c4c4c4" text-anchor="middle" textLength="17.6" lengthAdjust="spacingAndGlyphs">4:30</text>
<text x="1897" y="0" font-size="11.3" fill="#c4c4c4" textLength="12.9" lengthAdjust="spacingAndGlyphs">AM</text>
</g>
<g transform="translate(2075.7,0) rotate(90)">
<text x="1820.2" y="0" font-size="11.3" fill="#c4c4c4" textLength="36.6" lengthAdjust="spacingAndGlyphs">6/10/24,</text>
<text x="1877.1" y="0" font-size="11.3" fill="#c4c4c4" text-anchor="middle" textLength="17.6" lengthAdjust="spacingAndGlyphs">4:25</text>
<text x="1897" y="0" font-size="11.3" fill="#c4c4c4" textLength="12.9" lengthAdjust="spacingAndGlyphs">AM</text>
</g>
<g transform="translate(2088.4,0) rotate(90)">
<text x="1820.2" y="0" font-size="11.3" fill="#c4c4c4" textLength="36.6" lengthAdjust="spacingAndGlyphs">6/10/24,</text>
<text x="1877.1" y="0" font-size="11.3" fill="#c4c4c4" text-anchor="middle" textLength="17.6" lengthAdjust="spacingAndGlyphs">4:20</text>
<text x="1897" y="0" font-size="11.3" fill="#c4c4c4" textLength="12.9" lengthAdjust="spacingAndGlyphs">AM</text>
</g>
<g transform="translate(2101.1,0) rotate(90)">
<text x="1820.2" y="0" font-size="11.3" fill="#c4c4c4" textLength="36.6" lengthAdjust="spacingAndGlyphs">6/10/24,</text>
<text x="1877.1" y="0" font-size="11.3" fill="#c4c4c4" text-anchor="middle" textLength="17.6" lengthAdjust="spacingAndGlyphs">4:15</text>
<text x="1897" y="0" font-size="11.3" fill="#c4c4c4" textLength="12.9" lengthAdjust="spacingAndGlyphs">AM</text>
</g>
<g transform="translate(2113.8,0) rotate(90)">
<text x="1820.2" y="0" font-size="11.3" fill="#c4c4c4" textLength="36.6" lengthAdjust="spacingAndGlyphs">6/10/24,</text>
<text x="1877.1" y="0" font-size="11.3" fill="#c4c4c4" text-anchor="middle" textLength="17.6" lengthAdjust="spacingAndGlyphs">4:10</text>
<text x="1897" y="0" font-size="11.3" fill="#c4c4c4" textLength="12.9" lengthAdjust="spacingAndGlyphs">AM</text>
</g>
<g transform="translate(2126.6,0) rotate(90)">
<text x="1820.2" y="0" font-size="11.3" fill="#c4c4c4" textLength="36.6" lengthAdjust="spacingAndGlyphs">6/10/24,</text>
<text x="1877.1" y="0" font-size="11.3" fill="#c4c4c4" text-anchor="middle" textLength="17.6" lengthAdjust="spacingAndGlyphs">4:05</text>
<text x="1897" y="0" font-size="11.3" fill="#c4c4c4" textLength="12.9" lengthAdjust="spacingAndGlyphs">AM</text>
</g>
<g transform="translate(2139.3,0) rotate(90)">
<text x="1820.2" y="0" font-size="11.3" fill="#c4c4c4" textLength="36.6" lengthAdjust="spacingAndGlyphs">6/10/24,</text>
<text x="1877.1" y="0" font-size="11.3" fill="#c4c4c4" text-anchor="middle" textLength="17.6" lengthAdjust="spacingAndGlyphs">4:00</text>
<text x="1897" y="0" font-size="11.3" fill="#c4c4c4" textLength="12.9" lengthAdjust="spacingAndGlyphs">AM</text>
</g>
<g transform="translate(2152.0,0) rotate(90)">
<text x="1820.2" y="0" font-size="11.3" fill="#c4c4c4" textLength="36.6" lengthAdjust="spacingAndGlyphs">6/10/24,</text>
<text x="1877.1" y="0" font-size="11.3" fill="#c4c4c4" text-anchor="middle" textLength="17.6" lengthAdjust="spacingAndGlyphs">3:55</text>
<text x="1897" y="0" font-size="11.3" fill="#c4c4c4" textLength="12.9" lengthAdjust="spacingAndGlyphs">AM</text>
</g>
<g transform="translate(2164.7,0) rotate(90)">
<text x="1820.2" y="0" font-size="11.3" fill="#c4c4c4" textLength="36.6" lengthAdjust="spacingAndGlyphs">6/10/24,</text>
<text x="1877.1" y="0" font-size="11.3" fill="#c4c4c4" text-anchor="middle" textLength="17.6" lengthAdjust="spacingAndGlyphs">3:50</text>
<text x="1897" y="0" font-size="11.3" fill="#c4c4c4" textLength="12.9" lengthAdjust="spacingAndGlyphs">AM</text>
</g>
<g transform="translate(2177.4,0) rotate(90)">
<text x="1820.2" y="0" font-size="11.3" fill="#c4c4c4" textLength="36.6" lengthAdjust="spacingAndGlyphs">6/10/24,</text>
<text x="1877.1" y="0" font-size="11.3" fill="#c4c4c4" text-anchor="middle" textLength="17.6" lengthAdjust="spacingAndGlyphs">3:45</text>
<text x="1897" y="0" font-size="11.3" fill="#c4c4c4" textLength="12.9" lengthAdjust="spacingAndGlyphs">AM</text>
</g>
<g transform="translate(2190.2,0) rotate(90)">
<text x="1820.2" y="0" font-size="11.3" fill="#c4c4c4" textLength="36.6" lengthAdjust="spacingAndGlyphs">6/10/24,</text>
<text x="1877.1" y="0" font-size="11.3" fill="#c4c4c4" text-anchor="middle" textLength="17.6" lengthAdjust="spacingAndGlyphs">3:40</text>
<text x="1897" y="0" font-size="11.3" fill="#c4c4c4" textLength="12.9" lengthAdjust="spacingAndGlyphs">AM</text>
</g>
<g transform="translate(2202.9,0) rotate(90)">
<text x="1820.2" y="0" font-size="11.3" fill="#c4c4c4" textLength="36.6" lengthAdjust="spacingAndGlyphs">6/10/24,</text>
<text x="1877.1" y="0" font-size="11.3" fill="#c4c4c4" text-anchor="middle" textLength="17.6" lengthAdjust="spacingAndGlyphs">3:35</text>
<text x="1897" y="0" font-size="11.3" fill="#c4c4c4" textLength="12.9" lengthAdjust="spacingAndGlyphs">AM</text>
</g>
<g transform="translate(2215.6,0) rotate(90)">
<text x="1820.2" y="0" font-size="11.3" fill="#c4c4c4" textLength="36.6" lengthAdjust="spacingAndGlyphs">6/10/24,</text>
<text x="1877.1" y="0" font-size="11.3" fill="#c4c4c4" text-anchor="middle" textLength="17.6" lengthAdjust="spacingAndGlyphs">3:30</text>
<text x="1897" y="0" font-size="11.3" fill="#c4c4c4" textLength="12.9" lengthAdjust="spacingAndGlyphs">AM</text>
</g>
<g transform="translate(2228.3,0) rotate(90)">
<text x="1820.2" y="0" font-size="11.3" fill="#c4c4c4" textLength="36.6" lengthAdjust="spacingAndGlyphs">6/10/24,</text>
<text x="1877.1" y="0" font-size="11.3" fill="#c4c4c4" text-anchor="middle" textLength="17.6" lengthAdjust="spacingAndGlyphs">3:25</text>
<text x="1897" y="0" font-size="11.3" fill="#c4c4c4" textLength="12.9" lengthAdjust="spacingAndGlyphs">AM</text>
</g>
<g transform="translate(2241.0,0) rotate(90)">
<text x="1820.2" y="0" font-size="11.3" fill="#c4c4c4" textLength="36.6" lengthAdjust="spacingAndGlyphs">6/10/24,</text>
<text x="1877.1" y="0" font-size="11.3" fill="#c4c4c4" text-anchor="middle" textLength="17.6" lengthAdjust="spacingAndGlyphs">3:20</text>
<text x="1897" y="0" font-size="11.3" fill="#c4c4c4" textLength="12.9" lengthAdjust="spacingAndGlyphs">AM</text>
</g>
<g transform="translate(2253.8,0) rotate(90)">
<text x="1820.2" y="0" font-size="11.3" fill="#c4c4c4" textLength="36.6" lengthAdjust="spacingAndGlyphs">6/10/24,</text>
<text x="1877.1" y="0" font-size="11.3" fill="#c4c4c4" text-anchor="middle" textLength="17.6" lengthAdjust="spacingAndGlyphs">3:15</text>
<text x="1897" y="0" font-size="11.3" fill="#c4c4c4" textLength="12.9" lengthAdjust="spacingAndGlyphs">AM</text>
</g>
<g transform="translate(2266.5,0) rotate(90)">
<text x="1820.2" y="0" font-size="11.3" fill="#c4c4c4" textLength="36.6" lengthAdjust="spacingAndGlyphs">6/10/24,</text>
<text x="1877.1" y="0" font-size="11.3" fill="#c4c4c4" text-anchor="middle" textLength="17.6" lengthAdjust="spacingAndGlyphs">3:10</text>
<text x="1897" y="0" font-size="11.3" fill="#c4c4c4" textLength="12.9" lengthAdjust="spacingAndGlyphs">AM</text>
</g>
<g transform="translate(2279.2,0) rotate(90)">
<text x="1820.2" y="0" font-size="11.3" fill="#c4c4c4" textLength="36.6" lengthAdjust="spacingAndGlyphs">6/10/24,</text>
<text x="1877.1" y="0" font-size="11.3" fill="#c4c4c4" text-anchor="middle" textLength="17.6" lengthAdjust="spacingAndGlyphs">3:05</text>
<text x="1897" y="0" font-size="11.3" fill="#c4c4c4" textLength="12.9" lengthAdjust="spacingAndGlyphs">AM</text>
</g>
<g transform="translate(2291.9,0) rotate(90)">
<text x="1820.2" y="0" font-size="11.3" fill="#c4c4c4" textLength="36.6" lengthAdjust="spacingAndGlyphs">6/10/24,</text>
<text x="1877.1" y="0" font-size="11.3" fill="#c4c4c4" text-anchor="middle" textLength="17.6" lengthAdjust="spacingAndGlyphs">3:00</text>
<text x="1897" y="0" font-size="11.3" fill="#c4c4c4" textLength="12.9" lengthAdjust="spacingAndGlyphs">AM</text>
</g>
<g transform="translate(2304.6,0) rotate(90)">
<text x="1820.2" y="0" font-size="11.3" fill="#c4c4c4" textLength="36.6" lengthAdjust="spacingAndGlyphs">6/10/24,</text>
<text x="1877.1" y="0" font-size="11.3" fill="#c4c4c4" text-anchor="middle" textLength="17.6" lengthAdjust="spacingAndGlyphs">2:55</text>
<text x="1897" y="0" font-size="11.3" fill="#c4c4c4" textLength="12.9" lengthAdjust="spacingAndGlyphs">AM</text>
</g>
<g transform="translate(2317.4,0) rotate(90)">
<text x="1820.2" y="0" font-size="11.3" fill="#c4c4c4" textLength="36.6" lengthAdjust="spacingAndGlyphs">6/10/24,</text>
<text x="1877.1" y="0" font-size="11.3" fill="#c4c4c4" text-anchor="middle" textLength="17.6" lengthAdjust="spacingAndGlyphs">2:50</text>
<text x="1897" y="0" font-size="11.3" fill="#c4c4c4" textLength="12.9" lengthAdjust="spacingAndGlyphs">AM</text>
</g>
<g transform="translate(2330.1,0) rotate(90)">
<text x="1820.2" y="0" font-size="11.3" fill="#c4c4c4" textLength="36.6" lengthAdjust="spacingAndGlyphs">6/10/24,</text>
<text x="1877.1" y="0" font-size="11.3" fill="#c4c4c4" text-anchor="middle" textLength="17.6" lengthAdjust="spacingAndGlyphs">2:45</text>
<text x="1897" y="0" font-size="11.3" fill="#c4c4c4" textLength="12.9" lengthAdjust="spacingAndGlyphs">AM</text>
</g>
<g transform="translate(2342.8,0) rotate(90)">
<text x="1820.2" y="0" font-size="11.3" fill="#c4c4c4" textLength="36.6" lengthAdjust="spacingAndGlyphs">6/10/24,</text>
<text x="1877.1" y="0" font-size="11.3" fill="#c4c4c4" text-anchor="middle" textLength="17.6" lengthAdjust="spacingAndGlyphs">2:40</text>
<text x="1897" y="0" font-size="11.3" fill="#c4c4c4" textLength="12.9" lengthAdjust="spacingAndGlyphs">AM</text>
</g>
<g transform="translate(2355.5,0) rotate(90)">
<text x="1820.2" y="0" font-size="11.3" fill="#c4c4c4" textLength="36.6" lengthAdjust="spacingAndGlyphs">6/10/24,</text>
<text x="1877.1" y="0" font-size="11.3" fill="#c4c4c4" text-anchor="middle" textLength="17.6" lengthAdjust="spacingAndGlyphs">2:35</text>
<text x="1897" y="0" font-size="11.3" fill="#c4c4c4" textLength="12.9" lengthAdjust="spacingAndGlyphs">AM</text>
</g>
<g transform="translate(2368.2,0) rotate(90)">
<text x="1820.2" y="0" font-size="11.3" fill="#c4c4c4" textLength="36.6" lengthAdjust="spacingAndGlyphs">6/10/24,</text>
<text x="1877.1" y="0" font-size="11.3" fill="#c4c4c4" text-anchor="middle" textLength="17.6" lengthAdjust="spacingAndGlyphs">2:30</text>
<text x="1897" y="0" font-size="11.3" fill="#c4c4c4" textLength="12.9" lengthAdjust="spacingAndGlyphs">AM</text>
</g>
<g transform="translate(2381.0,0) rotate(90)">
<text x="1820.2" y="0" font-size="11.3" fill="#c4c4c4" textLength="36.6" lengthAdjust="spacingAndGlyphs">6/10/24,</text>
<text x="1877.1" y="0" font-size="11.3" fill="#c4c4c4" text-anchor="middle" textLength="17.6" lengthAdjust="spacingAndGlyphs">2:25</text>
<text x="1897" y="0" font-size="11.3" fill="#c4c4c4" textLength="12.9" lengthAdjust="spacingAndGlyphs">AM</text>
</g>
<g transform="translate(2393.7,0) rotate(90)">
<text x="1820.2" y="0" font-size="11.3" fill="#c4c4c4" textLength="36.6" lengthAdjust="spacingAndGlyphs">6/10/24,</text>
<text x="1877.1" y="0" font-size="11.3" fill="#c4c4c4" text-anchor="middle" textLength="17.6" lengthAdjust="spacingAndGlyphs">2:20</text>
<text x="1897" y="0" font-size="11.3" fill="#c4c4c4" textLength="12.9" lengthAdjust="spacingAndGlyphs">AM</text>
</g>
<g transform="translate(2406.4,0) rotate(90)">
<text x="1820.2" y="0" font-size="11.3" fill="#c4c4c4" textLength="36.6" lengthAdjust="spacingAndGlyphs">6/10/24,</text>
<text x="1877.1" y="0" font-size="11.3" fill="#c4c4c4" text-anchor="middle" textLength="17.6" lengthAdjust="spacingAndGlyphs">2:15</text>
<text x="1897" y="0" font-size="11.3" fill="#c4c4c4" textLength="12.9" lengthAdjust="spacingAndGlyphs">AM</text>
</g>
<g transform="translate(2419.1,0) rotate(90)">
<text x="1820.2" y="0" font-size="11.3" fill="#c4c4c4" textLength="36.6" lengthAdjust="spacingAndGlyphs">6/10/24,</text>
<text x="1877.1" y="0" font-size="11.3" fill="#c4c4c4" text-anchor="middle" textLength="17.6" lengthAdjust="spacingAndGlyphs">2:10</text>
<text x="1897" y="0" font-size="11.3" fill="#c4c4c4" textLength="12.9" lengthAdjust="spacingAndGlyphs">AM</text>
</g>
<g transform="translate(2431.8,0) rotate(90)">
<text x="1820.2" y="0" font-size="11.3" fill="#c4c4c4" textLength="36.6" lengthAdjust="spacingAndGlyphs">6/10/24,</text>
<text x="1877.1" y="0" font-size="11.3" fill="#c4c4c4" text-anchor="middle" textLength="17.6" lengthAdjust="spacingAndGlyphs">2:05</text>
<text x="1897" y="0" font-size="11.3" fill="#c4c4c4" textLength="12.9" lengthAdjust="spacingAndGlyphs">AM</text>
</g>
<g transform="translate(2444.6,0) rotate(90)">
<text x="1820.2" y="0" font-size="11.3" fill="#c4c4c4" textLength="36.6" lengthAdjust="spacingAndGlyphs">6/10/24,</text>
<text x="1877.1" y="0" font-size="11.3" fill="#c4c4c4" text-anchor="middle" textLength="17.6" lengthAdjust="spacingAndGlyphs">2:00</text>
<text x="1897" y="0" font-size="11.3" fill="#c4c4c4" textLength="12.9" lengthAdjust="spacingAndGlyphs">AM</text>
</g>
<g transform="translate(2457.3,0) rotate(90)">
<text x="1820.2" y="0" font-size="11.3" fill="#c4c4c4" textLength="36.6" lengthAdjust="spacingAndGlyphs">6/10/24,</text>
<text x="1877.1" y="0" font-size="11.3" fill="#c4c4c4" text-anchor="middle" textLength="17.6" lengthAdjust="spacingAndGlyphs">1:55</text>
<text x="1897" y="0" font-size="11.3" fill="#c4c4c4" textLength="12.9" lengthAdjust="spacingAndGlyphs">AM</text>
</g>
<g transform="translate(2470.0,0) rotate(90)">
<text x="1820.2" y="0" font-size="11.3" fill="#c4c4c4" textLength="36.6" lengthAdjust="spacingAndGlyphs">6/10/24,</text>
<text x="1877.1" y="0" font-size="11.3" fill="#c4c4c4" text-anchor="middle" textLength="17.6" lengthAdjust="spacingAndGlyphs">1:50</text>
<text x="1897" y="0" font-size="11.3" fill="#c4c4c4" textLength="12.9" lengthAdjust="spacingAndGlyphs">AM</text>
</g>
<g transform="translate(2482.7,0) rotate(90)">
<text x="1820.2" y="0" font-size="11.3" fill="#c4c4c4" textLength="36.6" lengthAdjust="spacingAndGlyphs">6/10/24,</text>
<text x="1877.1" y="0" font-size="11.3" fill="#c4c4c4" text-anchor="middle" textLength="17.6" lengthAdjust="spacingAndGlyphs">1:45</text>
<text x="1897" y="0" font-size="11.3" fill="#c4c4c4" textLength="12.9" lengthAdjust="spacingAndGlyphs">AM</text>
</g>
<g transform="translate(2495.4,0) rotate(90)">
<text x="1820.2" y="0" font-size="11.3" fill="#c4c4c4" textLength="36.6" lengthAdjust="spacingAndGlyphs">6/10/24,</text>
<text x="1877.1" y="0" font-size="11.3" fill="#c4c4c4" text-anchor="middle" textLength="17.6" lengthAdjust="spacingAndGlyphs">1:40</text>
<text x="1897" y="0" font-size="11.3" fill="#c4c4c4" textLength="12.9" lengthAdjust="spacingAndGlyphs">AM</text>
</g>
<g transform="translate(2508.2,0) rotate(90)">
<text x="1820.2" y="0" font-size="11.3" fill="#c4c4c4" textLength="36.6" lengthAdjust="spacingAndGlyphs">6/10/24,</text>
<text x="1877.1" y="0" font-size="11.3" fill="#c4c4c4" text-anchor="middle" textLength="17.6" lengthAdjust="spacingAndGlyphs">1:35</text>
<text x="1897" y="0" font-size="11.3" fill="#c4c4c4" textLength="12.9" lengthAdjust="spacingAndGlyphs">AM</text>
</g>
<g transform="translate(2520.9,0) rotate(90)">
<text x="1820.2" y="0" font-size="11.3" fill="#c4c4c4" textLength="36.6" lengthAdjust="spacingAndGlyphs">6/10/24,</text>
<text x="1877.1" y="0" font-size="11.3" fill="#c4c4c4" text-anchor="middle" textLength="17.6" lengthAdjust="spacingAndGlyphs">1:30</text>
<text x="1897" y="0" font-size="11.3" fill="#c4c4c4" textLength="12.9" lengthAdjust="spacingAndGlyphs">AM</text>
</g>
<g transform="translate(2533.6,0) rotate(90)">
<text x="1820.2" y="0" font-size="11.3" fill="#c4c4c4" textLength="36.6" lengthAdjust="spacingAndGlyphs">6/10/24,</text>
<text x="1877.1" y="0" font-size="11.3" fill="#c4c4c4" text-anchor="middle" textLength="17.6" lengthAdjust="spacingAndGlyphs">1:25</text>
<text x="1897" y="0" font-size="11.3" fill="#c4c4c4" textLength="12.9" lengthAdjust="spacingAndGlyphs">AM</text>
</g>
<g transform="translate(2546.3,0) rotate(90)">
<text x="1820.2" y="0" font-size="11.3" fill="#c4c4c4" textLength="36.6" lengthAdjust="spacingAndGlyphs">6/10/24,</text>
<text x="1877.1" y="0" font-size="11.3" fill="#c4c4c4" text-anchor="middle" textLength="17.6" lengthAdjust="spacingAndGlyphs">1:20</text>
<text x="1897" y="0" font-size="11.3" fill="#c4c4c4" textLength="12.9" lengthAdjust="spacingAndGlyphs">AM</text>
</g>
<g transform="translate(2559.0,0) rotate(90)">
<text x="1820.2" y="0" font-size="11.3" fill="#c4c4c4" textLength="36.6" lengthAdjust="spacingAndGlyphs">6/10/24,</text>
<text x="1877.1" y="0" font-size="11.3" fill="#c4c4c4" text-anchor="middle" textLength="17.6" lengthAdjust="spacingAndGlyphs">1:15</text>
<text x="1897" y="0" font-size="11.3" fill="#c4c4c4" textLength="12.9" lengthAdjust="spacingAndGlyphs">AM</text>
</g>
<g transform="translate(2571.8,0) rotate(90)">
<text x="1820.2" y="0" font-size="11.3" fill="#c4c4c4" textLength="36.6" lengthAdjust="spacingAndGlyphs">6/10/24,</text>
<text x="1877.1" y="0" font-size="11.3" fill="#c4c4c4" text-anchor="middle" textLength="17.6" lengthAdjust="spacingAndGlyphs">1:10</text>
<text x="1897" y="0" font-size="11.3" fill="#c4c4c4" textLength="12.9" lengthAdjust="spacingAndGlyphs">AM</text>
</g>
<g transform="translate(2584.5,0) rotate(90)">
<text x="1820.2" y="0" font-size="11.3" fill="#c4c4c4" textLength="36.6" lengthAdjust="spacingAndGlyphs">6/10/24,</text>
<text x="1877.1" y="0" font-size="11.3" fill="#c4c4c4" text-anchor="middle" textLength="17.6" lengthAdjust="spacingAndGlyphs">1:05</text>
<text x="1897" y="0" font-size="11.3" fill="#c4c4c4" textLength="12.9" lengthAdjust="spacingAndGlyphs">AM</text>
</g>
<g transform="translate(2597.2,0) rotate(90)">
<text x="1820.2" y="0" font-size="11.3" fill="#c4c4c4" textLength="36.6" lengthAdjust="spacingAndGlyphs">6/10/24,</text>
<text x="1877.1" y="0" font-size="11.3" fill="#c4c4c4" text-anchor="middle" textLength="17.6" lengthAdjust="spacingAndGlyphs">1:00</text>
<text x="1897" y="0" font-size="11.3" fill="#c4c4c4" textLength="12.9" lengthAdjust="spacingAndGlyphs">AM</text>
</g>
<g transform="translate(2609.9,0) rotate(90)">
<text x="1820.2" y="0" font-size="11.3" fill="#c4c4c4" textLength="36.6" lengthAdjust="spacingAndGlyphs">6/10/24,</text>
<text x="1877.1" y="0" font-size="11.3" fill="#c4c4c4" text-anchor="middle" textLength="24.1" lengthAdjust="spacingAndGlyphs">12:55</text>
<text x="1897" y="0" font-size="11.3" fill="#c4c4c4" textLength="12.9" lengthAdjust="spacingAndGlyphs">AM</text>
</g>
<g transform="translate(2622.6,0) rotate(90)">
<text x="1820.2" y="0" font-size="11.3" fill="#c4c4c4" textLength="36.6" lengthAdjust="spacingAndGlyphs">6/10/24,</text>
<text x="1877.1" y="0" font-size="11.3" fill="#c4c4c4" text-anchor="middle" textLength="24.1" lengthAdjust="spacingAndGlyphs">12:50</text>
<text x="1897" y="0" font-size="11.3" fill="#c4c4c4" textLength="12.9" lengthAdjust="spacingAndGlyphs">AM</text>
</g>
<g transform="translate(2635.4,0) rotate(90)">
<text x="1820.2" y="0" font-size="11.3" fill="#c4c4c4" textLength="36.6" lengthAdjust="spacingAndGlyphs">6/10/24,</text>
<text x="1877.1" y="0" font-size="11.3" fill="#c4c4c4" text-anchor="middle" textLength="24.1" lengthAdjust="spacingAndGlyphs">12:45</text>
<text x="1897" y="0" font-size="11.3" fill="#c4c4c4" textLength="12.9" lengthAdjust="spacingAndGlyphs">AM</text>
</g>
<g transform="translate(2648.1,0) rotate(90)">
<text x="1820.2" y="0" font-size="11.3" fill="#c4c4c4" textLength="36.6" lengthAdjust="spacingAndGlyphs">6/10/24,</text>
<text x="1877.1" y="0" font-size="11.3" fill="#c4c4c4" text-anchor="middle" textLength="24.1" lengthAdjust="spacingAndGlyphs">12:40</text>
<text x="1897" y="0" font-size="11.3" fill="#c4c4c4" textLength="12.9" lengthAdjust="spacingAndGlyphs">AM</text>
</g>
<g transform="translate(2660.8,0) rotate(90)">
<text x="1820.2" y="0" font-size="11.3" fill="#c4c4c4" textLength="36.6" lengthAdjust="spacingAndGlyphs">6/10/24,</text>
<text x="1877.1" y="0" font-size="11.3" fill="#c4c4c4" text-anchor="middle" textLength="24.1" lengthAdjust="spacingAndGlyphs">12:35</text>
<text x="1897" y="0" font-size="11.3" fill="#c4c4c4" textLength="12.9" lengthAdjust="spacingAndGlyphs">AM</text>
</g>
<g transform="translate(2673.5,0) rotate(90)">
<text x="1820.2" y="0" font-size="11.3" fill="#c4c4c4" textLength="36.6" lengthAdjust="spacingAndGlyphs">6/10/24,</text>
<text x="1877.1" y="0" font-size="11.3" fill="#c4c4c4" text-anchor="middle" textLength="24.1" lengthAdjust="spacingAndGlyphs">12:30</text>
<text x="1897" y="0" font-size="11.3" fill="#c4c4c4" textLength="12.9" lengthAdjust="spacingAndGlyphs">AM</text>
</g>
<g transform="translate(2686.2,0) rotate(90)">
<text x="1820.2" y="0" font-size="11.3" fill="#c4c4c4" textLength="36.6" lengthAdjust="spacingAndGlyphs">6/10/24,</text>
<text x="1877.1" y="0" font-size="11.3" fill="#c4c4c4" text-anchor="middle" textLength="24.1" lengthAdjust="spacingAndGlyphs">12:25</text>
<text x="1897" y="0" font-size="11.3" fill="#c4c4c4" textLength="12.9" lengthAdjust="spacingAndGlyphs">AM</text>
</g>
<g transform="translate(2699.0,0) rotate(90)">
<text x="1820.2" y="0" font-size="11.3" fill="#c4c4c4" textLength="36.6" lengthAdjust="spacingAndGlyphs">6/10/24,</text>
<text x="1877.1" y="0" font-size="11.3" fill="#c4c4c4" text-anchor="middle" textLength="24.1" lengthAdjust="spacingAndGlyphs">12:20</text>
<text x="1897" y="0" font-size="11.3" fill="#c4c4c4" textLength="12.9" lengthAdjust="spacingAndGlyphs">AM</text>
</g>
<g transform="translate(2711.7,0) rotate(90)">
<text x="1820.2" y="0" font-size="11.3" fill="#c4c4c4" textLength="36.6" lengthAdjust="spacingAndGlyphs">6/10/24,</text>
<text x="1877.1" y="0" font-size="11.3" fill="#c4c4c4" text-anchor="middle" textLength="24.1" lengthAdjust="spacingAndGlyphs">12:15</text>
<text x="1897" y="0" font-size="11.3" fill="#c4c4c4" textLength="12.9" lengthAdjust="spacingAndGlyphs">AM</text>
</g>
<g transform="translate(2724.4,0) rotate(90)">
<text x="1820.2" y="0" font-size="11.3" fill="#c4c4c4" textLength="36.6" lengthAdjust="spacingAndGlyphs">6/10/24,</text>
<text x="1877.1" y="0" font-size="11.3" fill="#c4c4c4" text-anchor="middle" textLength="24.1" lengthAdjust="spacingAndGlyphs">12:10</text>
<text x="1897" y="0" font-size="11.3" fill="#c4c4c4" textLength="12.9" lengthAdjust="spacingAndGlyphs">AM</text>
</g>
<g transform="translate(2737.1,0) rotate(90)">
<text x="1820.2" y="0" font-size="11.3" fill="#c4c4c4" textLength="36.6" lengthAdjust="spacingAndGlyphs">6/10/24,</text>
<text x="1877.1" y="0" font-size="11.3" fill="#c4c4c4" text-anchor="middle" textLength="24.1" lengthAdjust="spacingAndGlyphs">12:05</text>
<text x="1897" y="0" font-size="11.3" fill="#c4c4c4" textLength="12.9" lengthAdjust="spacingAndGlyphs">AM</text>
</g>
<defs><linearGradient id="lg0" x1="0" y1="0" x2="0" y2="1"><stop offset="0" stop-color="#f5b000"/><stop offset="1" stop-color="#b5b030"/></linearGradient><linearGradient id="lg1" x1="0" y1="0" x2="0" y2="1"><stop offset="0" stop-color="#3cb070"/><stop offset="1" stop-color="#20b884"/></linearGradient><linearGradient id="lg2" x1="0" y1="0" x2="0" y2="1"><stop offset="0" stop-color="#10c990"/><stop offset="1" stop-color="#18c8a0"/></linearGradient><linearGradient id="lg3" x1="0" y1="0" x2="0" y2="1"><stop offset="0" stop-color="#2ec0b8"/><stop offset="1" stop-color="#30c0c8"/></linearGradient><linearGradient id="lg4" x1="0" y1="0" x2="0" y2="1"><stop offset="0" stop-color="#52c2f2"/><stop offset="1" stop-color="#48b8f8"/></linearGradient><linearGradient id="lg5" x1="0" y1="0" x2="0" y2="1"><stop offset="0" stop-color="#3a98ff"/><stop offset="1" stop-color="#2a80ff"/></linearGradient><linearGradient id="lg6" x1="0" y1="0" x2="0" y2="1"><stop offset="0" stop-color="#0a52ff"/><stop offset="1" stop-color="#0a46f0"/></linearGradient><linearGradient id="lg7" x1="0" y1="0" x2="0" y2="1"><stop offset="0" stop-color="#0a3cc8"/><stop offset="1" stop-color="#06289a"/></linearGradient><linearGradient id="lg8" x1="0" y1="0" x2="0" y2="1"><stop offset="0" stop-color="#06124a"/><stop offset="1" stop-color="#020520"/></linearGradient></defs>
<rect x="2880.6" y="1541.6" width="8" height="21.3" fill="url(#lg0)"/>
<rect x="2880.6" y="1567.2" width="8" height="20.5" fill="url(#lg1)"/>
<rect x="2880.6" y="1592" width="8" height="20.7" fill="url(#lg2)"/>
<rect x="2880.6" y="1617.2" width="8" height="19.8" fill="url(#lg3)"/>
<rect x="2880.6" y="1642" width="8" height="19.9" fill="url(#lg4)"/>
<rect x="2880.6" y="1666.5" width="8" height="20.2" fill="url(#lg5)"/>
<rect x="2880.6" y="1691.3" width="8" height="19.9" fill="url(#lg6)"/>
<rect x="2880.6" y="1716.2" width="8" height="19.8" fill="url(#lg7)"/>
<rect x="2880.6" y="1740.7" width="8" height="20.5" fill="url(#lg8)"/>
<text x="2897" y="1549.9" font-size="15" fill="#c4c4c4" textLength="52.8" lengthAdjust="spacing">200.00</text>
<text x="2897" y="1573.7" font-size="15" fill="#c4c4c4" textLength="52.8" lengthAdjust="spacing">177.78</text>
<text x="2897" y="1597.5" font-size="15" fill="#c4c4c4" textLength="52.8" lengthAdjust="spacing">155.56</text>
<text x="2897" y="1621.4" font-size="15" fill="#c4c4c4" textLength="52.8" lengthAdjust="spacing">133.33</text>
<text x="2897" y="1645.2" font-size="15" fill="#c4c4c4" textLength="52.8" lengthAdjust="spacing">111.11</text>
<text x="2897" y="1669.0" font-size="15" fill="#c4c4c4" textLength="52.8" lengthAdjust="spacing">88.89</text>
<text x="2897" y="1692.8" font-size="15" fill="#c4c4c4" textLength="52.8" lengthAdjust="spacing">66.67</text>
<text x="2897" y="1716.6" font-size="15" fill="#c4c4c4" textLength="52.8" lengthAdjust="spacing">44.44</text>
<text x="2897" y="1740.5" font-size="15" fill="#c4c4c4" textLength="52.8" lengthAdjust="spacing">22.22</text>
<text x="2897" y="1764.3" font-size="15" fill="#c4c4c4" textLength="52.8" lengthAdjust="spacing">0.00</text>
<text x="0" y="0" font-size="16.5" fill="#c4c4c4" transform="translate(2865.6,1738.7) rotate(-90)" textLength="94" lengthAdjust="spacingAndGlyphs">Performance</text>
<text x="0" y="0" font-size="16.5" fill="#c4c4c4" transform="translate(2865.6,1602.1) rotate(-90)" textLength="38.7" lengthAdjust="spacingAndGlyphs">index</text>
</svg>
</div></body></html>
